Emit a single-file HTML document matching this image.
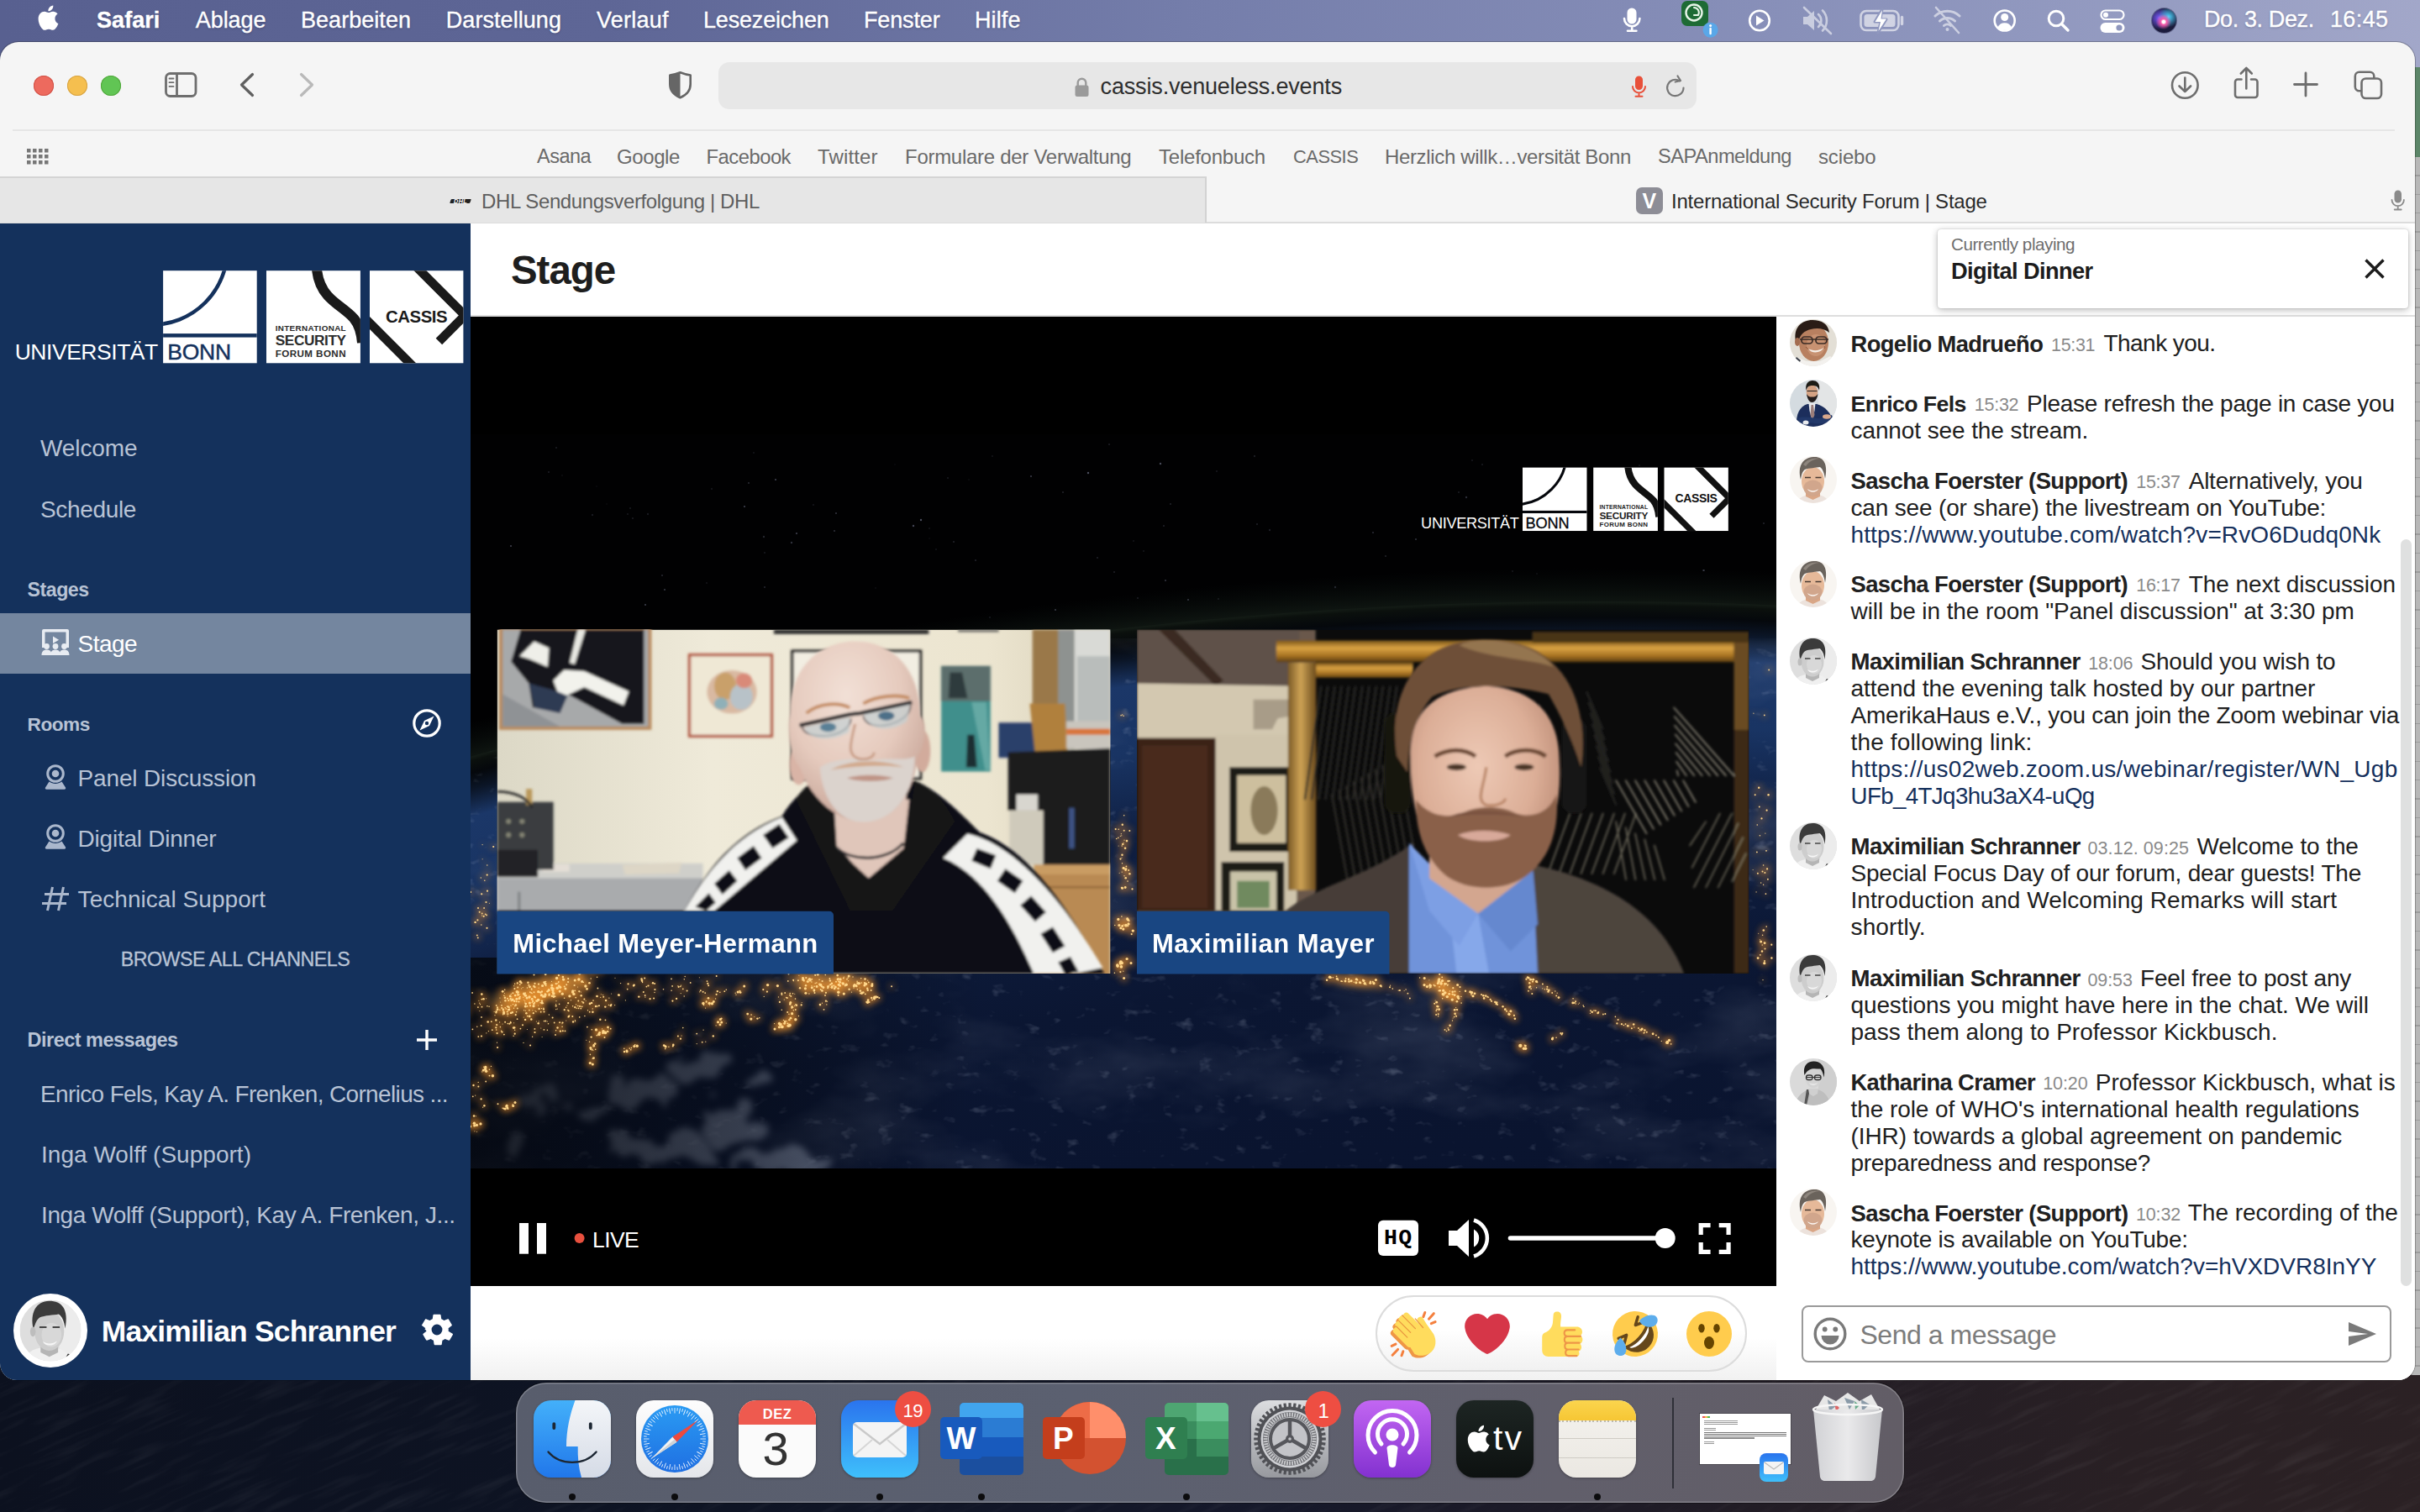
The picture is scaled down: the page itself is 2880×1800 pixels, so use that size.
<!DOCTYPE html>
<html lang="de"><head><meta charset="utf-8"><title>International Security Forum | Stage</title>
<style>
html,body{margin:0;padding:0}
body{width:2880px;height:1800px;position:relative;overflow:hidden;background:#1a1a22;font-family:"Liberation Sans",sans-serif}
.t{position:absolute;white-space:pre;line-height:1;font-family:"Liberation Sans",sans-serif}
svg{overflow:visible}
#desk{position:absolute;left:0;top:0;width:2880px;height:1800px;background:linear-gradient(90deg,#0c111f 0%,#0e1424 30%,#15182a 52%,#211c25 72%,#292024 88%,#2b2124 100%)}
#menubar{position:absolute;left:0;top:0;width:2880px;height:80px;background:linear-gradient(90deg,#586090 0%,#5e6696 25%,#757eab 50%,#858db7 70%,#949bc1 88%,#a2a7c9 100%)}
#win{position:absolute;left:0;top:50px;width:2874px;height:1593px;border-radius:22px 22px 20px 20px;background:#f5f5f5;overflow:hidden;box-shadow:0 0 0 1px rgba(0,0,0,.25)}
#tabbar{position:absolute;left:0;top:210px;width:2874px;height:56px;background:#f5f5f5;border-bottom:2px solid #dcdcdc;box-sizing:border-box}
#tab1{position:absolute;left:0;top:210px;width:1436px;height:55px;background:#e6e6e6;border-top:2px solid #d4d4d4;border-right:2px solid #d2d2d2;box-sizing:border-box}
</style></head>
<body>
<div id="desk"></div>
<svg style="position:absolute;left:0;top:1630px" width="2880" height="170"><defs><filter id="wp" x="0" y="0" width="100%" height="100%"><feTurbulence type="fractalNoise" baseFrequency="0.012 0.11" numOctaves="3" seed="4"/><feColorMatrix values="0 0 0 0 1  0 0 0 0 1  0 0 0 0 1  1.600 0 0 0 -.78"/></filter></defs><g transform="rotate(-24 1440 85)"><rect x="-200" y="-700" width="3300" height="1600" filter="url(#wp)" opacity=".07"/></g></svg>
<div style="position:absolute;left:2860px;top:78px;width:20px;height:110px;background:#5b8568;border-radius:14px 0 0 0"></div>
<div style="position:absolute;left:2860px;top:187px;width:20px;height:1450px;border-radius:0 0 0 12px;background:repeating-linear-gradient(180deg,#b7b7b7 0 21px,#9c9c9c 21px 22.500px)"></div>
<div id="menubar"></div>
<svg style="position:absolute;left:43px;top:5px" width="29" height="34" viewBox="0 0 170 200"><path fill="#fff" d="M150.4 68.2c-1 .8-18.600 10.700-18.600 32.800 0 25.500 22.400 34.600 23.100 34.800-.1.600-3.600 12.400-11.800 24.400-7.300 10.600-15 21.100-26.700 21.100s-14.700-6.800-28.200-6.800c-13.200 0-17.800 7-28.500 7s-18.200-9.800-26.700-21.800C23.100 145.600 15 123.600 15 102.700c0-33.500 21.800-51.300 43.200-51.300 11.400 0 20.900 7.500 28 7.500 6.800 0 17.400-7.900 30.400-7.900 4.900 0 22.500.4 34 17.200zM110.100 36.900c5.400-6.400 9.200-15.200 9.200-24 0-1.200-.1-2.500-.3-3.500-8.700.3-19.100 5.800-25.400 13.100-4.900 5.600-9.500 14.400-9.500 23.400 0 1.300.2 2.700.3 3.100.6.100 1.500.2 2.400.2 7.800 0 17.700-5.200 23.300-12.300z"/></svg>
<div class="t" style="left:115.0px;top:10.6px;font-size:27px;font-weight:700;color:#fff;letter-spacing:0.059px;text-shadow:0 1px 3px rgba(0,0,30,.25);-webkit-text-stroke:.35px #fff;">Safari</div>
<div class="t" style="left:232.7px;top:10.6px;font-size:27px;font-weight:400;color:#fff;letter-spacing:-0.030px;text-shadow:0 1px 3px rgba(0,0,30,.25);-webkit-text-stroke:.35px #fff;">Ablage</div>
<div class="t" style="left:358.0px;top:10.6px;font-size:27px;font-weight:400;color:#fff;letter-spacing:0.039px;text-shadow:0 1px 3px rgba(0,0,30,.25);-webkit-text-stroke:.35px #fff;">Bearbeiten</div>
<div class="t" style="left:530.8px;top:10.6px;font-size:27px;font-weight:400;color:#fff;letter-spacing:0.057px;text-shadow:0 1px 3px rgba(0,0,30,.25);-webkit-text-stroke:.35px #fff;">Darstellung</div>
<div class="t" style="left:710.0px;top:10.6px;font-size:27px;font-weight:400;color:#fff;letter-spacing:0.220px;text-shadow:0 1px 3px rgba(0,0,30,.25);-webkit-text-stroke:.35px #fff;">Verlauf</div>
<div class="t" style="left:837.0px;top:10.6px;font-size:27px;font-weight:400;color:#fff;letter-spacing:-0.184px;text-shadow:0 1px 3px rgba(0,0,30,.25);-webkit-text-stroke:.35px #fff;">Lesezeichen</div>
<div class="t" style="left:1028.0px;top:10.6px;font-size:27px;font-weight:400;color:#fff;letter-spacing:-0.135px;text-shadow:0 1px 3px rgba(0,0,30,.25);-webkit-text-stroke:.35px #fff;">Fenster</div>
<div class="t" style="left:1160.0px;top:10.6px;font-size:27px;font-weight:400;color:#fff;letter-spacing:0.097px;text-shadow:0 1px 3px rgba(0,0,30,.25);-webkit-text-stroke:.35px #fff;">Hilfe</div>
<div class="t" style="left:2623.0px;top:10.4px;font-size:27px;font-weight:400;color:#fff;letter-spacing:-0.387px;text-shadow:0 1px 3px rgba(0,0,30,.25);-webkit-text-stroke:.35px #fff;">Do. 3. Dez.</div>
<div class="t" style="left:2772.9px;top:10.4px;font-size:27px;font-weight:400;color:#fff;letter-spacing:0.404px;text-shadow:0 1px 3px rgba(0,0,30,.25);-webkit-text-stroke:.35px #fff;">16:45</div>
<svg style="position:absolute;left:1920px;top:0" width="700" height="50" viewBox="1920 0 700 50" fill="none" stroke="#fff" stroke-width="2.6" stroke-linecap="round" stroke-linejoin="round">
<!-- mic -->
<rect x="1936.500" y="9.500" width="11" height="19" rx="5.500" fill="#fff" stroke="none"/><path d="M1933 22a9.200 9.200 0 0 0 18.400 0M1942.200 31.500v5M1937 36.800h10.400"/>
<!-- green app -->
<rect x="2001" y="1" width="32" height="30" rx="7" fill="#1e6b35" stroke="none"/><circle cx="2016" cy="15" r="9.500" stroke="#e8f5e9" stroke-width="2.400"/><path d="M2016 9a6 6 0 0 1 5 9h-5" stroke="#e8f5e9" stroke-width="2"/>
<circle cx="2035.600" cy="35.700" r="9" fill="#5aa7e8" stroke="none"/><path d="M2035.600 34v6" stroke="#fff" stroke-width="2.400"/><circle cx="2035.600" cy="30.600" r="1.500" fill="#fff" stroke="none"/>
<!-- play -->
<circle cx="2094" cy="24.500" r="11.800"/><path d="M2090 18.500l9.500 6-9.500 6z" fill="#fff" stroke="none"/>
<!-- mute -->
<g opacity=".55"><path d="M2146 20h5l8-7v23l-8-7h-5z" fill="#fff" stroke="none"/><path d="M2164 17a10 10 0 0 1 0 15M2169 12.500a17 17 0 0 1 0 24M2147 9l32 31"/></g>
<!-- battery -->
<g opacity=".6"><rect x="2214.500" y="13" width="45" height="23" rx="6.500"/><path d="M2263.500 20.500v8" stroke-width="3.400"/><rect x="2218.500" y="17" width="37" height="15" rx="3.500" fill="#fff" stroke="none"/></g><path d="M2240 11l-9 15h7l-3 13 10-16h-7z" fill="#8f97be" stroke="#8f97be" stroke-width="3"/><path d="M2240 12l-8.500 14h6.500l-2.500 11 9.500-14.500h-6.500z" fill="#fff" stroke="none"/>
<!-- wifi off -->
<g opacity=".55"><path d="M2303 19a21 21 0 0 1 29 0M2308.500 25a13 13 0 0 1 18 0M2313.500 30.500a6 6 0 0 1 8 0" stroke-width="3"/><circle cx="2317.500" cy="35" r="2" fill="#fff" stroke="none"/><path d="M2304 9l27 30"/></g>
<!-- user -->
<circle cx="2385.700" cy="24.500" r="12"/><circle cx="2385.700" cy="20.500" r="4.500" fill="#fff" stroke="none"/><path d="M2377.500 32.500a9 9 0 0 1 16.400 0 12 12 0 0 1-16.400 0z" fill="#fff" stroke="none"/>
<!-- search -->
<circle cx="2447" cy="22" r="8.800" stroke-width="3"/><path d="M2453.500 28.500l7.500 7.500" stroke-width="3.400"/>
<!-- control center -->
<rect x="2500.500" y="12.500" width="27" height="10.500" rx="5.250" stroke-width="2.200"/><circle cx="2506" cy="17.750" r="3" fill="#fff" stroke="none"/><rect x="2499.500" y="27" width="29" height="12" rx="6" fill="#fff" stroke="none"/><circle cx="2522" cy="33" r="3.600" fill="#8f97be" stroke="none"/>
</svg>
<div style="position:absolute;left:2561px;top:10px;width:29px;height:29px;border-radius:50%;background:radial-gradient(circle at 48% 55%,#fff 0 7%,rgba(255,90,170,.95) 16%,rgba(255,90,170,0) 42%),radial-gradient(circle at 68% 35%,#4fd6ff 0,rgba(60,180,255,0) 45%),radial-gradient(circle at 30% 40%,#7a5cff 0,rgba(100,80,255,0) 50%),#1b1b3c;box-shadow:0 0 0 1px rgba(20,20,60,.4)"></div>
<div id="win"></div>
<div id="tabbar"></div><div id="tab1"></div>
<div style="position:absolute;left:40px;top:89.7px;width:24px;height:24px;border-radius:50%;background:#ed6a5e;box-shadow:inset 0 0 0 1px #d05147"></div>
<div style="position:absolute;left:79.8px;top:89.7px;width:24px;height:24px;border-radius:50%;background:#f5bf4f;box-shadow:inset 0 0 0 1px #d6a243"></div>
<div style="position:absolute;left:119.69999999999999px;top:89.7px;width:24px;height:24px;border-radius:50%;background:#61c554;box-shadow:inset 0 0 0 1px #51a73c"></div>
<div style="position:absolute;left:855px;top:74px;width:1164px;height:56px;border-radius:13px;background:#e7e7e7"></div>
<svg style="position:absolute;left:0;top:50px" width="2880" height="220" viewBox="0 50 2880 220" fill="none" stroke="#6e6e6e" stroke-width="2.800" stroke-linecap="round" stroke-linejoin="round">
<!-- sidebar icon -->
<rect x="197.500" y="87.500" width="35.500" height="27" rx="5"/><path d="M210.500 87.500v27" /><path d="M201.500 93.500h5M201.500 98.200h5M201.500 102.900h5" stroke-width="1.800"/>
<!-- back / forward -->
<path d="M300.500 88.500l-13 12.500 13 12.500" stroke="#606060" stroke-width="3.200"/><path d="M358.500 88.500l13 12.500-13 12.500" stroke="#b9b9b9" stroke-width="3.200"/>
<!-- shield -->
<path d="M809.500 86.200c4.500 1.700 8.500 2.700 12.200 3.300v10.500c0 8.500-5.500 13.500-12.200 16.200-6.700-2.700-12.200-7.700-12.200-16.200V89.500c3.700-.6 7.700-1.600 12.200-3.300z" stroke="#666" stroke-width="2.600"/><path d="M809.500 86.200c-4.500 1.700-8.500 2.700-12.200 3.300v10.500c0 8.500 5.500 13.500 12.200 16.200z" fill="#666" stroke="none"/>
<!-- lock -->
<rect x="1279.500" y="101.500" width="16" height="13.500" rx="2.500" fill="#9a9a9a" stroke="none"/><path d="M1282.700 102v-3.500a4.800 4.800 0 0 1 9.600 0V102" stroke="#9a9a9a" stroke-width="2.400"/>
<!-- red mic -->
<rect x="1946" y="90.500" width="9" height="16.500" rx="4.500" fill="#e8503a" stroke="none"/><path d="M1943 103a7.500 7.500 0 0 0 15 0M1950.500 110.500v4M1946.500 114.700h8" stroke="#e8503a" stroke-width="2"/>
<!-- reload -->
<path d="M2003.500 104.500a9.700 9.700 0 1 1-4.500-8.200" stroke="#777" stroke-width="2.200"/><path d="M1996.500 90.500l3.500 5.500-6.300 1.500" stroke="#777" stroke-width="2.200"/>
<!-- download -->
<circle cx="2600.300" cy="101.500" r="15.300" stroke-width="2.600"/><path d="M2600.300 92.500v16M2593.500 102.500l6.800 6.500 6.800-6.500" stroke-width="2.600"/>
<!-- share -->
<path d="M2667.500 94.500h-4.500a3 3 0 0 0-3 3v15.500a3 3 0 0 0 3 3h20.500a3 3 0 0 0 3-3V97.500a3 3 0 0 0-3-3h-4.500M2673.300 105.500V81.500M2666.800 87.500l6.500-6.500 6.500 6.500" stroke-width="2.600"/>
<!-- plus -->
<path d="M2744 87v27M2730.500 100.500h27" stroke-width="2.800"/>
<!-- tabs -->
<rect x="2802.800" y="85.800" width="22.500" height="22.500" rx="5" stroke-width="2.600"/><rect x="2810.500" y="93.500" width="23.500" height="23.500" rx="5" fill="#f5f5f5" stroke-width="2.600"/>
<!-- grid -->
<g fill="#777" stroke="none"><rect x="32" y="177" width="4.500" height="4.500"/><rect x="39" y="177" width="4.500" height="4.500"/><rect x="46" y="177" width="4.500" height="4.500"/><rect x="53" y="177" width="4.500" height="4.500"/><rect x="32" y="184" width="4.500" height="4.500"/><rect x="39" y="184" width="4.500" height="4.500"/><rect x="46" y="184" width="4.500" height="4.500"/><rect x="53" y="184" width="4.500" height="4.500"/><rect x="32" y="191" width="4.500" height="4.500"/><rect x="39" y="191" width="4.500" height="4.500"/><rect x="46" y="191" width="4.500" height="4.500"/><rect x="53" y="191" width="4.500" height="4.500"/></g>
<!-- tab mic -->
<rect x="2849.500" y="226.500" width="8.500" height="15" rx="4.250" fill="#8a8a8a" stroke="none"/><path d="M2846.500 238a7.200 7.200 0 0 0 14.400 0M2853.700 245.500v4M2849.700 249.500h8" stroke="#8a8a8a" stroke-width="1.800"/>
</svg>
<div class="t" style="left:1309.6px;top:90.4px;font-size:27px;font-weight:400;color:#2e2e2e;letter-spacing:-0.163px;">cassis.venueless.events</div>
<div style="position:absolute;left:15px;top:154px;width:2835px;height:2px;background:#e6e6e6"></div>
<div class="t" style="left:639.0px;top:174.9px;font-size:23.5px;font-weight:400;color:#6a6a6a;letter-spacing:-0.517px;">Asana</div>
<div class="t" style="left:734.0px;top:174.5px;font-size:24px;font-weight:400;color:#6a6a6a;letter-spacing:-0.398px;">Google</div>
<div class="t" style="left:840.6px;top:174.6px;font-size:23.82px;font-weight:400;color:#6a6a6a;letter-spacing:-0.524px;">Facebook</div>
<div class="t" style="left:973.0px;top:174.5px;font-size:24px;font-weight:400;color:#6a6a6a;letter-spacing:0.130px;">Twitter</div>
<div class="t" style="left:1077.0px;top:174.5px;font-size:24px;font-weight:400;color:#6a6a6a;letter-spacing:-0.281px;">Formulare der Verwaltung</div>
<div class="t" style="left:1379.0px;top:174.5px;font-size:24px;font-weight:400;color:#6a6a6a;letter-spacing:-0.222px;">Telefonbuch</div>
<div class="t" style="left:1539.0px;top:176.3px;font-size:21.86px;font-weight:400;color:#6a6a6a;letter-spacing:-0.481px;">CASSIS</div>
<div class="t" style="left:1648.0px;top:174.5px;font-size:24px;font-weight:400;color:#6a6a6a;letter-spacing:-0.349px;">Herzlich willk…versität Bonn</div>
<div class="t" style="left:1973.0px;top:174.8px;font-size:23.67px;font-weight:400;color:#6a6a6a;letter-spacing:-0.521px;">SAPAnmeldung</div>
<div class="t" style="left:2164.0px;top:174.5px;font-size:24px;font-weight:400;color:#6a6a6a;letter-spacing:-0.146px;">sciebo</div>
<div class="t" style="left:573.0px;top:227.7px;font-size:24px;font-weight:400;color:#5e5e5e;letter-spacing:-0.377px;">DHL Sendungsverfolgung | DHL</div>
<div style="position:absolute;left:536px;top:237px;width:24px;height:5px;background:#222;transform:skewX(-20deg);border-radius:1px"></div>
<div class="t" style="left:540.0px;top:236.3px;font-size:7.34px;font-weight:700;color:#fff;letter-spacing:0.367px;font-style:italic;">DHL</div>
<div style="position:absolute;left:1947px;top:223px;width:32px;height:32px;border-radius:7px;background:#8d8d96"></div>
<div class="t" style="left:1954.5px;top:227.1px;font-size:25px;font-weight:700;color:#fff;letter-spacing:0.000px;">V</div>
<div class="t" style="left:1989.0px;top:227.7px;font-size:24px;font-weight:400;color:#2a2a2a;letter-spacing:-0.224px;">International Security Forum | Stage</div>
<div id="sidebar" style="position:absolute;left:0;top:266px;width:560px;height:1377px;background:#14315c;border-radius:0 0 0 20px"></div>
<svg style="position:absolute;left:0px;top:300px" width="560" height="150" viewBox="0 300 560 150"><g transform="">
<clipPath id="sb1"><rect x="194.100" y="322.200" width="111.600" height="110.100"/></clipPath><clipPath id="sb2"><rect x="317" y="322.200" width="111.900" height="110.100"/></clipPath><clipPath id="sb3"><rect x="440" y="322.200" width="111.400" height="110.100"/></clipPath>
<rect x="194.100" y="322.200" width="111.600" height="110.100" fill="#fff"/>
<rect x="194.100" y="397.100" width="111.600" height="4.500" fill="#14315c"/>
<circle clip-path="url(#sb1)" cx="180.590" cy="296.670" r="89.950" fill="none" stroke="#14315c" stroke-width="4.500"/>
<rect x="317" y="322.200" width="111.900" height="110.100" fill="#fff"/>
<path clip-path="url(#sb2)" d="M376.500 314C377 330 381 342 390 352C400 363 412 369 421 379C427 386 430 396 431 408" fill="none" stroke="#1a1a1a" stroke-width="12"/>
<rect x="440" y="322.200" width="111.400" height="110.100" fill="#fff"/>
<g clip-path="url(#sb3)" fill="none" stroke="#1a1a1a" stroke-width="10.600"><path d="M492 314.200L553.300 375.500L522.400 406.400"/><path d="M432 376.600L496 440.600"/></g>
</g></svg>
<div class="t" style="left:17.7px;top:405.8px;font-size:26.5px;font-weight:400;color:#fff;letter-spacing:-0.465px;">UNIVERSITÄT</div>
<div class="t" style="left:199.3px;top:405.8px;font-size:26.5px;font-weight:400;color:#14315c;letter-spacing:-0.245px;-webkit-text-stroke:0.45px #14315c;">BONN</div>
<div class="t" style="left:327.7px;top:386.2px;font-size:9.9px;font-weight:700;color:#2b2b2b;letter-spacing:0.338px;">INTERNATIONAL</div>
<div class="t" style="left:327.7px;top:397.4px;font-size:17.23px;font-weight:700;color:#2b2b2b;letter-spacing:-0.379px;">SECURITY</div>
<div class="t" style="left:327.7px;top:415.3px;font-size:11.6px;font-weight:700;color:#2b2b2b;letter-spacing:0.443px;">FORUM BONN</div>
<div class="t" style="left:459.0px;top:366.7px;font-size:20.38px;font-weight:700;color:#1a1a1a;letter-spacing:-0.448px;">CASSIS</div>
<div class="t" style="left:48.0px;top:520.3px;font-size:28px;font-weight:400;color:#b8c3d5;letter-spacing:-0.098px;">Welcome</div>
<div class="t" style="left:48.0px;top:592.8px;font-size:28px;font-weight:400;color:#b8c3d5;letter-spacing:-0.346px;">Schedule</div>
<div class="t" style="left:32.6px;top:691.4px;font-size:23.2px;font-weight:700;color:#b8c3d5;letter-spacing:-0.510px;">Stages</div>
<div style="position:absolute;left:0;top:730px;width:560px;height:72px;background:#74869f"></div>
<svg style="position:absolute;left:49px;top:749px" width="34" height="32" viewBox="0 0 34 32"><path d="M3 0h28a2 2 0 0 1 2 2v20h-3.500V3.500H4.500V22H1V2a2 2 0 0 1 2-2z" fill="#e8ecf2"/><path d="M14 8.500l7 4.300-7 4.300z" fill="#e8ecf2"/><g fill="#e8ecf2"><circle cx="6.500" cy="20.500" r="3.400"/><circle cx="17" cy="20.500" r="3.400"/><circle cx="27.500" cy="20.500" r="3.400"/><path d="M.500 31c0-4.500 2.500-6.500 6-6.500s5.200 1.500 5.300 3c.6-1.700 2.500-3 5.200-3s4.600 1.300 5.200 3c.1-1.500 1.800-3 5.300-3s6 2 6 6.500z"/></g></svg>
<div class="t" style="left:92.6px;top:752.8px;font-size:28px;font-weight:400;color:#fff;letter-spacing:-0.554px;">Stage</div>
<div class="t" style="left:32.6px;top:852.2px;font-size:22.64px;font-weight:700;color:#b8c3d5;letter-spacing:-0.498px;">Rooms</div>
<svg style="position:absolute;left:491px;top:844px" width="34" height="34" viewBox="0 0 34 34"><circle cx="17" cy="17" r="15.200" fill="none" stroke="#fff" stroke-width="3.200"/><path d="M25.500 8.500L20 20 8.500 25.500 14 14z" fill="#fff"/><circle cx="17" cy="17" r="2.200" fill="#14315c"/></svg>
<svg style="position:absolute;left:53px;top:910px" width="26" height="30" viewBox="0 0 26 30"><circle cx="13" cy="11" r="9.300" fill="none" stroke="#aab7cc" stroke-width="3"/><circle cx="13" cy="11" r="4.300" fill="#aab7cc"/><path d="M5.500 20.500L1 27.500c-.6 1 .1 2.200 1.300 2.200h21.400c1.200 0 1.900-1.200 1.300-2.200l-4.500-7c-2.100 1.600-4.700 2.500-7.500 2.500s-5.400-.9-7.500-2.500z" fill="#aab7cc"/></svg>
<div class="t" style="left:92.6px;top:913.3px;font-size:28px;font-weight:400;color:#b8c3d5;letter-spacing:-0.161px;">Panel Discussion</div>
<svg style="position:absolute;left:53px;top:981px" width="26" height="30" viewBox="0 0 26 30"><circle cx="13" cy="11" r="9.300" fill="none" stroke="#aab7cc" stroke-width="3"/><circle cx="13" cy="11" r="4.300" fill="#aab7cc"/><path d="M5.500 20.500L1 27.500c-.6 1 .1 2.200 1.300 2.200h21.400c1.200 0 1.900-1.200 1.300-2.200l-4.500-7c-2.100 1.600-4.700 2.500-7.500 2.500s-5.400-.9-7.500-2.500z" fill="#aab7cc"/></svg>
<div class="t" style="left:92.6px;top:984.7px;font-size:28px;font-weight:400;color:#b8c3d5;letter-spacing:-0.234px;">Digital Dinner</div>
<svg style="position:absolute;left:50px;top:1056px" width="32" height="28" viewBox="0 0 32 28" fill="none" stroke="#aab7cc" stroke-width="3"><path d="M12.500 0L6.500 28M25.500 0L19.500 28M3 8.500h29M0 19.500h29"/></svg>
<div class="t" style="left:92.6px;top:1056.6px;font-size:28px;font-weight:400;color:#b8c3d5;letter-spacing:0.048px;">Technical Support</div>
<div class="t" style="left:143.7px;top:1131.3px;font-size:23.27px;font-weight:400;color:#b8c3d5;letter-spacing:-0.512px;-webkit-text-stroke:.3px #b8c3d5;">BROWSE ALL CHANNELS</div>
<div class="t" style="left:32.6px;top:1227.4px;font-size:23.5px;font-weight:700;color:#b8c3d5;letter-spacing:-0.517px;">Direct messages</div>
<svg style="position:absolute;left:496px;top:1226px" width="24" height="24" viewBox="0 0 24 24"><path d="M12 0v24M0 12h24" stroke="#fff" stroke-width="3.400" fill="none"/></svg>
<div class="t" style="left:48.0px;top:1289.2px;font-size:27.94px;font-weight:400;color:#b8c3d5;letter-spacing:-0.615px;">Enrico Fels, Kay A. Frenken, Cornelius ...</div>
<div class="t" style="left:49.0px;top:1360.6px;font-size:28px;font-weight:400;color:#b8c3d5;letter-spacing:0.023px;">Inga Wolff (Support)</div>
<div class="t" style="left:49.0px;top:1432.7px;font-size:28px;font-weight:400;color:#b8c3d5;letter-spacing:-0.399px;">Inga Wolff (Support), Kay A. Frenken, J...</div>
<svg style="position:absolute;left:16px;top:1540px" width="88" height="88" viewBox="0 0 88 88"><defs><clipPath id="uav"><circle cx="44" cy="44" r="36.500"/></clipPath></defs><circle cx="44" cy="44" r="44" fill="#fff"/><g clip-path="url(#uav)"><g transform="translate(7.500 7.500) scale(1.3036)"><rect width="56" height="56" fill="#dedede"/><rect x="36" width="20" height="56" fill="#ececec"/><g filter="url(#avb)">
<path d="M4 56c2-8 8-11 15-12h14c5 1 9 3 12 7l-3 5z" fill="#f0f0f0"/><path d="M40 56l4-7c3 1 6 3 8 7z" fill="#2e2e2e"/>
<path d="M19 40h16v8l-8 4-8-4z" fill="#b5b5b5"/>
<ellipse cx="27" cy="28.500" rx="13.500" ry="18" fill="#cdcdcd"/><ellipse cx="29" cy="32" rx="9" ry="11" fill="#d8d8d8"/>
<path d="M12.500 27C9 12 15 1 27 1c11 0 18 7 14.500 25-1-7-3-11-6-13-5 1-13 1-17 3-3 2-4 5-6 11z" fill="#3b3b3b"/><ellipse cx="12" cy="29" rx="2.500" ry="4.500" fill="#bdbdbd"/>
<path d="M21 38c4 2.500 9 2.500 13-.5-2 5-11 5.500-13 .5z" fill="#f7f7f7"/><path d="M18 25h6.500M30 25h6.500" stroke="#444" stroke-width="1.500"/></g></g></g></svg>
<div class="t" style="left:120.7px;top:1568.0px;font-size:35.42px;font-weight:700;color:#fff;letter-spacing:-0.779px;">Maximilian Schranner</div>
<svg style="position:absolute;left:498px;top:1561px" width="44" height="44" viewBox="0 0 24 24"><path fill="#fff" d="M12 15.500A3.500 3.500 0 0 1 8.500 12 3.500 3.500 0 0 1 12 8.500a3.500 3.500 0 0 1 3.500 3.500 3.500 3.500 0 0 1-3.500 3.500m7.430-2.530c.04-.32.070-.64.070-.97s-.03-.66-.07-1l2.110-1.630c.19-.15.240-.42.120-.64l-2-3.460c-.12-.22-.39-.31-.61-.22l-2.490 1c-.52-.39-1.060-.73-1.690-.98l-.37-2.650A.506.506 0 0 0 14 2h-4c-.25 0-.46.180-.5.420l-.37 2.650c-.63.250-1.170.59-1.690.98l-2.490-1c-.22-.09-.49 0-.61.220l-2 3.460c-.13.220-.7.490.12.640L4.570 11c-.4.340-.7.670-.07 1s.3.650.7.970l-2.110 1.660c-.19.150-.25.420-.12.640l2 3.460c.12.220.39.300.61.220l2.490-1.010c.52.400 1.060.74 1.690.99l.37 2.650c.4.240.25.420.5.420h4c.25 0 .46-.18.500-.42l.37-2.650c.63-.26 1.170-.59 1.690-.99l2.490 1.010c.22.080.49 0 .61-.22l2-3.460c.12-.22.070-.49-.12-.64z"/></svg>
<div style="position:absolute;left:560px;top:266px;width:2314px;height:111px;background:#fff;border-bottom:2px solid #dedede;box-sizing:border-box"></div>
<div class="t" style="left:608.0px;top:298.3px;font-size:47.47px;font-weight:700;color:#1e1e1e;letter-spacing:-1.044px;">Stage</div>
<div style="position:absolute;left:560px;top:1531px;width:1554px;height:112px;background:linear-gradient(180deg,#fff 55%,#f1f1f1 100%)"></div>
<div style="position:absolute;left:560px;top:377px;width:1554px;height:1154px;background:#000"></div>
<svg style="position:absolute;left:560px;top:517px" width="1554" height="874" viewBox="560 517 1554 874">
<defs>
<radialGradient id="earthg" gradientUnits="userSpaceOnUse" cx="1900" cy="5666" r="4950">
<stop offset="0.80" stop-color="#09112a"/><stop offset="0.8700" stop-color="#0a142f"/><stop offset="0.9090" stop-color="#0b1632"/><stop offset="0.9500" stop-color="#0f1f42"/><stop offset="0.9700" stop-color="#193463"/><stop offset="0.9860" stop-color="#1b3768"/><stop offset="0.9925" stop-color="#0b1526"/><stop offset="0.9962" stop-color="#05080c"/><stop offset="0.9990" stop-color="#0b100d"/><stop offset="1" stop-color="#141c16"/></radialGradient>
<radialGradient id="glow" gradientUnits="userSpaceOnUse" cx="1900" cy="5666" r="4990"><stop offset="0.9920" stop-color="#141d17" stop-opacity=".7"/><stop offset="1" stop-color="#0a1210" stop-opacity="0"/></radialGradient>
<filter id="cl" x="0" y="0" width="100%" height="100%"><feTurbulence type="fractalNoise" baseFrequency="0.0045 0.009" numOctaves="5" seed="11"/><feColorMatrix values="0 0 0 0 .62  0 0 0 0 .68  0 0 0 0 .80  1.900 0 0 0 -.92"/></filter>
<filter id="cl2" x="0" y="0" width="100%" height="100%"><feTurbulence type="fractalNoise" baseFrequency="0.045 0.07" numOctaves="3" seed="5"/><feColorMatrix values="0 0 0 0 .70  0 0 0 0 .76  0 0 0 0 .90  3.600 0 0 0 -2.350"/></filter>
<filter id="b1"><feGaussianBlur stdDeviation=".7"/></filter><filter id="b3"><feGaussianBlur stdDeviation="4"/></filter>
<clipPath id="earthclip"><circle cx="1900" cy="5666" r="4950"/></clipPath>
<clipPath id="vclip"><rect x="560" y="517" width="1554" height="874"/></clipPath>
</defs>
<g clip-path="url(#vclip)">
<rect x="560" y="517" width="1554" height="874" fill="#010102"/>
<g fill="#cfd6ff"><circle cx="1065" cy="553" r="0.7" fill-opacity="0.10"/><circle cx="1393" cy="600" r="0.7" fill-opacity="0.35"/><circle cx="897" cy="539" r="1" fill-opacity="0.10"/><circle cx="705" cy="613" r="1.2" fill-opacity="0.12"/><circle cx="910" cy="658" r="0.7" fill-opacity="0.25"/><circle cx="1178" cy="735" r="0.7" fill-opacity="0.25"/><circle cx="771" cy="612" r="1.2" fill-opacity="0.12"/><circle cx="1042" cy="700" r="0.8" fill-opacity="0.11"/><circle cx="1448" cy="561" r="0.7" fill-opacity="0.24"/><circle cx="662" cy="533" r="0.8" fill-opacity="0.23"/><circle cx="1387" cy="691" r="1" fill-opacity="0.26"/><circle cx="1265" cy="586" r="0.8" fill-opacity="0.29"/><circle cx="942" cy="646" r="1.2" fill-opacity="0.23"/><circle cx="1096" cy="619" r="1.2" fill-opacity="0.37"/><circle cx="747" cy="612" r="0.9" fill-opacity="0.13"/><circle cx="1320" cy="529" r="0.7" fill-opacity="0.31"/><circle cx="1450" cy="713" r="0.9" fill-opacity="0.18"/><circle cx="1106" cy="629" r="1" fill-opacity="0.10"/><circle cx="710" cy="579" r="0.7" fill-opacity="0.10"/><circle cx="1649" cy="662" r="1" fill-opacity="0.17"/><circle cx="1161" cy="667" r="0.7" fill-opacity="0.36"/><circle cx="1114" cy="654" r="1" fill-opacity="0.10"/><circle cx="1752" cy="548" r="0.8" fill-opacity="0.20"/><circle cx="1981" cy="629" r="0.8" fill-opacity="0.21"/><circle cx="1414" cy="714" r="1" fill-opacity="0.34"/><circle cx="995" cy="611" r="0.9" fill-opacity="0.28"/><circle cx="1153" cy="571" r="0.7" fill-opacity="0.13"/><circle cx="923" cy="571" r="1" fill-opacity="0.33"/><circle cx="847" cy="582" r="0.8" fill-opacity="0.21"/><circle cx="1135" cy="645" r="0.8" fill-opacity="0.29"/><circle cx="1361" cy="656" r="0.7" fill-opacity="0.22"/><circle cx="1911" cy="729" r="1.2" fill-opacity="0.20"/><circle cx="1181" cy="543" r="1" fill-opacity="0.10"/><circle cx="669" cy="566" r="0.8" fill-opacity="0.11"/><circle cx="1493" cy="543" r="1.2" fill-opacity="0.13"/><circle cx="722" cy="600" r="0.7" fill-opacity="0.10"/><circle cx="886" cy="603" r="0.9" fill-opacity="0.37"/><circle cx="1496" cy="624" r="0.7" fill-opacity="0.33"/><circle cx="2099" cy="623" r="1" fill-opacity="0.17"/><circle cx="788" cy="685" r="0.9" fill-opacity="0.22"/><circle cx="1634" cy="634" r="0.8" fill-opacity="0.37"/><circle cx="1381" cy="552" r="1.2" fill-opacity="0.35"/><circle cx="1736" cy="586" r="0.7" fill-opacity="0.29"/><circle cx="968" cy="601" r="0.8" fill-opacity="0.19"/><circle cx="909" cy="639" r="1.2" fill-opacity="0.18"/><circle cx="910" cy="699" r="0.8" fill-opacity="0.32"/><circle cx="1829" cy="683" r="0.8" fill-opacity="0.14"/><circle cx="1326" cy="681" r="0.7" fill-opacity="0.32"/><circle cx="1295" cy="563" r="1.2" fill-opacity="0.37"/><circle cx="1256" cy="726" r="0.9" fill-opacity="0.37"/><circle cx="1128" cy="569" r="0.8" fill-opacity="0.22"/><circle cx="1087" cy="626" r="1.2" fill-opacity="0.33"/><circle cx="1306" cy="664" r="0.7" fill-opacity="0.33"/><circle cx="750" cy="605" r="0.8" fill-opacity="0.22"/><circle cx="841" cy="694" r="0.9" fill-opacity="0.11"/><circle cx="2027" cy="679" r="1" fill-opacity="0.20"/><circle cx="2028" cy="679" r="0.8" fill-opacity="0.38"/><circle cx="608" cy="650" r="1" fill-opacity="0.32"/><circle cx="791" cy="702" r="1" fill-opacity="0.28"/><circle cx="1106" cy="641" r="0.8" fill-opacity="0.09"/><circle cx="1800" cy="680" r="0.7" fill-opacity="0.24"/><circle cx="2007" cy="615" r="0.8" fill-opacity="0.33"/><circle cx="891" cy="575" r="0.9" fill-opacity="0.23"/><circle cx="1745" cy="592" r="1.2" fill-opacity="0.21"/><circle cx="768" cy="720" r="0.9" fill-opacity="0.35"/><circle cx="1589" cy="699" r="1.2" fill-opacity="0.21"/><circle cx="1983" cy="630" r="1.2" fill-opacity="0.13"/><circle cx="1354" cy="712" r="0.8" fill-opacity="0.26"/><circle cx="1764" cy="553" r="0.8" fill-opacity="0.22"/><circle cx="1685" cy="642" r="0.9" fill-opacity="0.28"/><circle cx="1385" cy="626" r="0.7" fill-opacity="0.34"/><circle cx="653" cy="562" r="0.7" fill-opacity="0.31"/><circle cx="1349" cy="644" r="0.7" fill-opacity="0.21"/><circle cx="1511" cy="631" r="1.2" fill-opacity="0.14"/><circle cx="993" cy="632" r="1" fill-opacity="0.23"/><circle cx="948" cy="635" r="0.9" fill-opacity="0.36"/><circle cx="1944" cy="565" r="1" fill-opacity="0.12"/><circle cx="753" cy="617" r="0.7" fill-opacity="0.28"/><circle cx="1227" cy="567" r="0.9" fill-opacity="0.32"/><circle cx="1951" cy="554" r="0.9" fill-opacity="0.12"/></g>
<circle cx="1900" cy="5666" r="4990" fill="url(#glow)"/>
<circle cx="1900" cy="5666" r="4950" fill="url(#earthg)"/>
<g clip-path="url(#earthclip)">
<rect x="560" y="760" width="1554" height="631" filter="url(#cl)" opacity=".17"/>
<rect x="560" y="760" width="1554" height="631" filter="url(#cl2)" opacity=".20"/>
<filter id="b8"><feGaussianBlur stdDeviation="7"/></filter>
<filter id="cb" x="-20%" y="-20%" width="140%" height="140%"><feTurbulence type="fractalNoise" baseFrequency="0.025" numOctaves="3" seed="8" result="n"/><feDisplacementMap in="SourceGraphic" in2="n" scale="55" xChannelSelector="R" yChannelSelector="G"/><feGaussianBlur stdDeviation="4.500"/></filter>
<g fill="#a3aec6" filter="url(#cb)" opacity=".55"><ellipse cx="830" cy="1272" rx="38" ry="15"/><ellipse cx="760" cy="1300" rx="46" ry="17"/><ellipse cx="872" cy="1338" rx="42" ry="22"/><ellipse cx="790" cy="1368" rx="66" ry="16"/><ellipse cx="930" cy="1384" rx="58" ry="12"/><ellipse cx="702" cy="1322" rx="24" ry="11"/><ellipse cx="648" cy="1312" rx="16" ry="9"/><ellipse cx="905" cy="1290" rx="22" ry="9"/><ellipse cx="620" cy="1365" rx="12" ry="16"/></g>
<linearGradient id="landsh" gradientUnits="userSpaceOnUse" x1="560" y1="1250" x2="1150" y2="1330"><stop offset="0" stop-color="#04060a" stop-opacity=".78"/><stop offset=".55" stop-color="#04060a" stop-opacity=".45"/><stop offset="1" stop-color="#04060a" stop-opacity="0"/></linearGradient>
<rect x="560" y="1140" width="700" height="260" fill="url(#landsh)"/>
<g fill="#e0a050" filter="url(#b8)" opacity=".6"><ellipse cx="655" cy="1176" rx="48" ry="12" transform="rotate(-14 655 1176)"/><ellipse cx="612" cy="1192" rx="30" ry="9"/><ellipse cx="985" cy="1169" rx="46" ry="8"/><ellipse cx="1716" cy="1175" rx="20" ry="9" transform="rotate(28 1716 1175)"/><ellipse cx="1612" cy="1167" rx="30" ry="4" transform="rotate(8 1612 1167)"/><ellipse cx="934" cy="1221" rx="7" ry="5"/></g>
<g fill="#ff9a2a" filter="url(#b3)" opacity=".85"><circle cx="660.5" cy="1186.2" r="2.2"/><circle cx="620.7" cy="1176.8" r="1.3"/><circle cx="710.6" cy="1163.3" r="1.8"/><circle cx="671.7" cy="1202.2" r="2.4"/><circle cx="669.9" cy="1163.1" r="2.9"/><circle cx="681.7" cy="1179.9" r="3.6"/><circle cx="607.2" cy="1186.0" r="3.0"/><circle cx="701.5" cy="1170.2" r="2.8"/><circle cx="653.2" cy="1178.7" r="3.6"/><circle cx="610.0" cy="1190.0" r="3.6"/><circle cx="635.5" cy="1160.6" r="2.2"/><circle cx="662.6" cy="1164.5" r="3.8"/><circle cx="663.8" cy="1170.8" r="1.5"/><circle cx="676.2" cy="1194.2" r="2.3"/><circle cx="636.4" cy="1175.1" r="2.6"/><circle cx="636.0" cy="1186.5" r="2.8"/><circle cx="598.2" cy="1180.3" r="3.1"/><circle cx="704.8" cy="1155.4" r="3.9"/><circle cx="645.6" cy="1173.5" r="3.6"/><circle cx="715.4" cy="1156.1" r="2.7"/><circle cx="649.0" cy="1171.3" r="3.5"/><circle cx="632.9" cy="1178.3" r="1.3"/><circle cx="703.1" cy="1141.4" r="1.4"/><circle cx="662.2" cy="1165.1" r="1.5"/><circle cx="645.1" cy="1193.8" r="3.6"/><circle cx="694.4" cy="1169.4" r="1.2"/><circle cx="647.9" cy="1169.6" r="3.6"/><circle cx="688.9" cy="1166.0" r="4.0"/><circle cx="651.6" cy="1180.3" r="2.8"/><circle cx="674.2" cy="1172.3" r="2.3"/><circle cx="641.1" cy="1176.1" r="1.2"/><circle cx="670.6" cy="1166.1" r="3.8"/><circle cx="676.2" cy="1165.1" r="2.4"/><circle cx="613.2" cy="1185.0" r="2.8"/><circle cx="616.2" cy="1181.2" r="3.8"/><circle cx="624.0" cy="1183.5" r="3.2"/><circle cx="658.8" cy="1182.9" r="3.9"/><circle cx="618.3" cy="1183.8" r="1.1"/><circle cx="623.5" cy="1190.3" r="1.2"/><circle cx="622.2" cy="1175.6" r="1.3"/><circle cx="630.5" cy="1174.8" r="3.0"/><circle cx="630.4" cy="1193.9" r="3.2"/><circle cx="665.3" cy="1173.8" r="3.0"/><circle cx="676.1" cy="1169.0" r="2.4"/><circle cx="632.6" cy="1177.2" r="2.1"/><circle cx="646.3" cy="1186.5" r="2.8"/><circle cx="648.3" cy="1186.3" r="3.3"/><circle cx="692.7" cy="1168.4" r="3.2"/><circle cx="648.9" cy="1183.7" r="3.4"/><circle cx="657.8" cy="1181.3" r="2.3"/><circle cx="649.7" cy="1173.3" r="2.0"/><circle cx="631.0" cy="1197.3" r="2.4"/><circle cx="664.8" cy="1169.0" r="2.1"/><circle cx="615.8" cy="1170.4" r="2.4"/><circle cx="658.4" cy="1179.8" r="2.6"/><circle cx="677.9" cy="1185.8" r="3.5"/><circle cx="666.2" cy="1180.0" r="3.4"/><circle cx="618.8" cy="1172.1" r="2.1"/><circle cx="672.9" cy="1177.0" r="3.4"/><circle cx="653.5" cy="1184.9" r="2.3"/><circle cx="630.0" cy="1187.0" r="3.7"/><circle cx="656.7" cy="1176.3" r="3.8"/><circle cx="712.9" cy="1142.5" r="2.3"/><circle cx="716.8" cy="1153.7" r="1.7"/><circle cx="649.2" cy="1159.8" r="3.0"/><circle cx="630.9" cy="1181.2" r="2.1"/><circle cx="657.4" cy="1178.8" r="2.8"/><circle cx="646.7" cy="1194.6" r="1.2"/><circle cx="689.8" cy="1159.0" r="3.7"/><circle cx="701.7" cy="1152.0" r="2.8"/><circle cx="703.2" cy="1165.0" r="1.6"/><circle cx="644.9" cy="1191.6" r="2.6"/><circle cx="598.8" cy="1201.7" r="2.9"/><circle cx="644.4" cy="1184.7" r="3.6"/><circle cx="605.3" cy="1191.0" r="2.1"/><circle cx="669.3" cy="1183.2" r="3.4"/><circle cx="682.9" cy="1183.4" r="3.7"/><circle cx="669.8" cy="1156.0" r="1.1"/><circle cx="611.8" cy="1173.7" r="1.2"/><circle cx="653.7" cy="1183.6" r="2.6"/><circle cx="627.1" cy="1188.0" r="3.3"/><circle cx="664.8" cy="1173.5" r="1.5"/><circle cx="663.3" cy="1176.3" r="3.9"/><circle cx="661.8" cy="1171.1" r="2.5"/><circle cx="646.6" cy="1185.5" r="2.1"/><circle cx="629.3" cy="1172.7" r="2.1"/><circle cx="666.2" cy="1180.9" r="1.5"/><circle cx="610.4" cy="1182.3" r="2.2"/><circle cx="671.7" cy="1174.6" r="2.2"/><circle cx="612.4" cy="1177.0" r="2.2"/><circle cx="664.9" cy="1161.2" r="2.3"/><circle cx="633.2" cy="1189.4" r="3.1"/><circle cx="617.4" cy="1192.5" r="2.4"/><circle cx="658.9" cy="1186.5" r="3.1"/><circle cx="683.6" cy="1173.0" r="2.3"/><circle cx="701.1" cy="1149.3" r="2.2"/><circle cx="693.8" cy="1156.2" r="1.8"/><circle cx="640.7" cy="1180.7" r="3.4"/><circle cx="619.2" cy="1168.6" r="3.4"/><circle cx="628.4" cy="1169.7" r="2.7"/><circle cx="687.6" cy="1175.1" r="1.1"/><circle cx="689.1" cy="1179.9" r="1.2"/><circle cx="666.7" cy="1175.3" r="3.6"/><circle cx="658.2" cy="1177.0" r="3.5"/><circle cx="698.5" cy="1177.3" r="3.0"/><circle cx="687.3" cy="1148.1" r="2.8"/><circle cx="656.8" cy="1173.1" r="3.3"/><circle cx="608.8" cy="1186.8" r="1.4"/><circle cx="649.4" cy="1155.7" r="1.3"/><circle cx="640.7" cy="1190.3" r="3.5"/><circle cx="657.3" cy="1181.3" r="1.8"/><circle cx="616.2" cy="1175.5" r="2.2"/><circle cx="637.0" cy="1187.5" r="2.1"/><circle cx="644.9" cy="1180.5" r="2.5"/><circle cx="684.2" cy="1166.9" r="3.2"/><circle cx="681.6" cy="1181.3" r="3.3"/><circle cx="636.5" cy="1170.8" r="2.5"/><circle cx="612.6" cy="1171.3" r="1.5"/><circle cx="696.9" cy="1174.0" r="3.7"/><circle cx="623.5" cy="1183.0" r="3.2"/><circle cx="633.2" cy="1193.5" r="1.6"/><circle cx="608.3" cy="1191.4" r="1.7"/><circle cx="600.7" cy="1178.2" r="1.8"/><circle cx="616.6" cy="1184.3" r="3.2"/><circle cx="609.8" cy="1191.4" r="1.6"/><circle cx="649.2" cy="1183.9" r="2.0"/><circle cx="636.3" cy="1193.5" r="1.9"/><circle cx="625.5" cy="1185.2" r="3.5"/><circle cx="597.2" cy="1200.0" r="2.2"/><circle cx="641.0" cy="1171.6" r="2.4"/><circle cx="592.1" cy="1201.7" r="3.2"/><circle cx="599.6" cy="1205.9" r="3.4"/><circle cx="610.5" cy="1195.7" r="1.7"/><circle cx="615.2" cy="1180.7" r="3.4"/><circle cx="633.1" cy="1182.5" r="1.6"/><circle cx="625.8" cy="1195.1" r="2.8"/><circle cx="649.5" cy="1168.5" r="1.7"/><circle cx="635.5" cy="1181.3" r="2.1"/><circle cx="622.8" cy="1187.2" r="1.3"/><circle cx="632.1" cy="1181.8" r="2.0"/><circle cx="595.7" cy="1193.0" r="1.1"/><circle cx="615.8" cy="1200.6" r="2.3"/><circle cx="635.0" cy="1197.7" r="3.4"/><circle cx="606.5" cy="1202.4" r="1.4"/><circle cx="623.6" cy="1202.7" r="1.4"/><circle cx="656.5" cy="1168.3" r="1.3"/><circle cx="643.2" cy="1181.5" r="3.0"/><circle cx="623.8" cy="1183.4" r="2.7"/><circle cx="599.9" cy="1185.3" r="1.7"/><circle cx="620.4" cy="1170.1" r="2.7"/><circle cx="614.7" cy="1192.3" r="2.3"/><circle cx="608.0" cy="1205.9" r="2.7"/><circle cx="612.2" cy="1191.8" r="2.7"/><circle cx="614.9" cy="1189.3" r="3.3"/><circle cx="618.0" cy="1188.6" r="3.4"/><circle cx="638.5" cy="1191.6" r="2.8"/><circle cx="601.4" cy="1191.2" r="2.7"/><circle cx="608.0" cy="1197.2" r="1.5"/><circle cx="656.9" cy="1185.7" r="2.9"/><circle cx="590.7" cy="1196.9" r="2.0"/><circle cx="625.3" cy="1198.1" r="3.2"/><circle cx="649.8" cy="1184.9" r="1.7"/><circle cx="625.1" cy="1182.2" r="1.9"/><circle cx="605.1" cy="1202.1" r="3.0"/><circle cx="604.1" cy="1209.4" r="1.4"/><circle cx="624.8" cy="1193.9" r="1.4"/><circle cx="627.4" cy="1176.0" r="1.5"/><circle cx="635.4" cy="1194.8" r="2.9"/><circle cx="635.4" cy="1174.0" r="2.5"/><circle cx="639.7" cy="1192.2" r="1.6"/><circle cx="644.6" cy="1200.6" r="1.5"/><circle cx="709.0" cy="1198.0" r="2.7"/><circle cx="713.0" cy="1197.3" r="2.1"/><circle cx="681.6" cy="1197.7" r="1.6"/><circle cx="694.2" cy="1193.7" r="2.4"/><circle cx="562.1" cy="1181.9" r="2.0"/><circle cx="643.7" cy="1204.7" r="2.0"/><circle cx="553.4" cy="1195.8" r="1.9"/><circle cx="674.9" cy="1197.0" r="1.3"/><circle cx="692.8" cy="1192.6" r="1.7"/><circle cx="609.8" cy="1205.2" r="2.7"/><circle cx="624.7" cy="1191.8" r="1.3"/><circle cx="689.4" cy="1180.3" r="2.4"/><circle cx="676.9" cy="1209.9" r="2.7"/><circle cx="692.6" cy="1198.3" r="2.0"/><circle cx="582.1" cy="1198.3" r="1.5"/><circle cx="573.5" cy="1198.7" r="2.0"/><circle cx="627.6" cy="1197.8" r="1.9"/><circle cx="684.3" cy="1199.1" r="2.7"/><circle cx="676.8" cy="1203.4" r="2.0"/><circle cx="661.8" cy="1201.6" r="1.5"/><circle cx="699.5" cy="1202.8" r="1.4"/><circle cx="600.1" cy="1207.5" r="1.4"/><circle cx="568.9" cy="1199.1" r="2.0"/><circle cx="579.9" cy="1197.7" r="1.8"/><circle cx="688.5" cy="1200.4" r="1.8"/><circle cx="570.7" cy="1194.2" r="1.3"/><circle cx="647.5" cy="1215.6" r="1.7"/><circle cx="594.9" cy="1202.3" r="1.6"/><circle cx="673.7" cy="1199.3" r="1.6"/><circle cx="601.1" cy="1216.8" r="2.2"/><circle cx="630.2" cy="1209.9" r="2.8"/><circle cx="663.2" cy="1201.1" r="1.3"/><circle cx="592.0" cy="1199.3" r="2.3"/><circle cx="720.5" cy="1214.3" r="1.9"/><circle cx="715.3" cy="1183.7" r="1.2"/><circle cx="595.0" cy="1188.0" r="1.3"/><circle cx="612.8" cy="1197.7" r="1.8"/><circle cx="608.3" cy="1183.4" r="1.4"/><circle cx="684.2" cy="1179.3" r="2.1"/><circle cx="711.0" cy="1197.5" r="1.5"/><circle cx="685.6" cy="1195.9" r="1.4"/><circle cx="671.6" cy="1188.2" r="1.8"/><circle cx="651.3" cy="1216.1" r="1.1"/><circle cx="640.5" cy="1191.5" r="1.3"/><circle cx="607.7" cy="1189.3" r="2.6"/><circle cx="690.1" cy="1198.0" r="2.4"/><circle cx="614.6" cy="1204.7" r="1.8"/><circle cx="731.7" cy="1196.6" r="1.3"/><circle cx="569.9" cy="1191.3" r="1.2"/><circle cx="578.7" cy="1188.8" r="1.1"/><circle cx="605.5" cy="1198.6" r="2.1"/><circle cx="634.1" cy="1191.9" r="2.5"/><circle cx="653.5" cy="1208.1" r="1.2"/><circle cx="702.0" cy="1194.9" r="2.8"/><circle cx="597.0" cy="1196.9" r="1.9"/><circle cx="604.0" cy="1188.8" r="2.2"/><circle cx="695.4" cy="1189.6" r="2.2"/><circle cx="649.3" cy="1215.5" r="2.1"/><circle cx="701.7" cy="1204.7" r="1.9"/><circle cx="691.3" cy="1200.6" r="2.0"/><circle cx="558.3" cy="1191.8" r="1.8"/><circle cx="665.6" cy="1195.4" r="1.7"/><circle cx="724.4" cy="1196.4" r="1.2"/><circle cx="607.8" cy="1217.6" r="2.4"/><circle cx="721.1" cy="1191.0" r="2.7"/><circle cx="632.3" cy="1213.5" r="2.7"/><circle cx="706.0" cy="1191.1" r="1.8"/><circle cx="736.1" cy="1184.5" r="2.7"/><circle cx="603.4" cy="1207.1" r="1.6"/><circle cx="647.0" cy="1201.4" r="2.4"/><circle cx="599.6" cy="1204.3" r="2.4"/><circle cx="686.2" cy="1200.2" r="1.6"/><circle cx="634.8" cy="1206.2" r="2.4"/><circle cx="704.1" cy="1193.9" r="2.6"/><circle cx="627.8" cy="1209.6" r="1.9"/><circle cx="641.6" cy="1200.9" r="2.6"/><circle cx="590.4" cy="1205.4" r="2.5"/><circle cx="611.6" cy="1217.7" r="1.1"/><circle cx="571.5" cy="1195.7" r="1.4"/><circle cx="573.0" cy="1210.9" r="1.9"/><circle cx="732.0" cy="1164.2" r="1.2"/><circle cx="601.2" cy="1199.7" r="1.7"/><circle cx="564.9" cy="1195.0" r="1.6"/><circle cx="605.3" cy="1191.4" r="1.6"/><circle cx="556.1" cy="1201.4" r="2.3"/><circle cx="717.6" cy="1184.5" r="1.3"/><circle cx="691.7" cy="1185.3" r="2.6"/><circle cx="653.2" cy="1207.7" r="1.1"/><circle cx="685.2" cy="1187.6" r="1.9"/><circle cx="688.3" cy="1191.5" r="2.2"/><circle cx="625.3" cy="1203.2" r="1.4"/><circle cx="687.8" cy="1197.5" r="1.8"/><circle cx="604.6" cy="1207.1" r="1.9"/><circle cx="727.5" cy="1195.8" r="2.0"/><circle cx="640.4" cy="1190.2" r="2.7"/><circle cx="676.0" cy="1202.6" r="2.1"/><circle cx="640.7" cy="1218.3" r="2.7"/><circle cx="573.3" cy="1189.6" r="2.0"/><circle cx="724.9" cy="1188.1" r="1.4"/><circle cx="720.3" cy="1198.6" r="2.6"/><circle cx="611.2" cy="1223.6" r="2.8"/><circle cx="608.5" cy="1206.4" r="1.3"/><circle cx="606.4" cy="1199.9" r="1.5"/><circle cx="603.8" cy="1204.5" r="2.4"/><circle cx="691.4" cy="1181.0" r="1.1"/><circle cx="611.5" cy="1200.2" r="1.6"/><circle cx="641.2" cy="1215.8" r="1.2"/><circle cx="605.2" cy="1198.7" r="2.7"/><circle cx="603.9" cy="1198.2" r="2.2"/><circle cx="598.6" cy="1203.1" r="1.4"/><circle cx="600.5" cy="1182.6" r="1.2"/><circle cx="714.7" cy="1187.3" r="1.3"/><circle cx="633.9" cy="1202.8" r="1.3"/><circle cx="590.7" cy="1204.1" r="2.7"/><circle cx="580.7" cy="1216.5" r="2.9"/><circle cx="726.8" cy="1197.1" r="2.8"/><circle cx="640.6" cy="1197.0" r="1.1"/><circle cx="618.8" cy="1186.7" r="2.1"/><circle cx="629.9" cy="1202.6" r="2.0"/><circle cx="705.4" cy="1204.8" r="2.7"/><circle cx="714.3" cy="1213.8" r="2.6"/><circle cx="588.1" cy="1204.6" r="1.2"/><circle cx="711.0" cy="1198.6" r="1.3"/><circle cx="573.3" cy="1183.6" r="2.8"/><circle cx="661.6" cy="1195.6" r="1.3"/><circle cx="647.5" cy="1204.5" r="2.2"/><circle cx="606.5" cy="1201.6" r="1.7"/><circle cx="600.9" cy="1187.7" r="2.7"/><circle cx="710.5" cy="1186.0" r="2.8"/><circle cx="613.7" cy="1208.2" r="2.4"/><circle cx="613.8" cy="1196.5" r="2.8"/><circle cx="626.4" cy="1206.2" r="2.6"/><circle cx="718.2" cy="1186.7" r="2.2"/><circle cx="556.3" cy="1204.4" r="2.5"/><circle cx="575.5" cy="1189.2" r="2.8"/><circle cx="625.1" cy="1213.9" r="2.7"/><circle cx="643.2" cy="1193.7" r="1.7"/><circle cx="602.3" cy="1201.1" r="1.8"/><circle cx="679.5" cy="1190.7" r="1.4"/><circle cx="589.0" cy="1208.7" r="1.3"/><circle cx="570.8" cy="1203.4" r="1.2"/><circle cx="661.7" cy="1197.5" r="2.4"/><circle cx="711.4" cy="1176.5" r="1.9"/><circle cx="689.7" cy="1210.9" r="1.8"/><circle cx="646.9" cy="1200.1" r="1.4"/><circle cx="697.1" cy="1191.4" r="1.1"/><circle cx="637.0" cy="1203.3" r="1.4"/><circle cx="598.6" cy="1207.8" r="1.9"/><circle cx="662.0" cy="1191.7" r="1.3"/><circle cx="695.9" cy="1209.5" r="1.8"/><circle cx="668.9" cy="1218.7" r="1.1"/><circle cx="612.7" cy="1230.7" r="2.4"/><circle cx="597.5" cy="1228.6" r="2.5"/><circle cx="585.8" cy="1226.2" r="2.1"/><circle cx="572.7" cy="1221.0" r="2.0"/><circle cx="573.0" cy="1233.5" r="2.4"/><circle cx="631.1" cy="1244.6" r="2.1"/><circle cx="636.5" cy="1229.0" r="2.5"/><circle cx="567.8" cy="1222.2" r="1.6"/><circle cx="681.3" cy="1209.9" r="2.2"/><circle cx="596.6" cy="1227.2" r="1.6"/><circle cx="591.2" cy="1220.1" r="2.4"/><circle cx="704.3" cy="1225.8" r="1.7"/><circle cx="590.7" cy="1226.0" r="1.9"/><circle cx="623.2" cy="1211.0" r="1.2"/><circle cx="612.7" cy="1226.3" r="1.5"/><circle cx="594.6" cy="1216.9" r="1.3"/><circle cx="581.4" cy="1227.6" r="1.5"/><circle cx="661.0" cy="1232.0" r="2.0"/><circle cx="584.8" cy="1216.2" r="1.9"/><circle cx="638.3" cy="1216.0" r="1.2"/><circle cx="676.4" cy="1210.7" r="2.0"/><circle cx="607.6" cy="1216.5" r="1.4"/><circle cx="682.1" cy="1216.4" r="2.6"/><circle cx="633.6" cy="1234.2" r="1.6"/><circle cx="659.7" cy="1217.5" r="1.9"/><circle cx="669.5" cy="1217.5" r="2.4"/><circle cx="612.4" cy="1223.4" r="2.4"/><circle cx="599.9" cy="1231.6" r="2.0"/><circle cx="615.6" cy="1213.2" r="1.9"/><circle cx="705.2" cy="1200.9" r="1.5"/><circle cx="555.9" cy="1213.2" r="1.6"/><circle cx="622.0" cy="1220.3" r="2.2"/><circle cx="636.4" cy="1224.9" r="2.0"/><circle cx="604.3" cy="1218.6" r="1.7"/><circle cx="578.9" cy="1229.8" r="1.3"/><circle cx="562.4" cy="1225.3" r="1.9"/><circle cx="591.6" cy="1230.1" r="2.5"/><circle cx="673.8" cy="1214.9" r="1.2"/><circle cx="591.5" cy="1241.2" r="1.3"/><circle cx="684.4" cy="1214.7" r="1.5"/><circle cx="698.9" cy="1222.6" r="1.9"/><circle cx="592.1" cy="1247.0" r="2.3"/><circle cx="666.1" cy="1217.3" r="2.2"/><circle cx="666.9" cy="1227.6" r="2.6"/><circle cx="606.4" cy="1218.7" r="2.1"/><circle cx="590.3" cy="1223.3" r="2.4"/><circle cx="652.5" cy="1218.7" r="1.8"/><circle cx="672.5" cy="1227.4" r="2.0"/><circle cx="619.4" cy="1224.6" r="2.1"/><circle cx="590.3" cy="1214.5" r="2.6"/><circle cx="677.9" cy="1208.6" r="1.2"/><circle cx="638.0" cy="1204.4" r="1.4"/><circle cx="595.4" cy="1222.6" r="1.8"/><circle cx="669.8" cy="1227.3" r="2.1"/><circle cx="647.4" cy="1225.8" r="2.1"/><circle cx="684.6" cy="1215.9" r="1.2"/><circle cx="663.5" cy="1223.5" r="2.6"/><circle cx="645.1" cy="1234.5" r="1.1"/><circle cx="598.1" cy="1219.0" r="1.2"/><circle cx="623.0" cy="1241.4" r="1.3"/><circle cx="661.6" cy="1226.8" r="1.8"/><circle cx="651.4" cy="1226.3" r="1.8"/><circle cx="669.1" cy="1222.3" r="1.7"/><circle cx="569.3" cy="1234.1" r="1.9"/><circle cx="643.8" cy="1223.9" r="1.1"/><circle cx="611.2" cy="1233.2" r="1.5"/><circle cx="657.6" cy="1211.6" r="2.2"/><circle cx="627.4" cy="1225.6" r="1.2"/><circle cx="716.6" cy="1224.8" r="1.4"/><circle cx="723.5" cy="1222.9" r="2.9"/><circle cx="712.9" cy="1231.4" r="4.0"/><circle cx="720.5" cy="1229.4" r="4.0"/><circle cx="723.1" cy="1227.9" r="2.5"/><circle cx="719.5" cy="1234.9" r="2.3"/><circle cx="724.1" cy="1224.9" r="1.1"/><circle cx="709.5" cy="1225.9" r="3.7"/><circle cx="726.7" cy="1224.7" r="2.0"/><circle cx="710.4" cy="1232.6" r="2.0"/><circle cx="724.1" cy="1228.1" r="1.4"/><circle cx="718.0" cy="1227.7" r="3.9"/><circle cx="717.6" cy="1229.5" r="3.2"/><circle cx="703.7" cy="1234.6" r="2.6"/><circle cx="713.6" cy="1229.3" r="3.0"/><circle cx="697.8" cy="1238.3" r="1.1"/><circle cx="758.2" cy="1245.2" r="3.7"/><circle cx="743.0" cy="1252.0" r="2.7"/><circle cx="745.9" cy="1250.7" r="2.8"/><circle cx="754.8" cy="1245.4" r="3.2"/><circle cx="750.8" cy="1249.7" r="1.8"/><circle cx="746.1" cy="1251.7" r="3.2"/><circle cx="755.8" cy="1243.7" r="1.7"/><circle cx="749.3" cy="1248.1" r="1.8"/><circle cx="742.8" cy="1248.2" r="1.8"/><circle cx="751.4" cy="1247.5" r="1.6"/><circle cx="792.1" cy="1245.9" r="3.2"/><circle cx="791.6" cy="1245.3" r="2.1"/><circle cx="801.3" cy="1243.9" r="2.9"/><circle cx="791.7" cy="1248.6" r="1.8"/><circle cx="795.9" cy="1246.2" r="1.6"/><circle cx="790.2" cy="1244.6" r="2.9"/><circle cx="800.8" cy="1245.4" r="2.3"/><circle cx="702.7" cy="1249.4" r="1.6"/><circle cx="702.9" cy="1247.4" r="3.3"/><circle cx="708.2" cy="1242.6" r="2.8"/><circle cx="705.3" cy="1267.1" r="3.3"/><circle cx="701.6" cy="1240.3" r="1.8"/><circle cx="705.2" cy="1260.2" r="1.5"/><circle cx="706.4" cy="1243.6" r="1.9"/><circle cx="706.0" cy="1250.4" r="1.1"/><circle cx="702.3" cy="1265.5" r="3.5"/><circle cx="708.7" cy="1249.2" r="1.7"/><circle cx="706.7" cy="1245.0" r="3.3"/><circle cx="704.5" cy="1249.6" r="2.4"/><circle cx="702.4" cy="1255.4" r="1.8"/><circle cx="706.5" cy="1259.6" r="3.1"/><circle cx="582.4" cy="1273.3" r="1.7"/><circle cx="586.4" cy="1280.7" r="3.7"/><circle cx="584.5" cy="1269.4" r="1.4"/><circle cx="577.5" cy="1272.6" r="3.7"/><circle cx="578.6" cy="1275.3" r="3.8"/><circle cx="582.5" cy="1280.6" r="2.0"/><circle cx="577.8" cy="1270.4" r="3.7"/><circle cx="575.3" cy="1274.2" r="3.0"/><circle cx="575.8" cy="1270.3" r="1.5"/><circle cx="604.6" cy="1320.1" r="2.0"/><circle cx="610.3" cy="1315.1" r="1.9"/><circle cx="599.9" cy="1320.1" r="1.9"/><circle cx="603.2" cy="1316.2" r="3.1"/><circle cx="603.8" cy="1319.1" r="3.3"/><circle cx="601.2" cy="1319.9" r="3.3"/><circle cx="604.4" cy="1318.3" r="1.1"/><circle cx="599.1" cy="1319.4" r="2.3"/><circle cx="602.9" cy="1316.9" r="3.7"/><circle cx="613.0" cy="1312.6" r="3.2"/><circle cx="610.7" cy="1316.6" r="3.3"/><circle cx="597.9" cy="1319.1" r="1.2"/><circle cx="564.6" cy="1340.0" r="3.3"/><circle cx="559.7" cy="1341.0" r="3.4"/><circle cx="572.0" cy="1337.9" r="3.6"/><circle cx="564.4" cy="1337.3" r="3.6"/><circle cx="567.4" cy="1339.4" r="3.5"/><circle cx="564.9" cy="1346.7" r="1.2"/><circle cx="567.5" cy="1347.2" r="1.2"/><circle cx="556.6" cy="1337.1" r="1.7"/><circle cx="564.1" cy="1328.5" r="2.9"/><circle cx="566.6" cy="1328.8" r="1.1"/><circle cx="576.4" cy="1316.2" r="2.6"/><circle cx="574.7" cy="1318.2" r="1.3"/><circle cx="578.2" cy="1287.5" r="1.9"/><circle cx="569.4" cy="1293.4" r="2.2"/><circle cx="578.1" cy="1273.6" r="1.5"/><circle cx="572.6" cy="1308.4" r="2.5"/><circle cx="562.8" cy="1305.3" r="1.9"/><circle cx="569.2" cy="1288.4" r="1.6"/><circle cx="573.8" cy="1275.9" r="1.6"/><circle cx="592.5" cy="1314.3" r="2.2"/><circle cx="563.5" cy="1292.0" r="2.6"/><circle cx="565.7" cy="1304.1" r="1.3"/><circle cx="777.0" cy="1170.2" r="2.6"/><circle cx="812.8" cy="1177.3" r="2.0"/><circle cx="809.8" cy="1174.4" r="1.9"/><circle cx="851.6" cy="1188.9" r="1.6"/><circle cx="856.8" cy="1181.2" r="1.8"/><circle cx="832.7" cy="1180.8" r="1.3"/><circle cx="810.6" cy="1173.1" r="1.4"/><circle cx="769.4" cy="1174.6" r="2.0"/><circle cx="767.2" cy="1164.4" r="2.1"/><circle cx="727.7" cy="1183.0" r="1.2"/><circle cx="839.2" cy="1182.1" r="2.1"/><circle cx="800.1" cy="1173.9" r="1.9"/><circle cx="789.5" cy="1177.8" r="1.7"/><circle cx="806.9" cy="1173.5" r="1.2"/><circle cx="767.7" cy="1185.0" r="2.0"/><circle cx="764.8" cy="1166.4" r="1.2"/><circle cx="839.6" cy="1200.1" r="1.3"/><circle cx="773.6" cy="1189.2" r="2.4"/><circle cx="817.6" cy="1179.5" r="2.2"/><circle cx="754.6" cy="1172.6" r="2.5"/><circle cx="815.2" cy="1162.5" r="1.5"/><circle cx="779.4" cy="1178.0" r="2.3"/><circle cx="747.6" cy="1171.4" r="2.5"/><circle cx="832.3" cy="1163.8" r="1.2"/><circle cx="765.8" cy="1181.0" r="2.1"/><circle cx="852.7" cy="1162.1" r="2.2"/><circle cx="771.5" cy="1173.5" r="2.4"/><circle cx="779.0" cy="1181.5" r="1.5"/><circle cx="864.3" cy="1178.2" r="1.8"/><circle cx="754.1" cy="1173.4" r="2.6"/><circle cx="842.3" cy="1170.9" r="2.5"/><circle cx="763.5" cy="1165.5" r="2.6"/><circle cx="833.8" cy="1179.3" r="2.1"/><circle cx="763.8" cy="1167.4" r="2.4"/><circle cx="778.1" cy="1188.4" r="2.1"/><circle cx="779.1" cy="1170.9" r="2.1"/><circle cx="800.4" cy="1191.6" r="2.5"/><circle cx="836.6" cy="1180.8" r="2.2"/><circle cx="843.2" cy="1173.3" r="2.2"/><circle cx="799.1" cy="1179.3" r="1.8"/><circle cx="822.8" cy="1154.6" r="1.3"/><circle cx="821.7" cy="1169.9" r="2.0"/><circle cx="862.3" cy="1180.2" r="2.1"/><circle cx="810.2" cy="1182.6" r="1.3"/><circle cx="805.1" cy="1188.9" r="2.3"/><circle cx="799.0" cy="1165.3" r="1.9"/><circle cx="764.3" cy="1168.1" r="2.3"/><circle cx="746.7" cy="1177.6" r="2.0"/><circle cx="807.6" cy="1174.8" r="2.5"/><circle cx="814.2" cy="1186.0" r="1.6"/><circle cx="853.8" cy="1180.1" r="2.6"/><circle cx="744.4" cy="1190.8" r="1.3"/><circle cx="814.3" cy="1165.7" r="1.6"/><circle cx="841.5" cy="1168.1" r="2.1"/><circle cx="760.3" cy="1186.6" r="2.6"/><circle cx="736.9" cy="1184.7" r="2.3"/><circle cx="767.9" cy="1187.1" r="1.4"/><circle cx="852.6" cy="1183.8" r="2.4"/><circle cx="764.6" cy="1169.5" r="1.4"/><circle cx="738.6" cy="1170.6" r="1.6"/><circle cx="840.6" cy="1192.7" r="2.5"/><circle cx="844.2" cy="1194.4" r="3.8"/><circle cx="837.5" cy="1196.4" r="1.8"/><circle cx="836.9" cy="1194.5" r="3.8"/><circle cx="849.3" cy="1192.5" r="3.0"/><circle cx="840.6" cy="1191.8" r="1.3"/><circle cx="844.7" cy="1196.7" r="1.2"/><circle cx="847.5" cy="1194.7" r="3.8"/><circle cx="843.0" cy="1188.2" r="2.8"/><circle cx="880.4" cy="1179.8" r="2.4"/><circle cx="875.2" cy="1182.2" r="1.3"/><circle cx="876.0" cy="1184.2" r="1.4"/><circle cx="881.2" cy="1181.5" r="2.9"/><circle cx="878.2" cy="1181.1" r="3.2"/><circle cx="879.0" cy="1181.6" r="1.4"/><circle cx="857.3" cy="1213.4" r="3.2"/><circle cx="852.1" cy="1220.8" r="1.4"/><circle cx="857.0" cy="1219.9" r="3.1"/><circle cx="864.2" cy="1218.0" r="1.2"/><circle cx="858.7" cy="1216.9" r="3.3"/><circle cx="858.6" cy="1212.5" r="2.3"/><circle cx="854.5" cy="1216.8" r="3.3"/><circle cx="901.4" cy="1212.6" r="2.5"/><circle cx="903.8" cy="1211.8" r="1.9"/><circle cx="897.8" cy="1210.6" r="1.2"/><circle cx="893.8" cy="1213.1" r="3.5"/><circle cx="889.7" cy="1207.1" r="3.1"/><circle cx="894.1" cy="1208.1" r="1.7"/><circle cx="839.8" cy="1240.2" r="1.4"/><circle cx="829.2" cy="1230.6" r="2.0"/><circle cx="811.1" cy="1233.0" r="1.3"/><circle cx="829.2" cy="1242.6" r="1.4"/><circle cx="812.8" cy="1223.6" r="1.7"/><circle cx="848.8" cy="1233.4" r="2.6"/><circle cx="806.9" cy="1233.6" r="2.2"/><circle cx="835.7" cy="1240.7" r="2.0"/><circle cx="810.0" cy="1236.7" r="2.5"/><circle cx="837.1" cy="1226.2" r="1.3"/><circle cx="973.3" cy="1160.0" r="3.6"/><circle cx="1003.4" cy="1171.0" r="3.7"/><circle cx="952.0" cy="1176.2" r="2.7"/><circle cx="959.0" cy="1173.2" r="2.6"/><circle cx="1021.9" cy="1171.0" r="3.2"/><circle cx="968.9" cy="1179.6" r="2.7"/><circle cx="983.2" cy="1155.5" r="1.3"/><circle cx="1025.3" cy="1170.0" r="1.8"/><circle cx="971.8" cy="1170.0" r="1.7"/><circle cx="1010.2" cy="1161.9" r="3.4"/><circle cx="992.4" cy="1173.2" r="2.1"/><circle cx="937.8" cy="1167.9" r="1.9"/><circle cx="982.3" cy="1160.6" r="1.9"/><circle cx="987.9" cy="1167.5" r="2.7"/><circle cx="988.3" cy="1172.1" r="2.4"/><circle cx="944.1" cy="1166.8" r="2.1"/><circle cx="1032.7" cy="1167.1" r="1.5"/><circle cx="1061.1" cy="1174.3" r="2.2"/><circle cx="999.7" cy="1173.4" r="2.9"/><circle cx="997.6" cy="1176.7" r="2.9"/><circle cx="958.4" cy="1176.8" r="3.6"/><circle cx="996.7" cy="1161.1" r="2.8"/><circle cx="968.9" cy="1178.5" r="2.8"/><circle cx="955.5" cy="1164.3" r="3.1"/><circle cx="997.8" cy="1181.3" r="3.7"/><circle cx="1007.2" cy="1172.3" r="3.7"/><circle cx="1032.7" cy="1178.8" r="2.6"/><circle cx="1023.1" cy="1176.1" r="1.1"/><circle cx="1000.1" cy="1165.9" r="3.5"/><circle cx="998.1" cy="1168.4" r="2.2"/><circle cx="1013.5" cy="1181.1" r="1.4"/><circle cx="998.2" cy="1172.2" r="3.4"/><circle cx="985.2" cy="1176.2" r="2.3"/><circle cx="955.8" cy="1166.2" r="3.6"/><circle cx="966.3" cy="1175.8" r="3.4"/><circle cx="985.5" cy="1174.4" r="3.3"/><circle cx="958.9" cy="1182.2" r="3.3"/><circle cx="966.0" cy="1173.6" r="1.4"/><circle cx="1008.0" cy="1165.7" r="2.0"/><circle cx="994.3" cy="1175.0" r="3.4"/><circle cx="1010.6" cy="1177.8" r="2.7"/><circle cx="949.9" cy="1167.2" r="2.1"/><circle cx="1004.3" cy="1183.1" r="3.5"/><circle cx="964.1" cy="1166.9" r="3.5"/><circle cx="990.3" cy="1174.4" r="2.8"/><circle cx="1004.5" cy="1163.0" r="1.4"/><circle cx="1002.3" cy="1170.3" r="2.0"/><circle cx="1038.0" cy="1171.7" r="3.1"/><circle cx="1036.7" cy="1178.9" r="2.2"/><circle cx="1037.7" cy="1173.5" r="3.6"/><circle cx="1016.4" cy="1173.8" r="3.5"/><circle cx="972.1" cy="1174.5" r="3.2"/><circle cx="885.7" cy="1174.0" r="3.4"/><circle cx="1015.0" cy="1163.0" r="1.6"/><circle cx="970.2" cy="1160.8" r="2.4"/><circle cx="961.7" cy="1166.4" r="1.6"/><circle cx="1009.6" cy="1167.7" r="1.4"/><circle cx="1020.5" cy="1170.5" r="2.9"/><circle cx="975.8" cy="1172.9" r="2.0"/><circle cx="997.2" cy="1165.8" r="3.5"/><circle cx="962.9" cy="1183.0" r="1.6"/><circle cx="970.2" cy="1170.5" r="1.5"/><circle cx="956.8" cy="1167.6" r="2.5"/><circle cx="990.1" cy="1176.2" r="1.9"/><circle cx="995.0" cy="1168.8" r="2.2"/><circle cx="1009.2" cy="1164.0" r="1.8"/><circle cx="999.4" cy="1170.7" r="1.5"/><circle cx="1017.0" cy="1172.4" r="3.4"/><circle cx="979.8" cy="1175.4" r="3.2"/><circle cx="989.9" cy="1170.9" r="2.9"/><circle cx="1016.0" cy="1176.1" r="1.5"/><circle cx="938.5" cy="1159.5" r="2.3"/><circle cx="978.4" cy="1179.4" r="2.9"/><circle cx="1005.7" cy="1172.9" r="2.1"/><circle cx="961.1" cy="1168.6" r="2.8"/><circle cx="982.0" cy="1185.0" r="2.0"/><circle cx="987.0" cy="1172.9" r="1.4"/><circle cx="997.6" cy="1184.8" r="2.2"/><circle cx="913.6" cy="1172.6" r="3.7"/><circle cx="987.4" cy="1165.0" r="2.0"/><circle cx="961.9" cy="1168.7" r="2.0"/><circle cx="989.9" cy="1175.3" r="3.1"/><circle cx="959.3" cy="1164.1" r="2.3"/><circle cx="950.9" cy="1161.3" r="1.2"/><circle cx="1003.8" cy="1164.4" r="2.0"/><circle cx="1033.8" cy="1169.4" r="2.0"/><circle cx="1016.7" cy="1172.7" r="2.3"/><circle cx="975.3" cy="1171.8" r="2.6"/><circle cx="982.9" cy="1181.8" r="2.5"/><circle cx="969.5" cy="1181.9" r="2.3"/><circle cx="1005.8" cy="1173.9" r="1.2"/><circle cx="925.4" cy="1173.6" r="3.6"/><circle cx="975.1" cy="1166.2" r="1.7"/><circle cx="993.1" cy="1176.9" r="2.8"/><circle cx="1019.3" cy="1172.9" r="2.2"/><circle cx="955.9" cy="1157.4" r="2.1"/><circle cx="966.1" cy="1165.7" r="2.3"/><circle cx="978.6" cy="1168.0" r="2.5"/><circle cx="965.9" cy="1169.0" r="1.8"/><circle cx="997.8" cy="1164.8" r="1.6"/><circle cx="976.7" cy="1177.9" r="2.2"/><circle cx="969.1" cy="1174.2" r="1.7"/><circle cx="944.5" cy="1167.7" r="1.3"/><circle cx="963.5" cy="1165.7" r="3.7"/><circle cx="999.8" cy="1169.3" r="2.9"/><circle cx="976.7" cy="1172.4" r="3.4"/><circle cx="1029.5" cy="1165.5" r="2.8"/><circle cx="1022.9" cy="1170.7" r="2.9"/><circle cx="951.5" cy="1157.0" r="3.4"/><circle cx="977.9" cy="1174.2" r="2.5"/><circle cx="1027.3" cy="1181.5" r="3.0"/><circle cx="1025.4" cy="1181.3" r="1.5"/><circle cx="1026.2" cy="1181.9" r="2.5"/><circle cx="1029.6" cy="1172.3" r="2.1"/><circle cx="1029.8" cy="1183.4" r="2.0"/><circle cx="1031.0" cy="1172.1" r="2.1"/><circle cx="1029.0" cy="1170.8" r="1.7"/><circle cx="1023.8" cy="1179.6" r="3.0"/><circle cx="1030.0" cy="1171.6" r="2.7"/><circle cx="1030.2" cy="1171.1" r="3.0"/><circle cx="1029.0" cy="1170.1" r="2.7"/><circle cx="1030.9" cy="1171.3" r="2.9"/><circle cx="1025.6" cy="1182.5" r="3.2"/><circle cx="1028.9" cy="1173.0" r="3.2"/><circle cx="1024.7" cy="1164.7" r="1.7"/><circle cx="1024.0" cy="1182.6" r="2.2"/><circle cx="1032.2" cy="1176.8" r="2.6"/><circle cx="1029.9" cy="1170.8" r="1.7"/><circle cx="1018.0" cy="1172.9" r="2.7"/><circle cx="1021.5" cy="1170.6" r="3.0"/><circle cx="1019.3" cy="1174.0" r="2.8"/><circle cx="1020.3" cy="1177.7" r="1.8"/><circle cx="1020.1" cy="1168.2" r="1.7"/><circle cx="1029.1" cy="1170.8" r="2.2"/><circle cx="1040.0" cy="1188.8" r="1.9"/><circle cx="1033.1" cy="1190.7" r="3.1"/><circle cx="1046.3" cy="1188.0" r="2.1"/><circle cx="1038.0" cy="1190.3" r="2.0"/><circle cx="1034.4" cy="1193.0" r="2.5"/><circle cx="1031.3" cy="1192.8" r="2.2"/><circle cx="1040.7" cy="1187.2" r="3.6"/><circle cx="1037.3" cy="1187.9" r="2.7"/><circle cx="1032.5" cy="1193.2" r="3.8"/><circle cx="1039.7" cy="1188.3" r="1.5"/><circle cx="1040.6" cy="1189.0" r="3.0"/><circle cx="1042.8" cy="1186.6" r="1.8"/><circle cx="1044.5" cy="1187.0" r="2.3"/><circle cx="1042.5" cy="1186.9" r="3.4"/><circle cx="931.0" cy="1222.8" r="1.1"/><circle cx="932.4" cy="1214.4" r="1.2"/><circle cx="938.9" cy="1222.3" r="1.8"/><circle cx="933.6" cy="1218.4" r="3.0"/><circle cx="928.7" cy="1219.8" r="3.9"/><circle cx="927.4" cy="1222.8" r="3.3"/><circle cx="930.8" cy="1222.4" r="4.2"/><circle cx="934.1" cy="1216.0" r="2.7"/><circle cx="930.3" cy="1218.8" r="1.3"/><circle cx="921.6" cy="1218.6" r="1.4"/><circle cx="939.8" cy="1220.5" r="4.4"/><circle cx="934.6" cy="1217.8" r="1.8"/><circle cx="946.8" cy="1213.8" r="3.8"/><circle cx="927.5" cy="1218.5" r="3.7"/><circle cx="939.0" cy="1214.2" r="2.1"/><circle cx="940.9" cy="1212.2" r="3.0"/><circle cx="937.9" cy="1221.2" r="3.2"/><circle cx="922.0" cy="1225.1" r="3.2"/><circle cx="942.3" cy="1199.8" r="2.4"/><circle cx="940.8" cy="1193.4" r="3.3"/><circle cx="942.6" cy="1206.7" r="3.5"/><circle cx="944.3" cy="1202.8" r="1.5"/><circle cx="942.6" cy="1198.5" r="2.8"/><circle cx="946.4" cy="1195.6" r="1.2"/><circle cx="940.3" cy="1195.4" r="2.8"/><circle cx="947.8" cy="1196.4" r="2.6"/><circle cx="984.5" cy="1192.2" r="1.4"/><circle cx="980.5" cy="1201.8" r="2.0"/><circle cx="976.0" cy="1196.1" r="2.9"/><circle cx="982.9" cy="1191.7" r="2.4"/><circle cx="983.8" cy="1195.9" r="1.5"/><circle cx="978.4" cy="1194.2" r="1.3"/><circle cx="954.2" cy="1193.4" r="1.1"/><circle cx="945.8" cy="1197.4" r="1.6"/><circle cx="937.2" cy="1205.0" r="2.2"/><circle cx="912.9" cy="1180.6" r="2.4"/><circle cx="953.7" cy="1196.4" r="2.4"/><circle cx="938.9" cy="1207.2" r="1.5"/><circle cx="950.5" cy="1209.5" r="1.5"/><circle cx="946.5" cy="1189.1" r="1.8"/><circle cx="948.1" cy="1197.0" r="1.9"/><circle cx="936.0" cy="1215.7" r="1.8"/><circle cx="933.3" cy="1190.0" r="1.4"/><circle cx="935.7" cy="1187.6" r="1.7"/><circle cx="927.9" cy="1192.9" r="2.4"/><circle cx="937.4" cy="1218.5" r="2.4"/><circle cx="908.3" cy="1178.1" r="2.4"/><circle cx="936.9" cy="1187.9" r="2.3"/><circle cx="930.3" cy="1202.3" r="1.8"/><circle cx="926.4" cy="1186.9" r="1.3"/><circle cx="930.4" cy="1184.1" r="2.3"/><circle cx="943.6" cy="1199.3" r="1.7"/><circle cx="943.5" cy="1182.7" r="1.8"/><circle cx="945.8" cy="1183.2" r="1.1"/><circle cx="934.2" cy="1182.0" r="1.9"/><circle cx="909.2" cy="1186.4" r="1.2"/><circle cx="930.3" cy="1182.5" r="2.1"/><circle cx="939.6" cy="1214.3" r="2.1"/><circle cx="939.9" cy="1184.7" r="2.1"/><circle cx="946.8" cy="1202.0" r="2.0"/><circle cx="940.2" cy="1182.6" r="1.8"/><circle cx="941.3" cy="1186.0" r="2.0"/><circle cx="1583.6" cy="1163.8" r="2.9"/><circle cx="1635.0" cy="1170.7" r="3.5"/><circle cx="1608.1" cy="1167.8" r="3.4"/><circle cx="1592.6" cy="1166.8" r="1.7"/><circle cx="1596.2" cy="1168.1" r="2.1"/><circle cx="1630.9" cy="1168.4" r="2.1"/><circle cx="1622.0" cy="1166.6" r="2.2"/><circle cx="1590.6" cy="1162.3" r="2.0"/><circle cx="1624.1" cy="1170.7" r="3.5"/><circle cx="1643.2" cy="1173.6" r="3.2"/><circle cx="1586.3" cy="1163.7" r="1.7"/><circle cx="1579.1" cy="1166.7" r="2.6"/><circle cx="1630.8" cy="1170.2" r="3.3"/><circle cx="1635.3" cy="1169.9" r="1.6"/><circle cx="1605.5" cy="1168.5" r="2.9"/><circle cx="1619.2" cy="1170.2" r="2.4"/><circle cx="1622.9" cy="1167.5" r="3.5"/><circle cx="1624.4" cy="1171.1" r="2.9"/><circle cx="1601.0" cy="1168.0" r="3.0"/><circle cx="1626.0" cy="1172.2" r="1.3"/><circle cx="1613.9" cy="1169.8" r="3.4"/><circle cx="1582.5" cy="1163.3" r="3.6"/><circle cx="1642.3" cy="1173.4" r="1.5"/><circle cx="1637.4" cy="1166.6" r="3.2"/><circle cx="1601.6" cy="1165.0" r="2.0"/><circle cx="1605.1" cy="1165.8" r="2.6"/><circle cx="1615.4" cy="1166.6" r="2.2"/><circle cx="1611.2" cy="1169.2" r="1.4"/><circle cx="1591.3" cy="1165.2" r="3.3"/><circle cx="1614.2" cy="1165.7" r="3.3"/><circle cx="1597.4" cy="1168.2" r="1.7"/><circle cx="1618.3" cy="1169.7" r="3.0"/><circle cx="1596.3" cy="1168.0" r="1.6"/><circle cx="1633.7" cy="1168.8" r="2.5"/><circle cx="1665.9" cy="1179.0" r="2.4"/><circle cx="1657.3" cy="1177.1" r="1.8"/><circle cx="1673.1" cy="1178.0" r="1.4"/><circle cx="1654.6" cy="1173.2" r="1.4"/><circle cx="1654.0" cy="1175.2" r="2.2"/><circle cx="1675.4" cy="1182.7" r="1.9"/><circle cx="1644.0" cy="1174.7" r="1.7"/><circle cx="1677.9" cy="1188.5" r="2.0"/><circle cx="1671.1" cy="1179.4" r="1.1"/><circle cx="1664.3" cy="1179.1" r="1.5"/><circle cx="1719.0" cy="1182.3" r="2.5"/><circle cx="1722.3" cy="1186.6" r="3.8"/><circle cx="1717.7" cy="1157.0" r="1.4"/><circle cx="1712.3" cy="1168.5" r="3.8"/><circle cx="1695.2" cy="1164.5" r="3.3"/><circle cx="1717.7" cy="1179.2" r="3.4"/><circle cx="1723.8" cy="1172.1" r="1.2"/><circle cx="1735.9" cy="1188.6" r="3.1"/><circle cx="1698.4" cy="1174.5" r="3.4"/><circle cx="1735.1" cy="1186.5" r="3.9"/><circle cx="1737.5" cy="1175.1" r="2.4"/><circle cx="1711.3" cy="1170.5" r="3.4"/><circle cx="1711.2" cy="1166.0" r="1.2"/><circle cx="1717.3" cy="1183.5" r="3.7"/><circle cx="1689.6" cy="1164.0" r="1.6"/><circle cx="1712.4" cy="1179.4" r="1.9"/><circle cx="1721.4" cy="1171.1" r="2.0"/><circle cx="1712.7" cy="1165.9" r="3.6"/><circle cx="1713.2" cy="1159.8" r="2.3"/><circle cx="1702.1" cy="1173.3" r="3.9"/><circle cx="1731.4" cy="1180.4" r="2.5"/><circle cx="1733.9" cy="1192.2" r="2.8"/><circle cx="1707.6" cy="1173.5" r="2.4"/><circle cx="1715.1" cy="1168.9" r="1.9"/><circle cx="1700.9" cy="1166.7" r="1.1"/><circle cx="1724.7" cy="1183.3" r="3.1"/><circle cx="1713.0" cy="1174.9" r="1.8"/><circle cx="1716.7" cy="1188.7" r="1.8"/><circle cx="1725.4" cy="1179.9" r="1.6"/><circle cx="1728.7" cy="1183.6" r="2.6"/><circle cx="1723.4" cy="1168.0" r="2.7"/><circle cx="1739.1" cy="1194.1" r="1.8"/><circle cx="1713.7" cy="1179.2" r="2.8"/><circle cx="1711.4" cy="1167.3" r="1.8"/><circle cx="1731.1" cy="1184.6" r="3.1"/><circle cx="1720.0" cy="1181.8" r="3.2"/><circle cx="1715.1" cy="1170.9" r="3.9"/><circle cx="1716.2" cy="1163.3" r="2.0"/><circle cx="1728.7" cy="1180.7" r="2.9"/><circle cx="1738.9" cy="1186.4" r="1.6"/><circle cx="1719.1" cy="1181.2" r="1.4"/><circle cx="1729.3" cy="1176.2" r="2.5"/><circle cx="1702.3" cy="1174.9" r="2.4"/><circle cx="1716.5" cy="1167.6" r="3.6"/><circle cx="1734.6" cy="1172.5" r="3.2"/><circle cx="1717.9" cy="1184.0" r="3.5"/><circle cx="1701.6" cy="1175.9" r="1.7"/><circle cx="1722.7" cy="1172.8" r="2.1"/><circle cx="1718.5" cy="1173.8" r="1.1"/><circle cx="1701.5" cy="1171.6" r="1.4"/><circle cx="1695.0" cy="1172.6" r="3.6"/><circle cx="1737.1" cy="1180.4" r="1.3"/><circle cx="1703.4" cy="1175.1" r="1.2"/><circle cx="1719.6" cy="1171.2" r="3.3"/><circle cx="1713.0" cy="1168.3" r="2.1"/><circle cx="1706.6" cy="1172.0" r="1.1"/><circle cx="1706.1" cy="1172.8" r="1.8"/><circle cx="1725.0" cy="1167.7" r="2.3"/><circle cx="1734.7" cy="1187.9" r="1.9"/><circle cx="1728.3" cy="1190.1" r="3.7"/><circle cx="1707.2" cy="1194.8" r="2.1"/><circle cx="1710.5" cy="1198.0" r="2.9"/><circle cx="1711.7" cy="1209.8" r="1.5"/><circle cx="1709.1" cy="1208.1" r="2.2"/><circle cx="1708.1" cy="1190.9" r="1.2"/><circle cx="1709.7" cy="1193.2" r="3.0"/><circle cx="1711.9" cy="1198.0" r="1.6"/><circle cx="1711.4" cy="1198.4" r="2.1"/><circle cx="1711.7" cy="1207.2" r="2.1"/><circle cx="1710.1" cy="1201.4" r="2.0"/><circle cx="1712.6" cy="1201.7" r="3.0"/><circle cx="1709.3" cy="1203.1" r="2.0"/><circle cx="1730.7" cy="1210.6" r="1.8"/><circle cx="1733.2" cy="1201.8" r="1.8"/><circle cx="1729.1" cy="1212.0" r="1.2"/><circle cx="1724.0" cy="1226.1" r="2.1"/><circle cx="1721.5" cy="1227.5" r="1.7"/><circle cx="1733.1" cy="1209.7" r="2.1"/><circle cx="1725.6" cy="1220.8" r="2.9"/><circle cx="1734.2" cy="1202.1" r="2.5"/><circle cx="1719.5" cy="1225.9" r="1.9"/><circle cx="1732.1" cy="1208.2" r="1.2"/><circle cx="1732.7" cy="1199.6" r="1.2"/><circle cx="1723.3" cy="1224.0" r="1.8"/><circle cx="1731.1" cy="1202.3" r="2.9"/><circle cx="1728.5" cy="1215.0" r="1.6"/><circle cx="1731.6" cy="1206.7" r="2.9"/><circle cx="1725.5" cy="1221.7" r="1.2"/><circle cx="1793.0" cy="1203.7" r="2.1"/><circle cx="1771.6" cy="1187.2" r="1.3"/><circle cx="1749.5" cy="1180.1" r="1.3"/><circle cx="1780.8" cy="1195.0" r="3.0"/><circle cx="1753.0" cy="1185.7" r="3.2"/><circle cx="1801.9" cy="1208.9" r="2.5"/><circle cx="1751.6" cy="1181.6" r="3.5"/><circle cx="1744.0" cy="1179.7" r="2.6"/><circle cx="1781.2" cy="1193.6" r="2.9"/><circle cx="1765.3" cy="1185.2" r="2.8"/><circle cx="1750.7" cy="1180.5" r="1.6"/><circle cx="1770.3" cy="1186.8" r="2.2"/><circle cx="1782.1" cy="1196.0" r="2.1"/><circle cx="1788.5" cy="1198.3" r="2.7"/><circle cx="1795.2" cy="1204.9" r="1.2"/><circle cx="1802.9" cy="1212.8" r="2.9"/><circle cx="1779.3" cy="1192.9" r="2.7"/><circle cx="1766.1" cy="1188.4" r="2.9"/><circle cx="1796.6" cy="1208.0" r="1.7"/><circle cx="1791.3" cy="1201.7" r="3.1"/><circle cx="1773.7" cy="1189.9" r="2.3"/><circle cx="1797.9" cy="1203.7" r="3.2"/><circle cx="1768.2" cy="1185.5" r="2.7"/><circle cx="1755.0" cy="1182.8" r="3.2"/><circle cx="1749.6" cy="1180.9" r="3.1"/><circle cx="1795.9" cy="1207.3" r="3.5"/><circle cx="1763.0" cy="1184.1" r="2.2"/><circle cx="1775.0" cy="1191.8" r="2.5"/><circle cx="1751.2" cy="1181.9" r="3.2"/><circle cx="1751.0" cy="1184.1" r="1.9"/><circle cx="1967.2" cy="1230.5" r="2.0"/><circle cx="1937.2" cy="1221.6" r="1.8"/><circle cx="1907.9" cy="1207.5" r="1.9"/><circle cx="1950.9" cy="1227.3" r="1.6"/><circle cx="1973.9" cy="1235.1" r="2.1"/><circle cx="1934.5" cy="1219.1" r="2.0"/><circle cx="1937.3" cy="1221.3" r="2.9"/><circle cx="1818.1" cy="1163.6" r="2.9"/><circle cx="1871.8" cy="1193.9" r="3.1"/><circle cx="1824.0" cy="1168.6" r="2.5"/><circle cx="1835.8" cy="1176.8" r="1.2"/><circle cx="1874.7" cy="1193.2" r="1.1"/><circle cx="1841.1" cy="1177.6" r="2.4"/><circle cx="1875.0" cy="1192.3" r="1.9"/><circle cx="1842.5" cy="1180.5" r="2.7"/><circle cx="1930.0" cy="1219.2" r="2.0"/><circle cx="1910.4" cy="1207.0" r="2.1"/><circle cx="1949.9" cy="1224.0" r="2.0"/><circle cx="1941.9" cy="1224.2" r="2.3"/><circle cx="1828.6" cy="1175.7" r="1.6"/><circle cx="1953.2" cy="1226.3" r="2.2"/><circle cx="1872.1" cy="1188.7" r="1.8"/><circle cx="1841.4" cy="1174.8" r="2.2"/><circle cx="1829.0" cy="1168.8" r="2.6"/><circle cx="1892.9" cy="1203.1" r="1.9"/><circle cx="1884.2" cy="1197.1" r="1.8"/><circle cx="1850.8" cy="1180.0" r="1.5"/><circle cx="1944.9" cy="1222.9" r="1.4"/><circle cx="1957.3" cy="1228.9" r="1.3"/><circle cx="1952.9" cy="1226.8" r="1.7"/><circle cx="1901.6" cy="1206.0" r="3.0"/><circle cx="1932.3" cy="1220.5" r="1.7"/><circle cx="1819.3" cy="1164.2" r="2.6"/><circle cx="1956.4" cy="1229.7" r="1.9"/><circle cx="1897.0" cy="1203.1" r="1.8"/><circle cx="1835.9" cy="1171.4" r="2.2"/><circle cx="1828.3" cy="1168.4" r="3.0"/><circle cx="1924.4" cy="1218.4" r="2.4"/><circle cx="1875.3" cy="1191.9" r="1.4"/><circle cx="1822.7" cy="1166.3" r="1.4"/><circle cx="1824.7" cy="1166.2" r="3.0"/><circle cx="1967.1" cy="1230.8" r="3.2"/><circle cx="1922.4" cy="1210.4" r="1.8"/><circle cx="1879.5" cy="1194.1" r="1.3"/><circle cx="1821.5" cy="1166.2" r="3.2"/><circle cx="1816.4" cy="1165.7" r="2.4"/><circle cx="1954.1" cy="1225.1" r="3.2"/><circle cx="1959.8" cy="1228.8" r="2.3"/><circle cx="1852.2" cy="1185.4" r="2.1"/><circle cx="1884.9" cy="1198.5" r="1.8"/><circle cx="1894.7" cy="1204.8" r="2.8"/><circle cx="1970.9" cy="1232.4" r="1.9"/><circle cx="1892.4" cy="1206.3" r="1.4"/><circle cx="1853.2" cy="1182.2" r="1.2"/><circle cx="1875.3" cy="1194.9" r="1.6"/><circle cx="1873.5" cy="1194.0" r="2.2"/><circle cx="1855.0" cy="1187.6" r="3.1"/><circle cx="1878.3" cy="1195.2" r="1.1"/><circle cx="1902.3" cy="1205.1" r="2.1"/><circle cx="1951.7" cy="1225.5" r="1.7"/><circle cx="1944.2" cy="1219.5" r="2.8"/><circle cx="1829.5" cy="1169.5" r="1.8"/><circle cx="1847.2" cy="1182.0" r="2.0"/><circle cx="1977.3" cy="1239.4" r="1.4"/><circle cx="1929.8" cy="1219.2" r="2.2"/><circle cx="1838.3" cy="1177.7" r="1.5"/><circle cx="1957.4" cy="1226.4" r="2.6"/><circle cx="1843.3" cy="1178.8" r="3.0"/><circle cx="1898.9" cy="1203.2" r="1.9"/><circle cx="1925.6" cy="1214.0" r="2.2"/><circle cx="1984.1" cy="1241.2" r="4.1"/><circle cx="1986.8" cy="1238.8" r="1.6"/><circle cx="1986.5" cy="1238.4" r="3.6"/><circle cx="1984.3" cy="1240.4" r="3.6"/><circle cx="1988.7" cy="1242.9" r="1.7"/><circle cx="1814.9" cy="1245.1" r="1.9"/><circle cx="1814.4" cy="1244.3" r="1.5"/><circle cx="1815.4" cy="1245.1" r="3.0"/><circle cx="1815.6" cy="1248.3" r="3.6"/><circle cx="1809.3" cy="1244.9" r="4.7"/><circle cx="1813.5" cy="1248.2" r="3.7"/><circle cx="1847.9" cy="1235.6" r="2.7"/><circle cx="1857.5" cy="1230.1" r="2.7"/><circle cx="1852.1" cy="1235.3" r="1.9"/><circle cx="1859.5" cy="1230.0" r="1.9"/><circle cx="1858.6" cy="1231.5" r="2.4"/><circle cx="1847.6" cy="1237.1" r="2.8"/><circle cx="1847.1" cy="1237.2" r="2.4"/><circle cx="1846.9" cy="1236.4" r="1.9"/><circle cx="1823.3" cy="1182.9" r="2.1"/><circle cx="1822.0" cy="1177.2" r="1.6"/><circle cx="1819.3" cy="1174.4" r="1.1"/><circle cx="1818.9" cy="1179.7" r="2.0"/><circle cx="1820.3" cy="1170.3" r="2.5"/><circle cx="1820.0" cy="1175.8" r="2.2"/><circle cx="1821.0" cy="1174.5" r="2.6"/><circle cx="1822.1" cy="1176.9" r="1.6"/><circle cx="1335.5" cy="1017.7" r="2.7"/><circle cx="1331.2" cy="987.2" r="1.9"/><circle cx="1339.1" cy="1009.8" r="2.8"/><circle cx="1344.3" cy="988.9" r="2.3"/><circle cx="1337.2" cy="1003.0" r="1.1"/><circle cx="1341.0" cy="1001.1" r="2.8"/><circle cx="1333.3" cy="995.4" r="1.3"/><circle cx="1338.0" cy="1000.2" r="1.3"/><circle cx="1335.2" cy="1007.0" r="1.5"/><circle cx="1334.8" cy="994.8" r="1.3"/><circle cx="1337.7" cy="988.7" r="2.2"/><circle cx="1335.0" cy="1021.1" r="1.1"/><circle cx="1335.5" cy="1027.8" r="1.6"/><circle cx="1334.3" cy="992.7" r="1.3"/><circle cx="1331.1" cy="1007.1" r="1.2"/><circle cx="1330.8" cy="997.4" r="1.7"/><circle cx="1337.7" cy="970.7" r="1.8"/><circle cx="1333.5" cy="1022.6" r="2.4"/><circle cx="1328.7" cy="998.5" r="1.7"/><circle cx="1335.8" cy="981.8" r="2.6"/><circle cx="1336.3" cy="1004.9" r="2.6"/><circle cx="1327.7" cy="987.1" r="2.4"/><circle cx="1339.6" cy="1035.6" r="3.0"/><circle cx="1335.2" cy="1038.1" r="1.5"/><circle cx="1342.0" cy="1049.1" r="1.8"/><circle cx="1335.6" cy="1057.2" r="3.2"/><circle cx="1332.2" cy="1039.3" r="1.1"/><circle cx="1336.9" cy="1033.3" r="2.8"/><circle cx="1334.8" cy="1056.7" r="2.2"/><circle cx="1340.0" cy="1034.5" r="2.9"/><circle cx="1343.2" cy="1036.0" r="2.2"/><circle cx="1337.3" cy="1033.4" r="3.2"/><circle cx="1344.4" cy="1040.3" r="2.6"/><circle cx="1347.5" cy="1058.4" r="2.5"/><circle cx="1339.7" cy="1045.2" r="3.0"/><circle cx="1340.4" cy="1031.4" r="2.0"/><circle cx="1339.2" cy="1056.5" r="3.1"/><circle cx="1338.0" cy="1042.8" r="1.6"/><circle cx="1348.3" cy="1108.1" r="3.7"/><circle cx="1343.7" cy="1096.2" r="2.1"/><circle cx="1342.3" cy="1102.3" r="2.2"/><circle cx="1333.8" cy="1104.7" r="3.3"/><circle cx="1341.7" cy="1093.9" r="3.6"/><circle cx="1336.8" cy="1106.1" r="3.6"/><circle cx="1340.0" cy="1101.7" r="4.2"/><circle cx="1331.9" cy="1101.5" r="3.5"/><circle cx="1342.5" cy="1095.1" r="3.6"/><circle cx="1346.7" cy="1112.1" r="2.4"/><circle cx="1337.2" cy="1100.9" r="1.3"/><circle cx="1335.7" cy="1102.5" r="3.1"/><circle cx="1343.0" cy="1099.9" r="3.4"/><circle cx="1330.8" cy="1094.4" r="3.5"/><circle cx="1326.8" cy="1101.5" r="1.6"/><circle cx="1334.9" cy="1091.1" r="1.7"/><circle cx="1337.6" cy="1164.5" r="3.2"/><circle cx="1330.1" cy="1150.1" r="3.9"/><circle cx="1333.6" cy="1146.8" r="4.2"/><circle cx="1341.1" cy="1141.5" r="3.4"/><circle cx="1333.9" cy="1145.3" r="4.3"/><circle cx="1335.3" cy="1146.5" r="3.8"/><circle cx="1334.4" cy="1150.9" r="4.0"/><circle cx="1336.8" cy="1156.2" r="1.4"/><circle cx="1329.8" cy="1149.0" r="3.8"/><circle cx="1346.0" cy="1146.4" r="3.3"/><circle cx="1326.4" cy="1158.3" r="1.9"/><circle cx="1333.4" cy="1157.1" r="2.3"/><circle cx="1334.1" cy="851.7" r="1.8"/><circle cx="1337.1" cy="852.2" r="1.8"/><circle cx="1335.6" cy="850.9" r="1.6"/><circle cx="573.2" cy="1064.3" r="2.4"/><circle cx="570.7" cy="1085.8" r="2.2"/><circle cx="579.1" cy="1089.4" r="2.0"/><circle cx="559.9" cy="1061.9" r="2.6"/><circle cx="579.5" cy="1104.8" r="2.3"/><circle cx="567.8" cy="1113.4" r="2.0"/><circle cx="575.7" cy="1090.8" r="2.5"/><circle cx="568.8" cy="1116.4" r="2.0"/><circle cx="574.1" cy="1005.6" r="1.2"/><circle cx="573.7" cy="1087.5" r="1.9"/><circle cx="576.8" cy="1048.2" r="1.7"/><circle cx="579.7" cy="1041.6" r="2.5"/><circle cx="569.0" cy="1081.1" r="2.2"/><circle cx="573.7" cy="1090.1" r="1.3"/><circle cx="582.4" cy="1075.3" r="1.2"/><circle cx="574.1" cy="1022.7" r="1.2"/><circle cx="577.7" cy="1088.3" r="1.9"/><circle cx="572.3" cy="1045.0" r="1.6"/><circle cx="565.6" cy="1097.9" r="2.6"/><circle cx="587.2" cy="1008.0" r="2.3"/><circle cx="568.4" cy="1095.3" r="2.5"/><circle cx="578.5" cy="1074.0" r="2.3"/><circle cx="572.8" cy="1101.0" r="1.8"/><circle cx="580.0" cy="1060.7" r="2.4"/><circle cx="579.8" cy="1030.0" r="1.6"/><circle cx="576.1" cy="1081.0" r="1.9"/><circle cx="2103.1" cy="1034.4" r="2.5"/><circle cx="2105.2" cy="797.5" r="2.0"/><circle cx="2094.4" cy="994.7" r="1.8"/><circle cx="2102.6" cy="964.7" r="2.4"/><circle cx="2094.4" cy="1118.8" r="1.4"/><circle cx="2100.9" cy="992.1" r="1.2"/><circle cx="2088.7" cy="946.2" r="2.2"/><circle cx="2090.1" cy="1061.9" r="1.4"/><circle cx="2095.7" cy="1051.0" r="1.4"/><circle cx="2102.0" cy="1012.8" r="1.9"/><circle cx="2093.8" cy="960.5" r="2.0"/><circle cx="2092.7" cy="1111.3" r="1.1"/><circle cx="2099.8" cy="851.4" r="2.0"/><circle cx="2086.9" cy="849.2" r="1.3"/><circle cx="2103.9" cy="1046.8" r="2.2"/><circle cx="2091.3" cy="982.0" r="1.8"/><circle cx="2086.1" cy="1035.4" r="1.2"/><circle cx="2096.5" cy="974.4" r="2.4"/><circle cx="2097.2" cy="1125.0" r="1.6"/><circle cx="2093.2" cy="937.8" r="2.6"/><circle cx="2090.9" cy="1014.4" r="1.9"/><circle cx="2098.0" cy="1166.6" r="1.6"/><circle cx="2100.4" cy="1038.9" r="2.2"/><circle cx="2104.6" cy="946.3" r="2.6"/><circle cx="2100.0" cy="1143.9" r="2.3"/><circle cx="2098.6" cy="1030.0" r="1.8"/><circle cx="2091.9" cy="1039.8" r="2.2"/><circle cx="2098.6" cy="1053.2" r="1.6"/><circle cx="2101.4" cy="1064.1" r="2.0"/><circle cx="2097.5" cy="1037.5" r="2.2"/><circle cx="2108.4" cy="1140.5" r="2.6"/><circle cx="2100.1" cy="1122.7" r="3.1"/><circle cx="2108.3" cy="1124.7" r="2.4"/><circle cx="2098.8" cy="1107.5" r="2.9"/><circle cx="2099.8" cy="1146.7" r="3.4"/><circle cx="2097.6" cy="1113.3" r="1.7"/><circle cx="2092.1" cy="1140.6" r="3.0"/><circle cx="2094.8" cy="1136.8" r="2.0"/><circle cx="2095.6" cy="1121.0" r="3.4"/><circle cx="2097.0" cy="1132.5" r="2.6"/><circle cx="2100.5" cy="1129.6" r="2.2"/><circle cx="2102.2" cy="1103.1" r="1.8"/></g>
<g fill="#ffd68a" filter="url(#b1)"><circle cx="660.5" cy="1186.2" r="1.0"/><circle cx="620.7" cy="1176.8" r="0.6"/><circle cx="710.6" cy="1163.3" r="0.8"/><circle cx="671.7" cy="1202.2" r="1.1"/><circle cx="669.9" cy="1163.1" r="1.3"/><circle cx="681.7" cy="1179.9" r="1.6"/><circle cx="607.2" cy="1186.0" r="1.4"/><circle cx="701.5" cy="1170.2" r="1.3"/><circle cx="653.2" cy="1178.7" r="1.6"/><circle cx="610.0" cy="1190.0" r="1.6"/><circle cx="635.5" cy="1160.6" r="1.0"/><circle cx="662.6" cy="1164.5" r="1.7"/><circle cx="663.8" cy="1170.8" r="0.7"/><circle cx="676.2" cy="1194.2" r="1.1"/><circle cx="636.4" cy="1175.1" r="1.2"/><circle cx="636.0" cy="1186.5" r="1.3"/><circle cx="598.2" cy="1180.3" r="1.4"/><circle cx="704.8" cy="1155.4" r="1.8"/><circle cx="645.6" cy="1173.5" r="1.6"/><circle cx="715.4" cy="1156.1" r="1.2"/><circle cx="649.0" cy="1171.3" r="1.6"/><circle cx="632.9" cy="1178.3" r="0.6"/><circle cx="703.1" cy="1141.4" r="0.6"/><circle cx="662.2" cy="1165.1" r="0.7"/><circle cx="645.1" cy="1193.8" r="1.6"/><circle cx="694.4" cy="1169.4" r="0.6"/><circle cx="647.9" cy="1169.6" r="1.6"/><circle cx="688.9" cy="1166.0" r="1.8"/><circle cx="651.6" cy="1180.3" r="1.3"/><circle cx="674.2" cy="1172.3" r="1.0"/><circle cx="641.1" cy="1176.1" r="0.6"/><circle cx="670.6" cy="1166.1" r="1.7"/><circle cx="676.2" cy="1165.1" r="1.1"/><circle cx="613.2" cy="1185.0" r="1.3"/><circle cx="616.2" cy="1181.2" r="1.7"/><circle cx="624.0" cy="1183.5" r="1.4"/><circle cx="658.8" cy="1182.9" r="1.8"/><circle cx="618.3" cy="1183.8" r="0.5"/><circle cx="623.5" cy="1190.3" r="0.5"/><circle cx="622.2" cy="1175.6" r="0.6"/><circle cx="630.5" cy="1174.8" r="1.4"/><circle cx="630.4" cy="1193.9" r="1.5"/><circle cx="665.3" cy="1173.8" r="1.4"/><circle cx="676.1" cy="1169.0" r="1.1"/><circle cx="632.6" cy="1177.2" r="1.0"/><circle cx="646.3" cy="1186.5" r="1.3"/><circle cx="648.3" cy="1186.3" r="1.5"/><circle cx="692.7" cy="1168.4" r="1.5"/><circle cx="648.9" cy="1183.7" r="1.5"/><circle cx="657.8" cy="1181.3" r="1.1"/><circle cx="649.7" cy="1173.3" r="0.9"/><circle cx="631.0" cy="1197.3" r="1.1"/><circle cx="664.8" cy="1169.0" r="0.9"/><circle cx="615.8" cy="1170.4" r="1.1"/><circle cx="658.4" cy="1179.8" r="1.2"/><circle cx="677.9" cy="1185.8" r="1.6"/><circle cx="666.2" cy="1180.0" r="1.5"/><circle cx="618.8" cy="1172.1" r="0.9"/><circle cx="672.9" cy="1177.0" r="1.5"/><circle cx="653.5" cy="1184.9" r="1.0"/><circle cx="630.0" cy="1187.0" r="1.7"/><circle cx="656.7" cy="1176.3" r="1.7"/><circle cx="712.9" cy="1142.5" r="1.1"/><circle cx="716.8" cy="1153.7" r="0.8"/><circle cx="649.2" cy="1159.8" r="1.4"/><circle cx="630.9" cy="1181.2" r="0.9"/><circle cx="657.4" cy="1178.8" r="1.3"/><circle cx="646.7" cy="1194.6" r="0.6"/><circle cx="689.8" cy="1159.0" r="1.7"/><circle cx="701.7" cy="1152.0" r="1.3"/><circle cx="703.2" cy="1165.0" r="0.7"/><circle cx="644.9" cy="1191.6" r="1.2"/><circle cx="598.8" cy="1201.7" r="1.3"/><circle cx="644.4" cy="1184.7" r="1.6"/><circle cx="605.3" cy="1191.0" r="1.0"/><circle cx="669.3" cy="1183.2" r="1.6"/><circle cx="682.9" cy="1183.4" r="1.7"/><circle cx="669.8" cy="1156.0" r="0.5"/><circle cx="611.8" cy="1173.7" r="0.6"/><circle cx="653.7" cy="1183.6" r="1.2"/><circle cx="627.1" cy="1188.0" r="1.5"/><circle cx="664.8" cy="1173.5" r="0.7"/><circle cx="663.3" cy="1176.3" r="1.8"/><circle cx="661.8" cy="1171.1" r="1.2"/><circle cx="646.6" cy="1185.5" r="1.0"/><circle cx="629.3" cy="1172.7" r="1.0"/><circle cx="666.2" cy="1180.9" r="0.7"/><circle cx="610.4" cy="1182.3" r="1.0"/><circle cx="671.7" cy="1174.6" r="1.0"/><circle cx="612.4" cy="1177.0" r="1.0"/><circle cx="664.9" cy="1161.2" r="1.1"/><circle cx="633.2" cy="1189.4" r="1.4"/><circle cx="617.4" cy="1192.5" r="1.1"/><circle cx="658.9" cy="1186.5" r="1.4"/><circle cx="683.6" cy="1173.0" r="1.1"/><circle cx="701.1" cy="1149.3" r="1.0"/><circle cx="693.8" cy="1156.2" r="0.8"/><circle cx="640.7" cy="1180.7" r="1.6"/><circle cx="619.2" cy="1168.6" r="1.5"/><circle cx="628.4" cy="1169.7" r="1.2"/><circle cx="687.6" cy="1175.1" r="0.5"/><circle cx="689.1" cy="1179.9" r="0.6"/><circle cx="666.7" cy="1175.3" r="1.6"/><circle cx="658.2" cy="1177.0" r="1.6"/><circle cx="698.5" cy="1177.3" r="1.4"/><circle cx="687.3" cy="1148.1" r="1.3"/><circle cx="656.8" cy="1173.1" r="1.5"/><circle cx="608.8" cy="1186.8" r="0.6"/><circle cx="649.4" cy="1155.7" r="0.6"/><circle cx="640.7" cy="1190.3" r="1.6"/><circle cx="657.3" cy="1181.3" r="0.8"/><circle cx="616.2" cy="1175.5" r="1.0"/><circle cx="637.0" cy="1187.5" r="1.0"/><circle cx="644.9" cy="1180.5" r="1.2"/><circle cx="684.2" cy="1166.9" r="1.5"/><circle cx="681.6" cy="1181.3" r="1.5"/><circle cx="636.5" cy="1170.8" r="1.1"/><circle cx="612.6" cy="1171.3" r="0.7"/><circle cx="696.9" cy="1174.0" r="1.7"/><circle cx="623.5" cy="1183.0" r="1.4"/><circle cx="633.2" cy="1193.5" r="0.7"/><circle cx="608.3" cy="1191.4" r="0.8"/><circle cx="600.7" cy="1178.2" r="0.8"/><circle cx="616.6" cy="1184.3" r="1.4"/><circle cx="609.8" cy="1191.4" r="0.7"/><circle cx="649.2" cy="1183.9" r="0.9"/><circle cx="636.3" cy="1193.5" r="0.9"/><circle cx="625.5" cy="1185.2" r="1.6"/><circle cx="597.2" cy="1200.0" r="1.0"/><circle cx="641.0" cy="1171.6" r="1.1"/><circle cx="592.1" cy="1201.7" r="1.4"/><circle cx="599.6" cy="1205.9" r="1.6"/><circle cx="610.5" cy="1195.7" r="0.8"/><circle cx="615.2" cy="1180.7" r="1.6"/><circle cx="633.1" cy="1182.5" r="0.7"/><circle cx="625.8" cy="1195.1" r="1.3"/><circle cx="649.5" cy="1168.5" r="0.8"/><circle cx="635.5" cy="1181.3" r="1.0"/><circle cx="622.8" cy="1187.2" r="0.6"/><circle cx="632.1" cy="1181.8" r="0.9"/><circle cx="595.7" cy="1193.0" r="0.5"/><circle cx="615.8" cy="1200.6" r="1.0"/><circle cx="635.0" cy="1197.7" r="1.6"/><circle cx="606.5" cy="1202.4" r="0.6"/><circle cx="623.6" cy="1202.7" r="0.6"/><circle cx="656.5" cy="1168.3" r="0.6"/><circle cx="643.2" cy="1181.5" r="1.3"/><circle cx="623.8" cy="1183.4" r="1.2"/><circle cx="599.9" cy="1185.3" r="0.8"/><circle cx="620.4" cy="1170.1" r="1.2"/><circle cx="614.7" cy="1192.3" r="1.0"/><circle cx="608.0" cy="1205.9" r="1.2"/><circle cx="612.2" cy="1191.8" r="1.2"/><circle cx="614.9" cy="1189.3" r="1.5"/><circle cx="618.0" cy="1188.6" r="1.5"/><circle cx="638.5" cy="1191.6" r="1.3"/><circle cx="601.4" cy="1191.2" r="1.2"/><circle cx="608.0" cy="1197.2" r="0.7"/><circle cx="656.9" cy="1185.7" r="1.3"/><circle cx="590.7" cy="1196.9" r="0.9"/><circle cx="625.3" cy="1198.1" r="1.5"/><circle cx="649.8" cy="1184.9" r="0.8"/><circle cx="625.1" cy="1182.2" r="0.9"/><circle cx="605.1" cy="1202.1" r="1.3"/><circle cx="604.1" cy="1209.4" r="0.6"/><circle cx="624.8" cy="1193.9" r="0.6"/><circle cx="627.4" cy="1176.0" r="0.7"/><circle cx="635.4" cy="1194.8" r="1.3"/><circle cx="635.4" cy="1174.0" r="1.2"/><circle cx="639.7" cy="1192.2" r="0.7"/><circle cx="644.6" cy="1200.6" r="0.7"/><circle cx="709.0" cy="1198.0" r="1.2"/><circle cx="713.0" cy="1197.3" r="1.0"/><circle cx="681.6" cy="1197.7" r="0.7"/><circle cx="694.2" cy="1193.7" r="1.1"/><circle cx="562.1" cy="1181.9" r="0.9"/><circle cx="643.7" cy="1204.7" r="0.9"/><circle cx="553.4" cy="1195.8" r="0.9"/><circle cx="674.9" cy="1197.0" r="0.6"/><circle cx="692.8" cy="1192.6" r="0.8"/><circle cx="609.8" cy="1205.2" r="1.2"/><circle cx="624.7" cy="1191.8" r="0.6"/><circle cx="689.4" cy="1180.3" r="1.1"/><circle cx="676.9" cy="1209.9" r="1.2"/><circle cx="692.6" cy="1198.3" r="0.9"/><circle cx="582.1" cy="1198.3" r="0.7"/><circle cx="573.5" cy="1198.7" r="0.9"/><circle cx="627.6" cy="1197.8" r="0.9"/><circle cx="684.3" cy="1199.1" r="1.2"/><circle cx="676.8" cy="1203.4" r="0.9"/><circle cx="661.8" cy="1201.6" r="0.7"/><circle cx="699.5" cy="1202.8" r="0.7"/><circle cx="600.1" cy="1207.5" r="0.6"/><circle cx="568.9" cy="1199.1" r="0.9"/><circle cx="579.9" cy="1197.7" r="0.8"/><circle cx="688.5" cy="1200.4" r="0.8"/><circle cx="570.7" cy="1194.2" r="0.6"/><circle cx="647.5" cy="1215.6" r="0.8"/><circle cx="594.9" cy="1202.3" r="0.7"/><circle cx="673.7" cy="1199.3" r="0.7"/><circle cx="601.1" cy="1216.8" r="1.0"/><circle cx="630.2" cy="1209.9" r="1.3"/><circle cx="663.2" cy="1201.1" r="0.6"/><circle cx="592.0" cy="1199.3" r="1.0"/><circle cx="720.5" cy="1214.3" r="0.9"/><circle cx="715.3" cy="1183.7" r="0.5"/><circle cx="595.0" cy="1188.0" r="0.6"/><circle cx="612.8" cy="1197.7" r="0.8"/><circle cx="608.3" cy="1183.4" r="0.6"/><circle cx="684.2" cy="1179.3" r="0.9"/><circle cx="711.0" cy="1197.5" r="0.7"/><circle cx="685.6" cy="1195.9" r="0.6"/><circle cx="671.6" cy="1188.2" r="0.8"/><circle cx="651.3" cy="1216.1" r="0.5"/><circle cx="640.5" cy="1191.5" r="0.6"/><circle cx="607.7" cy="1189.3" r="1.2"/><circle cx="690.1" cy="1198.0" r="1.1"/><circle cx="614.6" cy="1204.7" r="0.8"/><circle cx="731.7" cy="1196.6" r="0.6"/><circle cx="569.9" cy="1191.3" r="0.5"/><circle cx="578.7" cy="1188.8" r="0.5"/><circle cx="605.5" cy="1198.6" r="0.9"/><circle cx="634.1" cy="1191.9" r="1.1"/><circle cx="653.5" cy="1208.1" r="0.6"/><circle cx="702.0" cy="1194.9" r="1.3"/><circle cx="597.0" cy="1196.9" r="0.9"/><circle cx="604.0" cy="1188.8" r="1.0"/><circle cx="695.4" cy="1189.6" r="1.0"/><circle cx="649.3" cy="1215.5" r="1.0"/><circle cx="701.7" cy="1204.7" r="0.9"/><circle cx="691.3" cy="1200.6" r="0.9"/><circle cx="558.3" cy="1191.8" r="0.8"/><circle cx="665.6" cy="1195.4" r="0.8"/><circle cx="724.4" cy="1196.4" r="0.6"/><circle cx="607.8" cy="1217.6" r="1.1"/><circle cx="721.1" cy="1191.0" r="1.2"/><circle cx="632.3" cy="1213.5" r="1.2"/><circle cx="706.0" cy="1191.1" r="0.8"/><circle cx="736.1" cy="1184.5" r="1.2"/><circle cx="603.4" cy="1207.1" r="0.7"/><circle cx="647.0" cy="1201.4" r="1.1"/><circle cx="599.6" cy="1204.3" r="1.1"/><circle cx="686.2" cy="1200.2" r="0.7"/><circle cx="634.8" cy="1206.2" r="1.1"/><circle cx="704.1" cy="1193.9" r="1.2"/><circle cx="627.8" cy="1209.6" r="0.9"/><circle cx="641.6" cy="1200.9" r="1.2"/><circle cx="590.4" cy="1205.4" r="1.1"/><circle cx="611.6" cy="1217.7" r="0.5"/><circle cx="571.5" cy="1195.7" r="0.6"/><circle cx="573.0" cy="1210.9" r="0.9"/><circle cx="732.0" cy="1164.2" r="0.5"/><circle cx="601.2" cy="1199.7" r="0.8"/><circle cx="564.9" cy="1195.0" r="0.7"/><circle cx="605.3" cy="1191.4" r="0.7"/><circle cx="556.1" cy="1201.4" r="1.0"/><circle cx="717.6" cy="1184.5" r="0.6"/><circle cx="691.7" cy="1185.3" r="1.2"/><circle cx="653.2" cy="1207.7" r="0.5"/><circle cx="685.2" cy="1187.6" r="0.9"/><circle cx="688.3" cy="1191.5" r="1.0"/><circle cx="625.3" cy="1203.2" r="0.6"/><circle cx="687.8" cy="1197.5" r="0.8"/><circle cx="604.6" cy="1207.1" r="0.9"/><circle cx="727.5" cy="1195.8" r="0.9"/><circle cx="640.4" cy="1190.2" r="1.2"/><circle cx="676.0" cy="1202.6" r="0.9"/><circle cx="640.7" cy="1218.3" r="1.2"/><circle cx="573.3" cy="1189.6" r="0.9"/><circle cx="724.9" cy="1188.1" r="0.7"/><circle cx="720.3" cy="1198.6" r="1.2"/><circle cx="611.2" cy="1223.6" r="1.3"/><circle cx="608.5" cy="1206.4" r="0.6"/><circle cx="606.4" cy="1199.9" r="0.7"/><circle cx="603.8" cy="1204.5" r="1.1"/><circle cx="691.4" cy="1181.0" r="0.5"/><circle cx="611.5" cy="1200.2" r="0.7"/><circle cx="641.2" cy="1215.8" r="0.5"/><circle cx="605.2" cy="1198.7" r="1.2"/><circle cx="603.9" cy="1198.2" r="1.0"/><circle cx="598.6" cy="1203.1" r="0.6"/><circle cx="600.5" cy="1182.6" r="0.5"/><circle cx="714.7" cy="1187.3" r="0.6"/><circle cx="633.9" cy="1202.8" r="0.6"/><circle cx="590.7" cy="1204.1" r="1.2"/><circle cx="580.7" cy="1216.5" r="1.3"/><circle cx="726.8" cy="1197.1" r="1.3"/><circle cx="640.6" cy="1197.0" r="0.5"/><circle cx="618.8" cy="1186.7" r="1.0"/><circle cx="629.9" cy="1202.6" r="0.9"/><circle cx="705.4" cy="1204.8" r="1.2"/><circle cx="714.3" cy="1213.8" r="1.2"/><circle cx="588.1" cy="1204.6" r="0.5"/><circle cx="711.0" cy="1198.6" r="0.6"/><circle cx="573.3" cy="1183.6" r="1.3"/><circle cx="661.6" cy="1195.6" r="0.6"/><circle cx="647.5" cy="1204.5" r="1.0"/><circle cx="606.5" cy="1201.6" r="0.8"/><circle cx="600.9" cy="1187.7" r="1.2"/><circle cx="710.5" cy="1186.0" r="1.3"/><circle cx="613.7" cy="1208.2" r="1.1"/><circle cx="613.8" cy="1196.5" r="1.3"/><circle cx="626.4" cy="1206.2" r="1.2"/><circle cx="718.2" cy="1186.7" r="1.0"/><circle cx="556.3" cy="1204.4" r="1.1"/><circle cx="575.5" cy="1189.2" r="1.3"/><circle cx="625.1" cy="1213.9" r="1.2"/><circle cx="643.2" cy="1193.7" r="0.8"/><circle cx="602.3" cy="1201.1" r="0.8"/><circle cx="679.5" cy="1190.7" r="0.6"/><circle cx="589.0" cy="1208.7" r="0.6"/><circle cx="570.8" cy="1203.4" r="0.5"/><circle cx="661.7" cy="1197.5" r="1.1"/><circle cx="711.4" cy="1176.5" r="0.9"/><circle cx="689.7" cy="1210.9" r="0.8"/><circle cx="646.9" cy="1200.1" r="0.7"/><circle cx="697.1" cy="1191.4" r="0.5"/><circle cx="637.0" cy="1203.3" r="0.6"/><circle cx="598.6" cy="1207.8" r="0.8"/><circle cx="662.0" cy="1191.7" r="0.6"/><circle cx="695.9" cy="1209.5" r="0.8"/><circle cx="668.9" cy="1218.7" r="0.5"/><circle cx="612.7" cy="1230.7" r="1.1"/><circle cx="597.5" cy="1228.6" r="1.1"/><circle cx="585.8" cy="1226.2" r="0.9"/><circle cx="572.7" cy="1221.0" r="0.9"/><circle cx="573.0" cy="1233.5" r="1.1"/><circle cx="631.1" cy="1244.6" r="1.0"/><circle cx="636.5" cy="1229.0" r="1.1"/><circle cx="567.8" cy="1222.2" r="0.7"/><circle cx="681.3" cy="1209.9" r="1.0"/><circle cx="596.6" cy="1227.2" r="0.7"/><circle cx="591.2" cy="1220.1" r="1.1"/><circle cx="704.3" cy="1225.8" r="0.8"/><circle cx="590.7" cy="1226.0" r="0.8"/><circle cx="623.2" cy="1211.0" r="0.5"/><circle cx="612.7" cy="1226.3" r="0.7"/><circle cx="594.6" cy="1216.9" r="0.6"/><circle cx="581.4" cy="1227.6" r="0.7"/><circle cx="661.0" cy="1232.0" r="0.9"/><circle cx="584.8" cy="1216.2" r="0.9"/><circle cx="638.3" cy="1216.0" r="0.5"/><circle cx="676.4" cy="1210.7" r="0.9"/><circle cx="607.6" cy="1216.5" r="0.7"/><circle cx="682.1" cy="1216.4" r="1.2"/><circle cx="633.6" cy="1234.2" r="0.7"/><circle cx="659.7" cy="1217.5" r="0.9"/><circle cx="669.5" cy="1217.5" r="1.1"/><circle cx="612.4" cy="1223.4" r="1.1"/><circle cx="599.9" cy="1231.6" r="0.9"/><circle cx="615.6" cy="1213.2" r="0.9"/><circle cx="705.2" cy="1200.9" r="0.7"/><circle cx="555.9" cy="1213.2" r="0.7"/><circle cx="622.0" cy="1220.3" r="1.0"/><circle cx="636.4" cy="1224.9" r="0.9"/><circle cx="604.3" cy="1218.6" r="0.8"/><circle cx="578.9" cy="1229.8" r="0.6"/><circle cx="562.4" cy="1225.3" r="0.9"/><circle cx="591.6" cy="1230.1" r="1.1"/><circle cx="673.8" cy="1214.9" r="0.5"/><circle cx="591.5" cy="1241.2" r="0.6"/><circle cx="684.4" cy="1214.7" r="0.7"/><circle cx="698.9" cy="1222.6" r="0.9"/><circle cx="592.1" cy="1247.0" r="1.1"/><circle cx="666.1" cy="1217.3" r="1.0"/><circle cx="666.9" cy="1227.6" r="1.2"/><circle cx="606.4" cy="1218.7" r="1.0"/><circle cx="590.3" cy="1223.3" r="1.1"/><circle cx="652.5" cy="1218.7" r="0.8"/><circle cx="672.5" cy="1227.4" r="0.9"/><circle cx="619.4" cy="1224.6" r="0.9"/><circle cx="590.3" cy="1214.5" r="1.2"/><circle cx="677.9" cy="1208.6" r="0.5"/><circle cx="638.0" cy="1204.4" r="0.6"/><circle cx="595.4" cy="1222.6" r="0.8"/><circle cx="669.8" cy="1227.3" r="1.0"/><circle cx="647.4" cy="1225.8" r="0.9"/><circle cx="684.6" cy="1215.9" r="0.6"/><circle cx="663.5" cy="1223.5" r="1.2"/><circle cx="645.1" cy="1234.5" r="0.5"/><circle cx="598.1" cy="1219.0" r="0.5"/><circle cx="623.0" cy="1241.4" r="0.6"/><circle cx="661.6" cy="1226.8" r="0.8"/><circle cx="651.4" cy="1226.3" r="0.8"/><circle cx="669.1" cy="1222.3" r="0.8"/><circle cx="569.3" cy="1234.1" r="0.9"/><circle cx="643.8" cy="1223.9" r="0.5"/><circle cx="611.2" cy="1233.2" r="0.7"/><circle cx="657.6" cy="1211.6" r="1.0"/><circle cx="627.4" cy="1225.6" r="0.5"/><circle cx="716.6" cy="1224.8" r="0.6"/><circle cx="723.5" cy="1222.9" r="1.3"/><circle cx="712.9" cy="1231.4" r="1.8"/><circle cx="720.5" cy="1229.4" r="1.8"/><circle cx="723.1" cy="1227.9" r="1.1"/><circle cx="719.5" cy="1234.9" r="1.0"/><circle cx="724.1" cy="1224.9" r="0.5"/><circle cx="709.5" cy="1225.9" r="1.7"/><circle cx="726.7" cy="1224.7" r="0.9"/><circle cx="710.4" cy="1232.6" r="0.9"/><circle cx="724.1" cy="1228.1" r="0.6"/><circle cx="718.0" cy="1227.7" r="1.8"/><circle cx="717.6" cy="1229.5" r="1.5"/><circle cx="703.7" cy="1234.6" r="1.2"/><circle cx="713.6" cy="1229.3" r="1.4"/><circle cx="697.8" cy="1238.3" r="0.5"/><circle cx="758.2" cy="1245.2" r="1.7"/><circle cx="743.0" cy="1252.0" r="1.2"/><circle cx="745.9" cy="1250.7" r="1.3"/><circle cx="754.8" cy="1245.4" r="1.5"/><circle cx="750.8" cy="1249.7" r="0.8"/><circle cx="746.1" cy="1251.7" r="1.5"/><circle cx="755.8" cy="1243.7" r="0.8"/><circle cx="749.3" cy="1248.1" r="0.8"/><circle cx="742.8" cy="1248.2" r="0.8"/><circle cx="751.4" cy="1247.5" r="0.7"/><circle cx="792.1" cy="1245.9" r="1.5"/><circle cx="791.6" cy="1245.3" r="1.0"/><circle cx="801.3" cy="1243.9" r="1.3"/><circle cx="791.7" cy="1248.6" r="0.8"/><circle cx="795.9" cy="1246.2" r="0.7"/><circle cx="790.2" cy="1244.6" r="1.3"/><circle cx="800.8" cy="1245.4" r="1.0"/><circle cx="702.7" cy="1249.4" r="0.7"/><circle cx="702.9" cy="1247.4" r="1.5"/><circle cx="708.2" cy="1242.6" r="1.3"/><circle cx="705.3" cy="1267.1" r="1.5"/><circle cx="701.6" cy="1240.3" r="0.8"/><circle cx="705.2" cy="1260.2" r="0.7"/><circle cx="706.4" cy="1243.6" r="0.8"/><circle cx="706.0" cy="1250.4" r="0.5"/><circle cx="702.3" cy="1265.5" r="1.6"/><circle cx="708.7" cy="1249.2" r="0.8"/><circle cx="706.7" cy="1245.0" r="1.5"/><circle cx="704.5" cy="1249.6" r="1.1"/><circle cx="702.4" cy="1255.4" r="0.8"/><circle cx="706.5" cy="1259.6" r="1.4"/><circle cx="582.4" cy="1273.3" r="0.8"/><circle cx="586.4" cy="1280.7" r="1.7"/><circle cx="584.5" cy="1269.4" r="0.7"/><circle cx="577.5" cy="1272.6" r="1.7"/><circle cx="578.6" cy="1275.3" r="1.7"/><circle cx="582.5" cy="1280.6" r="0.9"/><circle cx="577.8" cy="1270.4" r="1.7"/><circle cx="575.3" cy="1274.2" r="1.4"/><circle cx="575.8" cy="1270.3" r="0.7"/><circle cx="604.6" cy="1320.1" r="0.9"/><circle cx="610.3" cy="1315.1" r="0.9"/><circle cx="599.9" cy="1320.1" r="0.8"/><circle cx="603.2" cy="1316.2" r="1.4"/><circle cx="603.8" cy="1319.1" r="1.5"/><circle cx="601.2" cy="1319.9" r="1.5"/><circle cx="604.4" cy="1318.3" r="0.5"/><circle cx="599.1" cy="1319.4" r="1.0"/><circle cx="602.9" cy="1316.9" r="1.7"/><circle cx="613.0" cy="1312.6" r="1.5"/><circle cx="610.7" cy="1316.6" r="1.5"/><circle cx="597.9" cy="1319.1" r="0.6"/><circle cx="564.6" cy="1340.0" r="1.5"/><circle cx="559.7" cy="1341.0" r="1.5"/><circle cx="572.0" cy="1337.9" r="1.6"/><circle cx="564.4" cy="1337.3" r="1.7"/><circle cx="567.4" cy="1339.4" r="1.6"/><circle cx="564.9" cy="1346.7" r="0.5"/><circle cx="567.5" cy="1347.2" r="0.5"/><circle cx="556.6" cy="1337.1" r="0.8"/><circle cx="564.1" cy="1328.5" r="1.3"/><circle cx="566.6" cy="1328.8" r="0.5"/><circle cx="576.4" cy="1316.2" r="1.2"/><circle cx="574.7" cy="1318.2" r="0.6"/><circle cx="578.2" cy="1287.5" r="0.9"/><circle cx="569.4" cy="1293.4" r="1.0"/><circle cx="578.1" cy="1273.6" r="0.7"/><circle cx="572.6" cy="1308.4" r="1.1"/><circle cx="562.8" cy="1305.3" r="0.9"/><circle cx="569.2" cy="1288.4" r="0.7"/><circle cx="573.8" cy="1275.9" r="0.7"/><circle cx="592.5" cy="1314.3" r="1.0"/><circle cx="563.5" cy="1292.0" r="1.2"/><circle cx="565.7" cy="1304.1" r="0.6"/><circle cx="777.0" cy="1170.2" r="1.2"/><circle cx="812.8" cy="1177.3" r="0.9"/><circle cx="809.8" cy="1174.4" r="0.8"/><circle cx="851.6" cy="1188.9" r="0.7"/><circle cx="856.8" cy="1181.2" r="0.8"/><circle cx="832.7" cy="1180.8" r="0.6"/><circle cx="810.6" cy="1173.1" r="0.6"/><circle cx="769.4" cy="1174.6" r="0.9"/><circle cx="767.2" cy="1164.4" r="1.0"/><circle cx="727.7" cy="1183.0" r="0.5"/><circle cx="839.2" cy="1182.1" r="0.9"/><circle cx="800.1" cy="1173.9" r="0.9"/><circle cx="789.5" cy="1177.8" r="0.8"/><circle cx="806.9" cy="1173.5" r="0.5"/><circle cx="767.7" cy="1185.0" r="0.9"/><circle cx="764.8" cy="1166.4" r="0.5"/><circle cx="839.6" cy="1200.1" r="0.6"/><circle cx="773.6" cy="1189.2" r="1.1"/><circle cx="817.6" cy="1179.5" r="1.0"/><circle cx="754.6" cy="1172.6" r="1.2"/><circle cx="815.2" cy="1162.5" r="0.7"/><circle cx="779.4" cy="1178.0" r="1.1"/><circle cx="747.6" cy="1171.4" r="1.1"/><circle cx="832.3" cy="1163.8" r="0.5"/><circle cx="765.8" cy="1181.0" r="1.0"/><circle cx="852.7" cy="1162.1" r="1.0"/><circle cx="771.5" cy="1173.5" r="1.1"/><circle cx="779.0" cy="1181.5" r="0.7"/><circle cx="864.3" cy="1178.2" r="0.8"/><circle cx="754.1" cy="1173.4" r="1.2"/><circle cx="842.3" cy="1170.9" r="1.1"/><circle cx="763.5" cy="1165.5" r="1.2"/><circle cx="833.8" cy="1179.3" r="1.0"/><circle cx="763.8" cy="1167.4" r="1.1"/><circle cx="778.1" cy="1188.4" r="1.0"/><circle cx="779.1" cy="1170.9" r="1.0"/><circle cx="800.4" cy="1191.6" r="1.1"/><circle cx="836.6" cy="1180.8" r="1.0"/><circle cx="843.2" cy="1173.3" r="1.0"/><circle cx="799.1" cy="1179.3" r="0.8"/><circle cx="822.8" cy="1154.6" r="0.6"/><circle cx="821.7" cy="1169.9" r="0.9"/><circle cx="862.3" cy="1180.2" r="0.9"/><circle cx="810.2" cy="1182.6" r="0.6"/><circle cx="805.1" cy="1188.9" r="1.1"/><circle cx="799.0" cy="1165.3" r="0.9"/><circle cx="764.3" cy="1168.1" r="1.0"/><circle cx="746.7" cy="1177.6" r="0.9"/><circle cx="807.6" cy="1174.8" r="1.1"/><circle cx="814.2" cy="1186.0" r="0.7"/><circle cx="853.8" cy="1180.1" r="1.2"/><circle cx="744.4" cy="1190.8" r="0.6"/><circle cx="814.3" cy="1165.7" r="0.7"/><circle cx="841.5" cy="1168.1" r="0.9"/><circle cx="760.3" cy="1186.6" r="1.2"/><circle cx="736.9" cy="1184.7" r="1.1"/><circle cx="767.9" cy="1187.1" r="0.6"/><circle cx="852.6" cy="1183.8" r="1.1"/><circle cx="764.6" cy="1169.5" r="0.7"/><circle cx="738.6" cy="1170.6" r="0.7"/><circle cx="840.6" cy="1192.7" r="1.1"/><circle cx="844.2" cy="1194.4" r="1.7"/><circle cx="837.5" cy="1196.4" r="0.8"/><circle cx="836.9" cy="1194.5" r="1.7"/><circle cx="849.3" cy="1192.5" r="1.4"/><circle cx="840.6" cy="1191.8" r="0.6"/><circle cx="844.7" cy="1196.7" r="0.5"/><circle cx="847.5" cy="1194.7" r="1.7"/><circle cx="843.0" cy="1188.2" r="1.3"/><circle cx="880.4" cy="1179.8" r="1.1"/><circle cx="875.2" cy="1182.2" r="0.6"/><circle cx="876.0" cy="1184.2" r="0.6"/><circle cx="881.2" cy="1181.5" r="1.3"/><circle cx="878.2" cy="1181.1" r="1.5"/><circle cx="879.0" cy="1181.6" r="0.6"/><circle cx="857.3" cy="1213.4" r="1.5"/><circle cx="852.1" cy="1220.8" r="0.6"/><circle cx="857.0" cy="1219.9" r="1.4"/><circle cx="864.2" cy="1218.0" r="0.5"/><circle cx="858.7" cy="1216.9" r="1.5"/><circle cx="858.6" cy="1212.5" r="1.1"/><circle cx="854.5" cy="1216.8" r="1.5"/><circle cx="901.4" cy="1212.6" r="1.2"/><circle cx="903.8" cy="1211.8" r="0.8"/><circle cx="897.8" cy="1210.6" r="0.5"/><circle cx="893.8" cy="1213.1" r="1.6"/><circle cx="889.7" cy="1207.1" r="1.4"/><circle cx="894.1" cy="1208.1" r="0.8"/><circle cx="839.8" cy="1240.2" r="0.6"/><circle cx="829.2" cy="1230.6" r="0.9"/><circle cx="811.1" cy="1233.0" r="0.6"/><circle cx="829.2" cy="1242.6" r="0.6"/><circle cx="812.8" cy="1223.6" r="0.8"/><circle cx="848.8" cy="1233.4" r="1.2"/><circle cx="806.9" cy="1233.6" r="1.0"/><circle cx="835.7" cy="1240.7" r="0.9"/><circle cx="810.0" cy="1236.7" r="1.1"/><circle cx="837.1" cy="1226.2" r="0.6"/><circle cx="973.3" cy="1160.0" r="1.6"/><circle cx="1003.4" cy="1171.0" r="1.7"/><circle cx="952.0" cy="1176.2" r="1.2"/><circle cx="959.0" cy="1173.2" r="1.2"/><circle cx="1021.9" cy="1171.0" r="1.4"/><circle cx="968.9" cy="1179.6" r="1.2"/><circle cx="983.2" cy="1155.5" r="0.6"/><circle cx="1025.3" cy="1170.0" r="0.8"/><circle cx="971.8" cy="1170.0" r="0.8"/><circle cx="1010.2" cy="1161.9" r="1.5"/><circle cx="992.4" cy="1173.2" r="1.0"/><circle cx="937.8" cy="1167.9" r="0.9"/><circle cx="982.3" cy="1160.6" r="0.8"/><circle cx="987.9" cy="1167.5" r="1.2"/><circle cx="988.3" cy="1172.1" r="1.1"/><circle cx="944.1" cy="1166.8" r="1.0"/><circle cx="1032.7" cy="1167.1" r="0.7"/><circle cx="1061.1" cy="1174.3" r="1.0"/><circle cx="999.7" cy="1173.4" r="1.3"/><circle cx="997.6" cy="1176.7" r="1.3"/><circle cx="958.4" cy="1176.8" r="1.6"/><circle cx="996.7" cy="1161.1" r="1.3"/><circle cx="968.9" cy="1178.5" r="1.3"/><circle cx="955.5" cy="1164.3" r="1.4"/><circle cx="997.8" cy="1181.3" r="1.7"/><circle cx="1007.2" cy="1172.3" r="1.7"/><circle cx="1032.7" cy="1178.8" r="1.2"/><circle cx="1023.1" cy="1176.1" r="0.5"/><circle cx="1000.1" cy="1165.9" r="1.6"/><circle cx="998.1" cy="1168.4" r="1.0"/><circle cx="1013.5" cy="1181.1" r="0.6"/><circle cx="998.2" cy="1172.2" r="1.5"/><circle cx="985.2" cy="1176.2" r="1.0"/><circle cx="955.8" cy="1166.2" r="1.6"/><circle cx="966.3" cy="1175.8" r="1.5"/><circle cx="985.5" cy="1174.4" r="1.5"/><circle cx="958.9" cy="1182.2" r="1.5"/><circle cx="966.0" cy="1173.6" r="0.6"/><circle cx="1008.0" cy="1165.7" r="0.9"/><circle cx="994.3" cy="1175.0" r="1.5"/><circle cx="1010.6" cy="1177.8" r="1.2"/><circle cx="949.9" cy="1167.2" r="1.0"/><circle cx="1004.3" cy="1183.1" r="1.6"/><circle cx="964.1" cy="1166.9" r="1.6"/><circle cx="990.3" cy="1174.4" r="1.3"/><circle cx="1004.5" cy="1163.0" r="0.6"/><circle cx="1002.3" cy="1170.3" r="0.9"/><circle cx="1038.0" cy="1171.7" r="1.4"/><circle cx="1036.7" cy="1178.9" r="1.0"/><circle cx="1037.7" cy="1173.5" r="1.6"/><circle cx="1016.4" cy="1173.8" r="1.6"/><circle cx="972.1" cy="1174.5" r="1.4"/><circle cx="885.7" cy="1174.0" r="1.5"/><circle cx="1015.0" cy="1163.0" r="0.7"/><circle cx="970.2" cy="1160.8" r="1.1"/><circle cx="961.7" cy="1166.4" r="0.7"/><circle cx="1009.6" cy="1167.7" r="0.6"/><circle cx="1020.5" cy="1170.5" r="1.3"/><circle cx="975.8" cy="1172.9" r="0.9"/><circle cx="997.2" cy="1165.8" r="1.6"/><circle cx="962.9" cy="1183.0" r="0.7"/><circle cx="970.2" cy="1170.5" r="0.7"/><circle cx="956.8" cy="1167.6" r="1.1"/><circle cx="990.1" cy="1176.2" r="0.9"/><circle cx="995.0" cy="1168.8" r="1.0"/><circle cx="1009.2" cy="1164.0" r="0.8"/><circle cx="999.4" cy="1170.7" r="0.7"/><circle cx="1017.0" cy="1172.4" r="1.5"/><circle cx="979.8" cy="1175.4" r="1.5"/><circle cx="989.9" cy="1170.9" r="1.3"/><circle cx="1016.0" cy="1176.1" r="0.7"/><circle cx="938.5" cy="1159.5" r="1.0"/><circle cx="978.4" cy="1179.4" r="1.3"/><circle cx="1005.7" cy="1172.9" r="1.0"/><circle cx="961.1" cy="1168.6" r="1.3"/><circle cx="982.0" cy="1185.0" r="0.9"/><circle cx="987.0" cy="1172.9" r="0.7"/><circle cx="997.6" cy="1184.8" r="1.0"/><circle cx="913.6" cy="1172.6" r="1.7"/><circle cx="987.4" cy="1165.0" r="0.9"/><circle cx="961.9" cy="1168.7" r="0.9"/><circle cx="989.9" cy="1175.3" r="1.4"/><circle cx="959.3" cy="1164.1" r="1.1"/><circle cx="950.9" cy="1161.3" r="0.5"/><circle cx="1003.8" cy="1164.4" r="0.9"/><circle cx="1033.8" cy="1169.4" r="0.9"/><circle cx="1016.7" cy="1172.7" r="1.0"/><circle cx="975.3" cy="1171.8" r="1.2"/><circle cx="982.9" cy="1181.8" r="1.1"/><circle cx="969.5" cy="1181.9" r="1.0"/><circle cx="1005.8" cy="1173.9" r="0.6"/><circle cx="925.4" cy="1173.6" r="1.6"/><circle cx="975.1" cy="1166.2" r="0.8"/><circle cx="993.1" cy="1176.9" r="1.3"/><circle cx="1019.3" cy="1172.9" r="1.0"/><circle cx="955.9" cy="1157.4" r="1.0"/><circle cx="966.1" cy="1165.7" r="1.0"/><circle cx="978.6" cy="1168.0" r="1.1"/><circle cx="965.9" cy="1169.0" r="0.8"/><circle cx="997.8" cy="1164.8" r="0.7"/><circle cx="976.7" cy="1177.9" r="1.0"/><circle cx="969.1" cy="1174.2" r="0.8"/><circle cx="944.5" cy="1167.7" r="0.6"/><circle cx="963.5" cy="1165.7" r="1.7"/><circle cx="999.8" cy="1169.3" r="1.3"/><circle cx="976.7" cy="1172.4" r="1.6"/><circle cx="1029.5" cy="1165.5" r="1.3"/><circle cx="1022.9" cy="1170.7" r="1.3"/><circle cx="951.5" cy="1157.0" r="1.5"/><circle cx="977.9" cy="1174.2" r="1.2"/><circle cx="1027.3" cy="1181.5" r="1.3"/><circle cx="1025.4" cy="1181.3" r="0.7"/><circle cx="1026.2" cy="1181.9" r="1.1"/><circle cx="1029.6" cy="1172.3" r="1.0"/><circle cx="1029.8" cy="1183.4" r="0.9"/><circle cx="1031.0" cy="1172.1" r="0.9"/><circle cx="1029.0" cy="1170.8" r="0.8"/><circle cx="1023.8" cy="1179.6" r="1.3"/><circle cx="1030.0" cy="1171.6" r="1.2"/><circle cx="1030.2" cy="1171.1" r="1.3"/><circle cx="1029.0" cy="1170.1" r="1.2"/><circle cx="1030.9" cy="1171.3" r="1.3"/><circle cx="1025.6" cy="1182.5" r="1.4"/><circle cx="1028.9" cy="1173.0" r="1.5"/><circle cx="1024.7" cy="1164.7" r="0.8"/><circle cx="1024.0" cy="1182.6" r="1.0"/><circle cx="1032.2" cy="1176.8" r="1.2"/><circle cx="1029.9" cy="1170.8" r="0.8"/><circle cx="1018.0" cy="1172.9" r="1.2"/><circle cx="1021.5" cy="1170.6" r="1.4"/><circle cx="1019.3" cy="1174.0" r="1.3"/><circle cx="1020.3" cy="1177.7" r="0.8"/><circle cx="1020.1" cy="1168.2" r="0.8"/><circle cx="1029.1" cy="1170.8" r="1.0"/><circle cx="1040.0" cy="1188.8" r="0.9"/><circle cx="1033.1" cy="1190.7" r="1.4"/><circle cx="1046.3" cy="1188.0" r="1.0"/><circle cx="1038.0" cy="1190.3" r="0.9"/><circle cx="1034.4" cy="1193.0" r="1.1"/><circle cx="1031.3" cy="1192.8" r="1.0"/><circle cx="1040.7" cy="1187.2" r="1.6"/><circle cx="1037.3" cy="1187.9" r="1.2"/><circle cx="1032.5" cy="1193.2" r="1.7"/><circle cx="1039.7" cy="1188.3" r="0.7"/><circle cx="1040.6" cy="1189.0" r="1.4"/><circle cx="1042.8" cy="1186.6" r="0.8"/><circle cx="1044.5" cy="1187.0" r="1.1"/><circle cx="1042.5" cy="1186.9" r="1.6"/><circle cx="931.0" cy="1222.8" r="0.5"/><circle cx="932.4" cy="1214.4" r="0.6"/><circle cx="938.9" cy="1222.3" r="0.8"/><circle cx="933.6" cy="1218.4" r="1.4"/><circle cx="928.7" cy="1219.8" r="1.8"/><circle cx="927.4" cy="1222.8" r="1.5"/><circle cx="930.8" cy="1222.4" r="1.9"/><circle cx="934.1" cy="1216.0" r="1.2"/><circle cx="930.3" cy="1218.8" r="0.6"/><circle cx="921.6" cy="1218.6" r="0.6"/><circle cx="939.8" cy="1220.5" r="2.0"/><circle cx="934.6" cy="1217.8" r="0.8"/><circle cx="946.8" cy="1213.8" r="1.7"/><circle cx="927.5" cy="1218.5" r="1.7"/><circle cx="939.0" cy="1214.2" r="0.9"/><circle cx="940.9" cy="1212.2" r="1.4"/><circle cx="937.9" cy="1221.2" r="1.5"/><circle cx="922.0" cy="1225.1" r="1.5"/><circle cx="942.3" cy="1199.8" r="1.1"/><circle cx="940.8" cy="1193.4" r="1.5"/><circle cx="942.6" cy="1206.7" r="1.6"/><circle cx="944.3" cy="1202.8" r="0.7"/><circle cx="942.6" cy="1198.5" r="1.3"/><circle cx="946.4" cy="1195.6" r="0.5"/><circle cx="940.3" cy="1195.4" r="1.3"/><circle cx="947.8" cy="1196.4" r="1.2"/><circle cx="984.5" cy="1192.2" r="0.6"/><circle cx="980.5" cy="1201.8" r="0.9"/><circle cx="976.0" cy="1196.1" r="1.3"/><circle cx="982.9" cy="1191.7" r="1.1"/><circle cx="983.8" cy="1195.9" r="0.7"/><circle cx="978.4" cy="1194.2" r="0.6"/><circle cx="954.2" cy="1193.4" r="0.5"/><circle cx="945.8" cy="1197.4" r="0.7"/><circle cx="937.2" cy="1205.0" r="1.0"/><circle cx="912.9" cy="1180.6" r="1.1"/><circle cx="953.7" cy="1196.4" r="1.1"/><circle cx="938.9" cy="1207.2" r="0.7"/><circle cx="950.5" cy="1209.5" r="0.7"/><circle cx="946.5" cy="1189.1" r="0.8"/><circle cx="948.1" cy="1197.0" r="0.9"/><circle cx="936.0" cy="1215.7" r="0.8"/><circle cx="933.3" cy="1190.0" r="0.6"/><circle cx="935.7" cy="1187.6" r="0.8"/><circle cx="927.9" cy="1192.9" r="1.1"/><circle cx="937.4" cy="1218.5" r="1.1"/><circle cx="908.3" cy="1178.1" r="1.1"/><circle cx="936.9" cy="1187.9" r="1.0"/><circle cx="930.3" cy="1202.3" r="0.8"/><circle cx="926.4" cy="1186.9" r="0.6"/><circle cx="930.4" cy="1184.1" r="1.0"/><circle cx="943.6" cy="1199.3" r="0.8"/><circle cx="943.5" cy="1182.7" r="0.8"/><circle cx="945.8" cy="1183.2" r="0.5"/><circle cx="934.2" cy="1182.0" r="0.9"/><circle cx="909.2" cy="1186.4" r="0.6"/><circle cx="930.3" cy="1182.5" r="1.0"/><circle cx="939.6" cy="1214.3" r="1.0"/><circle cx="939.9" cy="1184.7" r="0.9"/><circle cx="946.8" cy="1202.0" r="0.9"/><circle cx="940.2" cy="1182.6" r="0.8"/><circle cx="941.3" cy="1186.0" r="0.9"/><circle cx="1583.6" cy="1163.8" r="1.3"/><circle cx="1635.0" cy="1170.7" r="1.6"/><circle cx="1608.1" cy="1167.8" r="1.5"/><circle cx="1592.6" cy="1166.8" r="0.8"/><circle cx="1596.2" cy="1168.1" r="0.9"/><circle cx="1630.9" cy="1168.4" r="1.0"/><circle cx="1622.0" cy="1166.6" r="1.0"/><circle cx="1590.6" cy="1162.3" r="0.9"/><circle cx="1624.1" cy="1170.7" r="1.6"/><circle cx="1643.2" cy="1173.6" r="1.4"/><circle cx="1586.3" cy="1163.7" r="0.8"/><circle cx="1579.1" cy="1166.7" r="1.2"/><circle cx="1630.8" cy="1170.2" r="1.5"/><circle cx="1635.3" cy="1169.9" r="0.7"/><circle cx="1605.5" cy="1168.5" r="1.3"/><circle cx="1619.2" cy="1170.2" r="1.1"/><circle cx="1622.9" cy="1167.5" r="1.6"/><circle cx="1624.4" cy="1171.1" r="1.3"/><circle cx="1601.0" cy="1168.0" r="1.4"/><circle cx="1626.0" cy="1172.2" r="0.6"/><circle cx="1613.9" cy="1169.8" r="1.5"/><circle cx="1582.5" cy="1163.3" r="1.7"/><circle cx="1642.3" cy="1173.4" r="0.7"/><circle cx="1637.4" cy="1166.6" r="1.5"/><circle cx="1601.6" cy="1165.0" r="0.9"/><circle cx="1605.1" cy="1165.8" r="1.2"/><circle cx="1615.4" cy="1166.6" r="1.0"/><circle cx="1611.2" cy="1169.2" r="0.6"/><circle cx="1591.3" cy="1165.2" r="1.5"/><circle cx="1614.2" cy="1165.7" r="1.5"/><circle cx="1597.4" cy="1168.2" r="0.8"/><circle cx="1618.3" cy="1169.7" r="1.4"/><circle cx="1596.3" cy="1168.0" r="0.7"/><circle cx="1633.7" cy="1168.8" r="1.1"/><circle cx="1665.9" cy="1179.0" r="1.1"/><circle cx="1657.3" cy="1177.1" r="0.8"/><circle cx="1673.1" cy="1178.0" r="0.7"/><circle cx="1654.6" cy="1173.2" r="0.6"/><circle cx="1654.0" cy="1175.2" r="1.0"/><circle cx="1675.4" cy="1182.7" r="0.9"/><circle cx="1644.0" cy="1174.7" r="0.8"/><circle cx="1677.9" cy="1188.5" r="0.9"/><circle cx="1671.1" cy="1179.4" r="0.5"/><circle cx="1664.3" cy="1179.1" r="0.7"/><circle cx="1719.0" cy="1182.3" r="1.2"/><circle cx="1722.3" cy="1186.6" r="1.7"/><circle cx="1717.7" cy="1157.0" r="0.6"/><circle cx="1712.3" cy="1168.5" r="1.7"/><circle cx="1695.2" cy="1164.5" r="1.5"/><circle cx="1717.7" cy="1179.2" r="1.6"/><circle cx="1723.8" cy="1172.1" r="0.5"/><circle cx="1735.9" cy="1188.6" r="1.4"/><circle cx="1698.4" cy="1174.5" r="1.6"/><circle cx="1735.1" cy="1186.5" r="1.8"/><circle cx="1737.5" cy="1175.1" r="1.1"/><circle cx="1711.3" cy="1170.5" r="1.5"/><circle cx="1711.2" cy="1166.0" r="0.6"/><circle cx="1717.3" cy="1183.5" r="1.7"/><circle cx="1689.6" cy="1164.0" r="0.7"/><circle cx="1712.4" cy="1179.4" r="0.9"/><circle cx="1721.4" cy="1171.1" r="0.9"/><circle cx="1712.7" cy="1165.9" r="1.6"/><circle cx="1713.2" cy="1159.8" r="1.1"/><circle cx="1702.1" cy="1173.3" r="1.8"/><circle cx="1731.4" cy="1180.4" r="1.1"/><circle cx="1733.9" cy="1192.2" r="1.3"/><circle cx="1707.6" cy="1173.5" r="1.1"/><circle cx="1715.1" cy="1168.9" r="0.8"/><circle cx="1700.9" cy="1166.7" r="0.5"/><circle cx="1724.7" cy="1183.3" r="1.4"/><circle cx="1713.0" cy="1174.9" r="0.8"/><circle cx="1716.7" cy="1188.7" r="0.8"/><circle cx="1725.4" cy="1179.9" r="0.7"/><circle cx="1728.7" cy="1183.6" r="1.2"/><circle cx="1723.4" cy="1168.0" r="1.2"/><circle cx="1739.1" cy="1194.1" r="0.8"/><circle cx="1713.7" cy="1179.2" r="1.3"/><circle cx="1711.4" cy="1167.3" r="0.8"/><circle cx="1731.1" cy="1184.6" r="1.4"/><circle cx="1720.0" cy="1181.8" r="1.5"/><circle cx="1715.1" cy="1170.9" r="1.8"/><circle cx="1716.2" cy="1163.3" r="0.9"/><circle cx="1728.7" cy="1180.7" r="1.3"/><circle cx="1738.9" cy="1186.4" r="0.7"/><circle cx="1719.1" cy="1181.2" r="0.7"/><circle cx="1729.3" cy="1176.2" r="1.1"/><circle cx="1702.3" cy="1174.9" r="1.1"/><circle cx="1716.5" cy="1167.6" r="1.6"/><circle cx="1734.6" cy="1172.5" r="1.5"/><circle cx="1717.9" cy="1184.0" r="1.6"/><circle cx="1701.6" cy="1175.9" r="0.8"/><circle cx="1722.7" cy="1172.8" r="1.0"/><circle cx="1718.5" cy="1173.8" r="0.5"/><circle cx="1701.5" cy="1171.6" r="0.6"/><circle cx="1695.0" cy="1172.6" r="1.6"/><circle cx="1737.1" cy="1180.4" r="0.6"/><circle cx="1703.4" cy="1175.1" r="0.5"/><circle cx="1719.6" cy="1171.2" r="1.5"/><circle cx="1713.0" cy="1168.3" r="0.9"/><circle cx="1706.6" cy="1172.0" r="0.5"/><circle cx="1706.1" cy="1172.8" r="0.8"/><circle cx="1725.0" cy="1167.7" r="1.0"/><circle cx="1734.7" cy="1187.9" r="0.8"/><circle cx="1728.3" cy="1190.1" r="1.7"/><circle cx="1707.2" cy="1194.8" r="1.0"/><circle cx="1710.5" cy="1198.0" r="1.3"/><circle cx="1711.7" cy="1209.8" r="0.7"/><circle cx="1709.1" cy="1208.1" r="1.0"/><circle cx="1708.1" cy="1190.9" r="0.5"/><circle cx="1709.7" cy="1193.2" r="1.4"/><circle cx="1711.9" cy="1198.0" r="0.7"/><circle cx="1711.4" cy="1198.4" r="1.0"/><circle cx="1711.7" cy="1207.2" r="1.0"/><circle cx="1710.1" cy="1201.4" r="0.9"/><circle cx="1712.6" cy="1201.7" r="1.4"/><circle cx="1709.3" cy="1203.1" r="0.9"/><circle cx="1730.7" cy="1210.6" r="0.8"/><circle cx="1733.2" cy="1201.8" r="0.8"/><circle cx="1729.1" cy="1212.0" r="0.5"/><circle cx="1724.0" cy="1226.1" r="1.0"/><circle cx="1721.5" cy="1227.5" r="0.8"/><circle cx="1733.1" cy="1209.7" r="1.0"/><circle cx="1725.6" cy="1220.8" r="1.3"/><circle cx="1734.2" cy="1202.1" r="1.1"/><circle cx="1719.5" cy="1225.9" r="0.9"/><circle cx="1732.1" cy="1208.2" r="0.5"/><circle cx="1732.7" cy="1199.6" r="0.6"/><circle cx="1723.3" cy="1224.0" r="0.8"/><circle cx="1731.1" cy="1202.3" r="1.3"/><circle cx="1728.5" cy="1215.0" r="0.7"/><circle cx="1731.6" cy="1206.7" r="1.3"/><circle cx="1725.5" cy="1221.7" r="0.5"/><circle cx="1793.0" cy="1203.7" r="1.0"/><circle cx="1771.6" cy="1187.2" r="0.6"/><circle cx="1749.5" cy="1180.1" r="0.6"/><circle cx="1780.8" cy="1195.0" r="1.4"/><circle cx="1753.0" cy="1185.7" r="1.5"/><circle cx="1801.9" cy="1208.9" r="1.1"/><circle cx="1751.6" cy="1181.6" r="1.6"/><circle cx="1744.0" cy="1179.7" r="1.2"/><circle cx="1781.2" cy="1193.6" r="1.3"/><circle cx="1765.3" cy="1185.2" r="1.3"/><circle cx="1750.7" cy="1180.5" r="0.7"/><circle cx="1770.3" cy="1186.8" r="1.0"/><circle cx="1782.1" cy="1196.0" r="0.9"/><circle cx="1788.5" cy="1198.3" r="1.2"/><circle cx="1795.2" cy="1204.9" r="0.5"/><circle cx="1802.9" cy="1212.8" r="1.3"/><circle cx="1779.3" cy="1192.9" r="1.2"/><circle cx="1766.1" cy="1188.4" r="1.3"/><circle cx="1796.6" cy="1208.0" r="0.8"/><circle cx="1791.3" cy="1201.7" r="1.4"/><circle cx="1773.7" cy="1189.9" r="1.1"/><circle cx="1797.9" cy="1203.7" r="1.5"/><circle cx="1768.2" cy="1185.5" r="1.2"/><circle cx="1755.0" cy="1182.8" r="1.4"/><circle cx="1749.6" cy="1180.9" r="1.4"/><circle cx="1795.9" cy="1207.3" r="1.6"/><circle cx="1763.0" cy="1184.1" r="1.0"/><circle cx="1775.0" cy="1191.8" r="1.1"/><circle cx="1751.2" cy="1181.9" r="1.4"/><circle cx="1751.0" cy="1184.1" r="0.9"/><circle cx="1967.2" cy="1230.5" r="0.9"/><circle cx="1937.2" cy="1221.6" r="0.8"/><circle cx="1907.9" cy="1207.5" r="0.9"/><circle cx="1950.9" cy="1227.3" r="0.7"/><circle cx="1973.9" cy="1235.1" r="1.0"/><circle cx="1934.5" cy="1219.1" r="0.9"/><circle cx="1937.3" cy="1221.3" r="1.3"/><circle cx="1818.1" cy="1163.6" r="1.3"/><circle cx="1871.8" cy="1193.9" r="1.4"/><circle cx="1824.0" cy="1168.6" r="1.1"/><circle cx="1835.8" cy="1176.8" r="0.6"/><circle cx="1874.7" cy="1193.2" r="0.5"/><circle cx="1841.1" cy="1177.6" r="1.1"/><circle cx="1875.0" cy="1192.3" r="0.9"/><circle cx="1842.5" cy="1180.5" r="1.2"/><circle cx="1930.0" cy="1219.2" r="0.9"/><circle cx="1910.4" cy="1207.0" r="1.0"/><circle cx="1949.9" cy="1224.0" r="0.9"/><circle cx="1941.9" cy="1224.2" r="1.0"/><circle cx="1828.6" cy="1175.7" r="0.7"/><circle cx="1953.2" cy="1226.3" r="1.0"/><circle cx="1872.1" cy="1188.7" r="0.8"/><circle cx="1841.4" cy="1174.8" r="1.0"/><circle cx="1829.0" cy="1168.8" r="1.2"/><circle cx="1892.9" cy="1203.1" r="0.9"/><circle cx="1884.2" cy="1197.1" r="0.8"/><circle cx="1850.8" cy="1180.0" r="0.7"/><circle cx="1944.9" cy="1222.9" r="0.6"/><circle cx="1957.3" cy="1228.9" r="0.6"/><circle cx="1952.9" cy="1226.8" r="0.8"/><circle cx="1901.6" cy="1206.0" r="1.3"/><circle cx="1932.3" cy="1220.5" r="0.8"/><circle cx="1819.3" cy="1164.2" r="1.2"/><circle cx="1956.4" cy="1229.7" r="0.9"/><circle cx="1897.0" cy="1203.1" r="0.8"/><circle cx="1835.9" cy="1171.4" r="1.0"/><circle cx="1828.3" cy="1168.4" r="1.4"/><circle cx="1924.4" cy="1218.4" r="1.1"/><circle cx="1875.3" cy="1191.9" r="0.6"/><circle cx="1822.7" cy="1166.3" r="0.7"/><circle cx="1824.7" cy="1166.2" r="1.4"/><circle cx="1967.1" cy="1230.8" r="1.4"/><circle cx="1922.4" cy="1210.4" r="0.8"/><circle cx="1879.5" cy="1194.1" r="0.6"/><circle cx="1821.5" cy="1166.2" r="1.4"/><circle cx="1816.4" cy="1165.7" r="1.1"/><circle cx="1954.1" cy="1225.1" r="1.5"/><circle cx="1959.8" cy="1228.8" r="1.0"/><circle cx="1852.2" cy="1185.4" r="0.9"/><circle cx="1884.9" cy="1198.5" r="0.8"/><circle cx="1894.7" cy="1204.8" r="1.3"/><circle cx="1970.9" cy="1232.4" r="0.9"/><circle cx="1892.4" cy="1206.3" r="0.6"/><circle cx="1853.2" cy="1182.2" r="0.6"/><circle cx="1875.3" cy="1194.9" r="0.7"/><circle cx="1873.5" cy="1194.0" r="1.0"/><circle cx="1855.0" cy="1187.6" r="1.4"/><circle cx="1878.3" cy="1195.2" r="0.5"/><circle cx="1902.3" cy="1205.1" r="1.0"/><circle cx="1951.7" cy="1225.5" r="0.8"/><circle cx="1944.2" cy="1219.5" r="1.3"/><circle cx="1829.5" cy="1169.5" r="0.8"/><circle cx="1847.2" cy="1182.0" r="0.9"/><circle cx="1977.3" cy="1239.4" r="0.6"/><circle cx="1929.8" cy="1219.2" r="1.0"/><circle cx="1838.3" cy="1177.7" r="0.7"/><circle cx="1957.4" cy="1226.4" r="1.2"/><circle cx="1843.3" cy="1178.8" r="1.4"/><circle cx="1898.9" cy="1203.2" r="0.9"/><circle cx="1925.6" cy="1214.0" r="1.0"/><circle cx="1984.1" cy="1241.2" r="1.9"/><circle cx="1986.8" cy="1238.8" r="0.7"/><circle cx="1986.5" cy="1238.4" r="1.6"/><circle cx="1984.3" cy="1240.4" r="1.6"/><circle cx="1988.7" cy="1242.9" r="0.8"/><circle cx="1814.9" cy="1245.1" r="0.9"/><circle cx="1814.4" cy="1244.3" r="0.7"/><circle cx="1815.4" cy="1245.1" r="1.4"/><circle cx="1815.6" cy="1248.3" r="1.7"/><circle cx="1809.3" cy="1244.9" r="2.1"/><circle cx="1813.5" cy="1248.2" r="1.7"/><circle cx="1847.9" cy="1235.6" r="1.2"/><circle cx="1857.5" cy="1230.1" r="1.2"/><circle cx="1852.1" cy="1235.3" r="0.8"/><circle cx="1859.5" cy="1230.0" r="0.9"/><circle cx="1858.6" cy="1231.5" r="1.1"/><circle cx="1847.6" cy="1237.1" r="1.3"/><circle cx="1847.1" cy="1237.2" r="1.1"/><circle cx="1846.9" cy="1236.4" r="0.9"/><circle cx="1823.3" cy="1182.9" r="1.0"/><circle cx="1822.0" cy="1177.2" r="0.7"/><circle cx="1819.3" cy="1174.4" r="0.5"/><circle cx="1818.9" cy="1179.7" r="0.9"/><circle cx="1820.3" cy="1170.3" r="1.2"/><circle cx="1820.0" cy="1175.8" r="1.0"/><circle cx="1821.0" cy="1174.5" r="1.2"/><circle cx="1822.1" cy="1176.9" r="0.7"/><circle cx="1335.5" cy="1017.7" r="1.2"/><circle cx="1331.2" cy="987.2" r="0.8"/><circle cx="1339.1" cy="1009.8" r="1.3"/><circle cx="1344.3" cy="988.9" r="1.0"/><circle cx="1337.2" cy="1003.0" r="0.5"/><circle cx="1341.0" cy="1001.1" r="1.3"/><circle cx="1333.3" cy="995.4" r="0.6"/><circle cx="1338.0" cy="1000.2" r="0.6"/><circle cx="1335.2" cy="1007.0" r="0.7"/><circle cx="1334.8" cy="994.8" r="0.6"/><circle cx="1337.7" cy="988.7" r="1.0"/><circle cx="1335.0" cy="1021.1" r="0.5"/><circle cx="1335.5" cy="1027.8" r="0.7"/><circle cx="1334.3" cy="992.7" r="0.6"/><circle cx="1331.1" cy="1007.1" r="0.5"/><circle cx="1330.8" cy="997.4" r="0.8"/><circle cx="1337.7" cy="970.7" r="0.8"/><circle cx="1333.5" cy="1022.6" r="1.1"/><circle cx="1328.7" cy="998.5" r="0.8"/><circle cx="1335.8" cy="981.8" r="1.2"/><circle cx="1336.3" cy="1004.9" r="1.2"/><circle cx="1327.7" cy="987.1" r="1.1"/><circle cx="1339.6" cy="1035.6" r="1.4"/><circle cx="1335.2" cy="1038.1" r="0.7"/><circle cx="1342.0" cy="1049.1" r="0.8"/><circle cx="1335.6" cy="1057.2" r="1.5"/><circle cx="1332.2" cy="1039.3" r="0.5"/><circle cx="1336.9" cy="1033.3" r="1.3"/><circle cx="1334.8" cy="1056.7" r="1.0"/><circle cx="1340.0" cy="1034.5" r="1.3"/><circle cx="1343.2" cy="1036.0" r="1.0"/><circle cx="1337.3" cy="1033.4" r="1.5"/><circle cx="1344.4" cy="1040.3" r="1.2"/><circle cx="1347.5" cy="1058.4" r="1.1"/><circle cx="1339.7" cy="1045.2" r="1.3"/><circle cx="1340.4" cy="1031.4" r="0.9"/><circle cx="1339.2" cy="1056.5" r="1.4"/><circle cx="1338.0" cy="1042.8" r="0.7"/><circle cx="1348.3" cy="1108.1" r="1.7"/><circle cx="1343.7" cy="1096.2" r="0.9"/><circle cx="1342.3" cy="1102.3" r="1.0"/><circle cx="1333.8" cy="1104.7" r="1.5"/><circle cx="1341.7" cy="1093.9" r="1.6"/><circle cx="1336.8" cy="1106.1" r="1.6"/><circle cx="1340.0" cy="1101.7" r="1.9"/><circle cx="1331.9" cy="1101.5" r="1.6"/><circle cx="1342.5" cy="1095.1" r="1.6"/><circle cx="1346.7" cy="1112.1" r="1.1"/><circle cx="1337.2" cy="1100.9" r="0.6"/><circle cx="1335.7" cy="1102.5" r="1.4"/><circle cx="1343.0" cy="1099.9" r="1.6"/><circle cx="1330.8" cy="1094.4" r="1.6"/><circle cx="1326.8" cy="1101.5" r="0.7"/><circle cx="1334.9" cy="1091.1" r="0.8"/><circle cx="1337.6" cy="1164.5" r="1.5"/><circle cx="1330.1" cy="1150.1" r="1.8"/><circle cx="1333.6" cy="1146.8" r="1.9"/><circle cx="1341.1" cy="1141.5" r="1.6"/><circle cx="1333.9" cy="1145.3" r="2.0"/><circle cx="1335.3" cy="1146.5" r="1.7"/><circle cx="1334.4" cy="1150.9" r="1.8"/><circle cx="1336.8" cy="1156.2" r="0.6"/><circle cx="1329.8" cy="1149.0" r="1.7"/><circle cx="1346.0" cy="1146.4" r="1.5"/><circle cx="1326.4" cy="1158.3" r="0.8"/><circle cx="1333.4" cy="1157.1" r="1.1"/><circle cx="1334.1" cy="851.7" r="0.8"/><circle cx="1337.1" cy="852.2" r="0.8"/><circle cx="1335.6" cy="850.9" r="0.7"/><circle cx="573.2" cy="1064.3" r="1.1"/><circle cx="570.7" cy="1085.8" r="1.0"/><circle cx="579.1" cy="1089.4" r="0.9"/><circle cx="559.9" cy="1061.9" r="1.2"/><circle cx="579.5" cy="1104.8" r="1.1"/><circle cx="567.8" cy="1113.4" r="0.9"/><circle cx="575.7" cy="1090.8" r="1.1"/><circle cx="568.8" cy="1116.4" r="0.9"/><circle cx="574.1" cy="1005.6" r="0.6"/><circle cx="573.7" cy="1087.5" r="0.9"/><circle cx="576.8" cy="1048.2" r="0.8"/><circle cx="579.7" cy="1041.6" r="1.1"/><circle cx="569.0" cy="1081.1" r="1.0"/><circle cx="573.7" cy="1090.1" r="0.6"/><circle cx="582.4" cy="1075.3" r="0.5"/><circle cx="574.1" cy="1022.7" r="0.5"/><circle cx="577.7" cy="1088.3" r="0.9"/><circle cx="572.3" cy="1045.0" r="0.7"/><circle cx="565.6" cy="1097.9" r="1.2"/><circle cx="587.2" cy="1008.0" r="1.1"/><circle cx="568.4" cy="1095.3" r="1.1"/><circle cx="578.5" cy="1074.0" r="1.1"/><circle cx="572.8" cy="1101.0" r="0.8"/><circle cx="580.0" cy="1060.7" r="1.1"/><circle cx="579.8" cy="1030.0" r="0.7"/><circle cx="576.1" cy="1081.0" r="0.9"/><circle cx="2103.1" cy="1034.4" r="1.1"/><circle cx="2105.2" cy="797.5" r="0.9"/><circle cx="2094.4" cy="994.7" r="0.8"/><circle cx="2102.6" cy="964.7" r="1.1"/><circle cx="2094.4" cy="1118.8" r="0.6"/><circle cx="2100.9" cy="992.1" r="0.6"/><circle cx="2088.7" cy="946.2" r="1.0"/><circle cx="2090.1" cy="1061.9" r="0.6"/><circle cx="2095.7" cy="1051.0" r="0.7"/><circle cx="2102.0" cy="1012.8" r="0.9"/><circle cx="2093.8" cy="960.5" r="0.9"/><circle cx="2092.7" cy="1111.3" r="0.5"/><circle cx="2099.8" cy="851.4" r="0.9"/><circle cx="2086.9" cy="849.2" r="0.6"/><circle cx="2103.9" cy="1046.8" r="1.0"/><circle cx="2091.3" cy="982.0" r="0.8"/><circle cx="2086.1" cy="1035.4" r="0.5"/><circle cx="2096.5" cy="974.4" r="1.1"/><circle cx="2097.2" cy="1125.0" r="0.7"/><circle cx="2093.2" cy="937.8" r="1.2"/><circle cx="2090.9" cy="1014.4" r="0.9"/><circle cx="2098.0" cy="1166.6" r="0.7"/><circle cx="2100.4" cy="1038.9" r="1.0"/><circle cx="2104.6" cy="946.3" r="1.2"/><circle cx="2100.0" cy="1143.9" r="1.0"/><circle cx="2098.6" cy="1030.0" r="0.8"/><circle cx="2091.9" cy="1039.8" r="1.0"/><circle cx="2098.6" cy="1053.2" r="0.7"/><circle cx="2101.4" cy="1064.1" r="0.9"/><circle cx="2097.5" cy="1037.5" r="1.0"/><circle cx="2108.4" cy="1140.5" r="1.2"/><circle cx="2100.1" cy="1122.7" r="1.4"/><circle cx="2108.3" cy="1124.7" r="1.1"/><circle cx="2098.8" cy="1107.5" r="1.3"/><circle cx="2099.8" cy="1146.7" r="1.6"/><circle cx="2097.6" cy="1113.3" r="0.8"/><circle cx="2092.1" cy="1140.6" r="1.4"/><circle cx="2094.8" cy="1136.8" r="0.9"/><circle cx="2095.6" cy="1121.0" r="1.5"/><circle cx="2097.0" cy="1132.5" r="1.2"/><circle cx="2100.5" cy="1129.6" r="1.0"/><circle cx="2102.2" cy="1103.1" r="0.8"/></g>
</g>
<svg x="591.600" y="749.600" width="729.600" height="409.400" viewBox="98 92 2264 1270" preserveAspectRatio="none">
<defs>
<linearGradient id="lwall" x1="0" x2="1"><stop offset="0" stop-color="#dcd8c6"/><stop offset=".35" stop-color="#efead9"/><stop offset=".8" stop-color="#ece5d0"/><stop offset="1" stop-color="#d8d0b8"/></linearGradient>
<radialGradient id="lskin" cx=".42" cy=".3" r=".75"><stop offset="0" stop-color="#f2e0d6"/><stop offset=".55" stop-color="#e5cabd"/><stop offset="1" stop-color="#c4a194"/></radialGradient>
<filter id="pb"><feGaussianBlur stdDeviation="4.500"/></filter><filter id="pb2"><feGaussianBlur stdDeviation="9"/></filter>
<clipPath id="lclip"><rect x="98" y="92" width="2264" height="1270"/></clipPath>
</defs>
<g clip-path="url(#lclip)">
<rect x="98" y="92" width="2264" height="1270" fill="url(#lwall)"/>
<g filter="url(#pb)">
<!-- painting 1 -->
<rect x="104" y="86" width="564" height="376" fill="#b8895c"/><rect x="118" y="92" width="538" height="358" fill="#a7a9aa"/>
<path d="M185 92L640 92L640 440L560 440L360 330L230 380L215 290L150 210z" fill="#17171a"/>
<path d="M118 330L330 450L118 450z" fill="#8f9295"/><path d="M215 290L360 330L330 400L235 380z" fill="#2e3a52"/>
<path d="M180 190L235 135L290 160L285 230L250 215L215 200z" fill="#efefe9"/><path d="M365 215L395 92L425 92L385 220z" fill="#e8e8e2"/>
<path d="M305 280L345 240L420 245L585 320L565 372L420 305L355 335L320 320z" fill="#f2f2ec"/>
<!-- painting 2 -->
<rect x="803" y="180" width="314" height="310" fill="#b15843"/><rect x="813" y="190" width="294" height="290" fill="#efe8d5"/>
<ellipse cx="965" cy="322" rx="92" ry="80" fill="#d9b9a2"/><ellipse cx="940" cy="300" rx="40" ry="50" fill="#c9a06a"/><ellipse cx="1000" cy="340" rx="42" ry="48" fill="#b8c2c8"/><ellipse cx="1010" cy="280" rx="30" ry="28" fill="#d98a78"/><ellipse cx="925" cy="365" rx="26" ry="22" fill="#8fb0b8"/>
<!-- painting 3 frame behind head -->
<rect x="1183" y="166" width="484" height="480" fill="#1d1d1f"/><rect x="1193" y="176" width="464" height="460" fill="#f2eee2"/>
<rect x="1120" y="92" width="572" height="16" fill="#2a2a2c"/><rect x="1800" y="92" width="150" height="8" fill="#555"/>
<!-- painting 4 -->
<rect x="1738" y="226" width="182" height="390" fill="#3f8f8c"/><rect x="1738" y="226" width="182" height="130" fill="#5b6e6c"/><path d="M1770 250l45 0l20 95l-70 0z" fill="#2f3b3c"/><path d="M1835 480l25 0l10 120l-40 0z" fill="#1f2d33"/><path d="M1850 360L1905 360L1918 610L1900 610z" fill="#7fbab4" opacity=".6"/>
<!-- right side: door frame, post -->
<rect x="2075" y="92" width="110" height="520" fill="#9a7848"/><rect x="2170" y="92" width="192" height="440" fill="#d9dad6"/><rect x="2240" y="190" width="122" height="260" fill="#b9bdbb"/><rect x="2170" y="92" width="60" height="440" fill="#8e9290"/>
<!-- packages -->
<rect x="1950" y="435" width="140" height="130" fill="#2b3f6b"/><path d="M2065 365l130 0l10 190l-120 0z" fill="#b0803e"/><rect x="2200" y="430" width="162" height="100" fill="#c9c5bd"/><rect x="2200" y="458" width="162" height="22" fill="#d9743a"/>
<!-- coffee machine -->
<path d="M1985 545L2362 530L2362 965L2115 965L2115 760L1985 760z" fill="#1b1b1d"/><rect x="2015" y="700" width="80" height="60" fill="#d8d6cf"/><rect x="1990" y="760" width="125" height="200" fill="#cfcabb"/><rect x="2210" y="750" width="20" height="150" fill="#4a6ab0" opacity=".7"/>
<!-- cabinet -->
<rect x="2080" y="960" width="282" height="410" fill="#b98a52"/><rect x="2080" y="960" width="282" height="36" fill="#c99c64"/><rect x="2080" y="1040" width="282" height="6" fill="#8a6234"/>
<!-- desk at left -->
<rect x="98" y="955" width="760" height="60" fill="#cfcfca"/><rect x="98" y="1010" width="760" height="130" fill="#a9abad"/><rect x="175" y="1060" width="8" height="80" fill="#77797c"/>
<path d="M560 960l220 -8l-10 40l-200 5z" fill="#ddd6c6"/><rect x="265" y="958" width="100" height="28" fill="#e4ded6"/>
<!-- synth -->
<rect x="98" y="728" width="208" height="250" fill="#3b3e40"/><rect x="98" y="905" width="150" height="100" fill="#232427"/><rect x="205" y="680" width="22" height="60" fill="#b9975a"/><path d="M98 690c60 0 110 20 130 60" stroke="#222" stroke-width="8" fill="none"/>
<circle cx="140" cy="800" r="9" fill="#887"/><circle cx="190" cy="800" r="9" fill="#887"/><circle cx="140" cy="850" r="9" fill="#887"/><circle cx="190" cy="850" r="9" fill="#887"/>
</g>
<!-- person -->
<g filter="url(#pb)">
<!-- hoodie body -->
<path d="M790 1130C860 1000 960 850 1150 780C1200 700 1250 660 1330 650L1640 650C1720 680 1800 760 1880 840C2050 900 2200 1100 2340 1362L98 1362L98 1130z" fill="#0f0f13"/>
<rect x="98" y="1130" width="700" height="240" fill="#0f0f13" opacity="0"/>
<!-- white stripes -->
<path d="M1150 785L1205 870L900 1130L790 1130C860 1010 960 860 1150 785z" fill="#f1f1ee"/>
<path d="M1835 845C2000 880 2180 1080 2335 1340L2230 1362L2080 1362C2000 1180 1900 1000 1745 935z" fill="#f1f1ee"/>
<g fill="#0f0f13"><path d="M1080 850l60 -40l35 50l-60 40z"/><path d="M985 935l60 -45l30 45l-60 45z"/><path d="M900 1030l55 -50l30 40l-55 50z"/><path d="M830 1115l50 -50l25 35l-35 30z"/>
<path d="M1870 900l70 25l-20 50l-70 -30z"/><path d="M1975 975l65 45l-30 45l-65 -45z"/><path d="M2070 1075l55 60l-40 35l-55 -60z"/><path d="M2150 1190l45 70l-45 25l-45 -70z"/><path d="M2215 1300l30 55l-50 10l-25 -45z"/></g>
<!-- neck -->
<path d="M1330 720L1620 720L1600 900L1470 1010L1350 900z" fill="#dcc0b3"/>
<path d="M1345 900C1400 960 1540 960 1600 880" stroke="#222" stroke-width="10" fill="none"/>
<!-- hood inner -->
<path d="M1200 720C1250 640 1300 640 1340 650L1360 900L1470 1020L1600 900L1640 650C1720 680 1760 740 1790 800L1560 1130L1400 1130z" fill="#121216"/>
<path d="M1340 700L1610 700L1595 895L1470 1005L1352 895z" fill="#e0c6ba"/>
<path d="M1350 895C1400 950 1540 950 1597 880" stroke="#26262a" stroke-width="9" fill="none"/>
<!-- head -->
<ellipse cx="1212" cy="590" rx="34" ry="75" fill="#d9b4a6"/><ellipse cx="1668" cy="540" rx="30" ry="78" fill="#d2ab9c"/>
<path d="M1180 400C1180 230 1290 135 1420 135C1560 135 1660 240 1660 410C1690 430 1680 520 1650 560C1640 700 1560 800 1450 800C1340 800 1250 700 1215 600C1180 560 1165 460 1180 400z" fill="url(#lskin)"/>
<!-- beard -->
<path d="M1290 600C1330 570 1420 560 1480 575C1540 560 1600 580 1640 560C1640 700 1560 802 1450 802C1360 802 1300 720 1290 600z" fill="#dbd3cd"/>
<path d="M1330 610C1400 570 1520 570 1600 600C1540 590 1400 595 1330 610z" fill="#cf9f7c" opacity=".8"/><path d="M1390 640C1430 625 1520 625 1560 640C1520 655 1430 655 1390 640z" fill="#bf9486"/>
<!-- glasses -->
<path d="M1215 445L1400 405L1440 400L1630 360" stroke="#222428" stroke-width="14" fill="none"/>
<path d="M1225 450C1225 500 1400 500 1405 420M1450 410C1460 480 1630 440 1625 370" stroke="#4a4a50" stroke-width="5" fill="none"/>
<path d="M1232 452L1400 415L1398 470C1340 505 1250 505 1232 452z" fill="#c3d0d3" opacity=".7"/><path d="M1452 405L1622 368L1612 430C1560 470 1470 470 1452 405z" fill="#c3d0d3" opacity=".7"/><ellipse cx="1320" cy="452" rx="30" ry="17" fill="#5a8096"/><ellipse cx="1535" cy="410" rx="30" ry="17" fill="#4e7088"/>
<path d="M1240 400C1290 360 1360 360 1400 380" stroke="#c48c62" stroke-width="12" fill="none"/><path d="M1450 365C1500 335 1580 330 1620 345" stroke="#c48c62" stroke-width="12" fill="none"/>
<path d="M1420 440C1400 520 1390 560 1440 570C1470 572 1490 560 1490 545" stroke="#c4947a" stroke-width="8" fill="none"/>
</g>
</g></svg>
<svg x="1353" y="749.600" width="728.400" height="409.400" viewBox="40 92 2260 1270" preserveAspectRatio="none">
<defs>
<linearGradient id="bam" x1="0" x2="0" y1="0" y2="1"><stop offset="0" stop-color="#7a5418"/><stop offset=".35" stop-color="#d9a243"/><stop offset=".7" stop-color="#a87424"/><stop offset="1" stop-color="#5a3c10"/></linearGradient>
<linearGradient id="bamv" x1="0" x2="1"><stop offset="0" stop-color="#7a5a24"/><stop offset=".45" stop-color="#cda255"/><stop offset="1" stop-color="#6a4a1c"/></linearGradient>
<radialGradient id="rskin" cx=".45" cy=".4" r=".7"><stop offset="0" stop-color="#edc9b5"/><stop offset=".55" stop-color="#dcae97"/><stop offset="1" stop-color="#b0806a"/></radialGradient>
<clipPath id="rclip"><rect x="40" y="92" width="2260" height="1270"/></clipPath>
</defs>
<g clip-path="url(#rclip)">
<rect x="40" y="92" width="2260" height="1270" fill="#0b0b0b"/>
<g filter="url(#pb)">
<!-- left wall -->
<rect x="40" y="92" width="660" height="1270" fill="#6a594c"/>
<path d="M40 92L640 92L640 300L40 300z" fill="#5f5148"/><path d="M180 92L360 280L330 300L120 92z" fill="#3b2a20"/>
<path d="M40 290L640 300L640 600L330 500L40 500z" fill="#d3c8b0"/><rect x="330" y="480" width="300" height="660" fill="#cfc4ac"/>
<path d="M470 350l150 0l0 60l-60 10l-20 40l-70 0z" fill="#a89c88"/>
<rect x="40" y="492" width="290" height="650" fill="#3b2318"/><rect x="60" y="520" width="240" height="600" fill="#4a2c1e"/>
<rect x="382" y="600" width="232" height="312" fill="#1f1a16"/><rect x="410" y="630" width="180" height="250" fill="#cdbf9e"/><ellipse cx="510" cy="760" rx="50" ry="90" fill="#8a7a5a"/>
<rect x="352" y="950" width="232" height="190" fill="#1f1a16"/><rect x="385" y="985" width="170" height="150" fill="#c9c3a8"/><rect x="410" y="1020" width="120" height="100" fill="#6f8a5f"/>
<!-- bamboo frame -->
<rect x="555" y="132" width="1745" height="80" fill="url(#bam)"/><rect x="600" y="214" width="460" height="56" fill="url(#bam)"/>
<rect x="598" y="214" width="104" height="840" fill="url(#bamv)"/><rect x="2245" y="132" width="55" height="1230" fill="#3d2c14"/><rect x="2245" y="132" width="55" height="330" fill="#6a4c20"/>
<rect x="1500" y="100" width="800" height="40" fill="#4a3414"/>
<path d="M2023 380L2244 631M2025 413L2215 631M2026 446L2185 631M2028 479L2156 631M2029 513L2127 631M2031 546L2098 631M2032 579L2069 631M2034 612L2039 631" stroke="#b5af9c" stroke-width="5" stroke-opacity="0.8" fill="none" stroke-linecap="round"/><path d="M1809 649L1922 845M1845 649L1948 828M1880 649L1974 812M1915 649L2000 795M1951 649L2025 778M1986 649L2051 762M2022 649L2077 745M2057 649L2103 729" stroke="#a9a390" stroke-width="5.5" stroke-opacity="0.8" fill="none" stroke-linecap="round"/><path d="M1558 993L1639 771M1599 993L1680 771M1639 993L1720 771M1680 993L1761 771M1720 993L1802 771M1761 993L1842 771M1802 993L1883 771M1809 801L1846 1015M1845 823L1881 1015M1880 845L1917 1015M1915 867L1952 1015M1951 889L1988 1015" stroke="#8a8472" stroke-width="5.5" stroke-opacity="0.75" fill="none" stroke-linecap="round"/><path d="M2097 1044L2237 771M2090 971L2193 771M2082 889L2141 801M2141 1044L2260 808M2186 1044L2278 860M2237 1022L2289 919" stroke="#9a947f" stroke-width="5" stroke-opacity="0.7" fill="none" stroke-linecap="round"/><path d="M720 300l-60 420M745 300l-60 420M771 300l-60 420M796 300l-60 420M822 300l-60 420M847 300l-60 420M873 300l-60 420M898 300l-60 420M924 300l-60 420M949 300l-60 420M975 300l-60 420M1000 300l-60 420" stroke="#2c2b28" stroke-width="7" fill="none"/><path d="M760 700l60 330M787 684l60 330M813 669l60 330M840 653l60 330M867 638l60 330M893 622l60 330M920 607l60 330M947 591l60 330M973 576l60 330M1000 560l60 330" stroke="#302f2b" stroke-width="7" fill="none"/><path d="M1700 320l60 140M1707 360l60 140M1714 400l60 140M1721 440l60 140M1729 480l60 140M1736 520l60 140M1743 560l60 140M1750 600l60 140" stroke="#2a2927" stroke-width="6" fill="none"/>
</g>
<g filter="url(#pb)">
<!-- jacket -->
<path d="M590 1130C700 1040 900 1000 1050 900L1100 1362L40 1362L40 1130z" fill="#4b433c"/>
<path d="M1500 960C1700 1000 1960 1100 2060 1362L1400 1362z" fill="#4d453e"/>
<path d="M590 1130C700 1040 900 1000 1060 880L1060 1362L590 1362z" fill="#463e38"/>
<!-- shirt -->
<path d="M1045 880L1100 1000L1300 1140L1500 960L1520 1362L1045 1362z" fill="#6f93da"/>
<path d="M1200 1180L1300 1140L1340 1362L1220 1362z" fill="#86a8ea"/><path d="M1045 880L1120 1130L1230 1260L1300 1140z" fill="#7d9fe4"/><path d="M1500 950L1520 1180L1420 1280L1300 1140z" fill="#6588cf"/>
<!-- neck -->
<path d="M1120 880L1500 900L1480 1000L1300 1140L1120 1010z" fill="#d3a68f"/>
<!-- headphones -->
<rect x="955" y="400" width="95" height="370" rx="40" fill="#15130f"/><rect x="1610" y="420" width="90" height="350" rx="40" fill="#191714"/>
<!-- hair -->
<path d="M1000 560C960 300 1100 120 1330 130C1560 120 1720 300 1680 600C1650 500 1600 400 1560 330C1450 300 1250 280 1130 340C1080 400 1040 480 1040 620z" fill="#6e5038"/>
<path d="M1230 150C1300 110 1500 130 1580 230C1500 200 1350 200 1230 150z" fill="#94744f"/>
<!-- face -->
<path d="M1050 560C1050 400 1130 310 1330 300C1520 310 1600 420 1600 580C1610 760 1560 900 1480 990C1400 1060 1260 1060 1180 990C1090 900 1050 740 1050 560z" fill="url(#rskin)"/>
<!-- beard -->
<path d="M1070 720C1120 780 1180 790 1240 770C1300 740 1380 740 1440 770C1500 790 1560 770 1590 700C1600 840 1560 940 1480 1000C1400 1060 1260 1060 1180 1000C1100 930 1070 840 1070 720z" fill="#8a6049"/>
<path d="M1180 790C1240 750 1400 750 1470 790C1430 770 1220 770 1180 790z" fill="#7a5240"/>
<path d="M1225 850C1280 830 1360 830 1420 850C1380 880 1270 880 1225 850z" fill="#d8a99a"/>
<!-- eyes/brows -->
<path d="M1140 560C1190 530 1250 530 1290 560" stroke="#6a4630" stroke-width="16" fill="none"/><path d="M1400 560C1440 530 1510 530 1550 560" stroke="#6a4630" stroke-width="16" fill="none"/>
<ellipse cx="1220" cy="600" rx="36" ry="12" fill="#4a3628"/><ellipse cx="1470" cy="600" rx="36" ry="12" fill="#4a3628"/>
<path d="M1330 600C1320 680 1290 720 1330 740C1370 745 1400 730 1400 715" stroke="#b98566" stroke-width="10" fill="none"/>
</g>
</g></svg>
<path d="M591.400 1084.800H987a5 5 0 0 1 5 5V1159.500H591.400z" fill="#194682"/>
<path d="M1353 1084.800H1648.500a5 5 0 0 1 5 5V1159.500H1353z" fill="#194682"/>
</g>
</svg>
<div class="t" style="left:610.3px;top:1107.6px;font-size:31px;font-weight:700;color:#fff;letter-spacing:0.318px;">Michael Meyer-Hermann</div>
<div class="t" style="left:1371.0px;top:1107.6px;font-size:31px;font-weight:700;color:#fff;letter-spacing:0.518px;">Maximilian Mayer</div>
<svg style="position:absolute;left:1680px;top:550px" width="390" height="90" viewBox="1680 550 390 90"><g transform="translate(1679.003 335.829) scale(0.6852)">
<clipPath id="vl1"><rect x="194.100" y="322.200" width="111.600" height="110.100"/></clipPath><clipPath id="vl2"><rect x="317" y="322.200" width="111.900" height="110.100"/></clipPath><clipPath id="vl3"><rect x="440" y="322.200" width="111.400" height="110.100"/></clipPath>
<rect x="194.100" y="322.200" width="111.600" height="110.100" fill="#fff"/>
<rect x="194.100" y="397.100" width="111.600" height="4.500" fill="#05070c"/>
<circle clip-path="url(#vl1)" cx="180.590" cy="296.670" r="89.950" fill="none" stroke="#05070c" stroke-width="4.500"/>
<rect x="317" y="322.200" width="111.900" height="110.100" fill="#fff"/>
<path clip-path="url(#vl2)" d="M376.500 314C377 330 381 342 390 352C400 363 412 369 421 379C427 386 430 396 431 408" fill="none" stroke="#111" stroke-width="12"/>
<rect x="440" y="322.200" width="111.400" height="110.100" fill="#fff"/>
<g clip-path="url(#vl3)" fill="none" stroke="#111" stroke-width="10.600"><path d="M492 314.200L553.300 375.500L522.400 406.400"/><path d="M432 376.600L496 440.600"/></g>
</g></svg>
<div class="t" style="left:1691.1px;top:614.2px;font-size:18.16px;font-weight:400;color:#fff;letter-spacing:-0.318px;">UNIVERSITÄT</div>
<div class="t" style="left:1815.6px;top:614.2px;font-size:18.16px;font-weight:400;color:#05070c;letter-spacing:-0.167px;-webkit-text-stroke:0.31px #05070c;">BONN</div>
<div class="t" style="left:1903.5px;top:600.8px;font-size:6.78px;font-weight:700;color:#222;letter-spacing:0.232px;">INTERNATIONAL</div>
<div class="t" style="left:1903.5px;top:608.5px;font-size:11.8px;font-weight:700;color:#222;letter-spacing:-0.260px;">SECURITY</div>
<div class="t" style="left:1903.5px;top:620.7px;font-size:7.95px;font-weight:700;color:#222;letter-spacing:0.307px;">FORUM BONN</div>
<div class="t" style="left:1993.5px;top:587.4px;font-size:13.96px;font-weight:700;color:#111;letter-spacing:-0.307px;">CASSIS</div>
<svg style="position:absolute;left:560px;top:1440px" width="1554" height="70" viewBox="560 1440 1554 70" fill="#fff">
<rect x="618" y="1456" width="11" height="36.700"/><rect x="639" y="1456" width="11" height="36.700"/>
<circle cx="689.600" cy="1474" r="6" fill="#e8503e"/>
<rect x="1640" y="1452.700" width="48" height="42.300" rx="6"/>
<path d="M1724 1465h10l14 -13v44l-14 -13h-10z"/><path d="M1754 1463.500a12 12 0 0 1 0 21z"/><path d="M1754 1452.500a22.500 22.500 0 0 1 0 43" fill="none" stroke="#fff" stroke-width="4.500"/>
<rect x="1794.700" y="1471.200" width="198" height="5.600" rx="2.800"/><circle cx="1981.700" cy="1474" r="12"/>
<path d="M2024.200 1470v-11.400h11.400M2045.700 1458.600h11.400v11.400M2057.100 1479v11.400h-11.400M2035.600 1490.400h-11.400v-11.400" fill="none" stroke="#fff" stroke-width="5.200"/>
</svg>
<div class="t" style="left:705.0px;top:1462.6px;font-size:26.51px;font-weight:400;color:#fff;letter-spacing:-0.583px;">LIVE</div>
<div class="t" style="left:1647.0px;top:1460.5px;font-size:26.56px;font-weight:700;color:#000;letter-spacing:1.328px;font-family:'Liberation Mono',monospace;">HQ</div>
<div style="position:absolute;left:1637px;top:1542.300px;width:442px;height:90.400px;border-radius:46px;border:2px solid #dcdcdc;box-sizing:border-box;background:linear-gradient(180deg,#fff 45%,#f1f1f1)"></div>
<svg style="position:absolute;left:1655px;top:1560.5px" width="54" height="54" viewBox="0 0 36 36"><g fill="none" stroke="#F4803E" stroke-width="2" stroke-linecap="round"><path d="M27.200 1L25.900 4.400M34.200 1.800L30.300 6.100M35.400 8.400L32.200 9.800M4 26.100L.8 27.600M5.700 30.300L1.400 34.800M9.900 31.800L8.700 35.200"/></g>
<g transform="translate(-2 1.800)"><g stroke="#EF9645" stroke-linecap="round" fill="none" stroke-width="5.300"><path d="M12.400 3.800L24 15.400M9 6.300L21 18.300M6.300 10.500L18 22.200M4.600 15.500L15 25.900"/></g><path d="M11 21L22 10 33 17c3 5 3 10 0 14s-9 5.500-14 3z" fill="#EF9645"/></g>
<g stroke="#FFDC5D" stroke-linecap="round" fill="none" stroke-width="5.300"><path d="M12.400 3.800L24 15.400M9 6.300L21 18.300M6.300 10.500L18 22.200M4.600 15.500L15 25.900"/><path d="M23.600 7L28.500 15" stroke-width="5"/></g>
<path d="M12 23L23 12l6-1 5 7c2.500 5 2 10-1 13.500s-9 5-14 2.500z" fill="#FFDC5D"/>
<g fill="none" stroke="#E9963F" stroke-width=".8" stroke-linecap="round"><path d="M9.200 3.300L19.600 13.700M6.600 7.700L15.800 16.900M4.500 12L13.200 20.700M19.500 5.900L25.700 13"/></g></svg>
<svg style="position:absolute;left:1743px;top:1561px" width="54" height="54" viewBox="0 0 36 36"><path fill="#D63648" d="M35.885 11.833c0-5.450-4.418-9.868-9.867-9.868-3.308 0-6.227 1.633-8.018 4.129-1.791-2.496-4.710-4.129-8.017-4.129-5.450 0-9.868 4.417-9.868 9.868 0 .772.098 1.520.266 2.241C1.751 22.587 11.216 31.568 18 34.034c6.783-2.466 16.249-11.447 17.617-19.959.17-.721.268-1.469.268-2.242z"/></svg>
<svg style="position:absolute;left:1832.6px;top:1560.6px" width="54" height="54" viewBox="0 0 36 36"><path d="M12.800.4c2.600-.5 4.100 1.300 3.900 4-.2 2.700-.9 5.300-.6 7.900H29c2.500 0 4.300 1.700 4.300 4 0 1.300-.5 2.300-1.300 3 1 .8 1.600 1.900 1.600 3.200 0 1.500-.8 2.700-2 3.400.7.700 1.100 1.700 1.100 2.700 0 1.500-.9 2.700-2.200 3.300.3.500.5 1.100.5 1.700 0 1.500-1.300 2.400-3 2.400H6.500C3.500 36 1.500 34 1.500 31V20.500c0-1.800 1-3 2.600-3.600 2.900-1.200 5.200-3.900 5.800-7.400.4-2.600.3-5.100.6-7.100.2-1.100 1.100-1.800 2.300-2z" fill="#FFDC5D"/>
<g fill="none" stroke="#EE9547" stroke-width="1.400" stroke-linecap="round"><path d="M27.500 14.900h-6c-3.200 0-3.200 5 0 5h10.500M32 19.900h-10.300c-3.300 0-3.300 5.200 0 5.200H31M31 25.100h-9c-3.300 0-3.300 5.200 0 5.200h8.500M30 30.300h-7.500c-3.200 0-3.200 5.100 0 5.100h6.500"/></g></svg>
<svg style="position:absolute;left:1919.2px;top:1560.6px" width="54" height="54" viewBox="0 0 36 36"><g transform="rotate(-48 18 18)"><circle cx="18" cy="18" r="18" fill="#FFCC4D"/>
<path d="M5.500 18.500c3 2 8 3 12.500 3s9.500-1 12.500-3c.8-.5 1.500 0 1.400 1C31 27.500 25.500 33 18 33S5 27.500 4.100 19.500c-.1-1 .6-1.500 1.400-1z" fill="#65471B"/>
<path d="M7 21.800c3 1.500 7 2.200 11 2.200s8-.7 11-2.200c-.5 2.500-5 4.700-11 4.700S7.500 24.300 7 21.800z" fill="#fff"/>
<path d="M6.500 10.500l6.200 3-6.200 3.200M29.500 10.500l-6.200 3 6.200 3.200" fill="none" stroke="#65471B" stroke-width="2.300" stroke-linecap="round" stroke-linejoin="round"/></g>
<path d="M21.300 7.600c3-3.600 8.500-5.600 12-4.200 2.600 1 3.300 4.300 1.500 6.800-2 2.700-6 3-9.500 1.300-1.700-.8-3-2.100-4-3.900z" fill="#5DADEC"/>
<path d="M6.200 21c3.200 2.600 5.300 7 4.600 10.600-.5 2.800-3.200 4.400-5.900 3.600-3-.9-4-4.300-3-7.700.6-2 2.100-4.300 4.300-6.500z" fill="#5DADEC"/></svg>
<svg style="position:absolute;left:2007px;top:1561px" width="54" height="54" viewBox="0 0 36 36"><circle fill="#FFCC4D" cx="18" cy="18" r="18"/><ellipse fill="#664500" cx="18" cy="25" rx="4" ry="5"/><ellipse fill="#664500" cx="12" cy="13.500" rx="2.500" ry="3.500"/><ellipse fill="#664500" cx="24" cy="13.500" rx="2.500" ry="3.500"/></svg>
<svg width="0" height="0" style="position:absolute"><defs><filter id="avb" x="-10%" y="-10%" width="120%" height="120%"><feGaussianBlur stdDeviation=".55"/></filter></defs></svg>
<div style="position:absolute;left:2114px;top:377px;width:760px;height:1266px;background:#fff;border-radius:0 0 20px 0"></div>
<div style="position:absolute;left:2306px;top:273px;width:560px;height:94px;background:#fff;border-radius:4px;box-shadow:0 2px 8px rgba(0,0,0,.28),0 0 2px rgba(0,0,0,.2)"></div>
<div class="t" style="left:2322.0px;top:281.0px;font-size:20.64px;font-weight:400;color:#6e6e6e;letter-spacing:-0.454px;">Currently playing</div>
<div class="t" style="left:2322.0px;top:309.0px;font-size:27.22px;font-weight:700;color:#1c1c1c;letter-spacing:-0.599px;">Digital Dinner</div>
<svg style="position:absolute;left:2814px;top:308px" width="24" height="24" viewBox="0 0 24 24"><path d="M1.500 1.500l21 21M22.500 1.500l-21 21" stroke="#1c1c1c" stroke-width="3.400" fill="none"/></svg>
<div style="position:absolute;left:2857px;top:642px;width:13px;height:889px;border-radius:7px;background:#dfe0e0"></div>
<svg style="position:absolute;left:2130px;top:380.0px" width="56" height="56" viewBox="0 0 56 56"><defs><clipPath id="av0"><circle cx="28" cy="28" r="28"/></clipPath></defs><g clip-path="url(#av0)"><rect width="56" height="56" fill="#e3dfd6"/><g filter="url(#avb)">
<path d="M2 56L10 46 20 50 36 50 48 44 56 50V56z" fill="#f3f1ee"/><path d="M0 56L8 45 13 49 9 56zM44 56l6-10 6 4v6z" fill="#3b3f48"/>
<ellipse cx="28.500" cy="28" rx="17.500" ry="22" fill="#b88060"/><ellipse cx="31" cy="31" rx="11" ry="13" fill="#c89272"/>
<path d="M7 26C4 10 14 1 27 1c11 0 19 5 20 15-6-5-14-6-22-4-8 2-13 6-15 16z" fill="#2a1e19"/>
<ellipse cx="9" cy="27" rx="3" ry="5" fill="#a36c50"/>
<path d="M12 24h34" stroke="#3a2c26" stroke-width="1.500"/><rect x="14" y="21" width="13" height="8" rx="3.500" fill="none" stroke="#3a2c26" stroke-width="1.700"/><rect x="31" y="21" width="13" height="8" rx="3.500" fill="none" stroke="#3a2c26" stroke-width="1.700"/>
<path d="M22 35c5 3 13 3 18-1-2 6-14 8-18 1z" fill="#f6efe8"/><path d="M19 33c2 2 3 3 3 2M41 32c1 1 1 2 0 3" stroke="#8a5438" stroke-width="1" fill="none"/></g></g></svg>
<div class="t" style="left:2202.5px;top:395.9px;font-size:27.33px;font-weight:700;color:#202020;letter-spacing:-0.601px;">Rogelio Madrueño</div>
<div class="t" style="left:2441.0px;top:400.8px;font-size:21.5px;font-weight:400;color:#8a8a8a;letter-spacing:-0.320px;">15:31</div>
<div class="t" style="left:2503.5px;top:395.3px;font-size:28px;font-weight:400;color:#202020;letter-spacing:-0.542px;">Thank you.</div>
<svg style="position:absolute;left:2130px;top:451.5px" width="56" height="56" viewBox="0 0 56 56"><defs><clipPath id="av1"><circle cx="28" cy="28" r="28"/></clipPath></defs><g clip-path="url(#av1)"><rect width="56" height="56" fill="#d4dbe0"/><rect x="34" width="22" height="56" fill="#e3e5e6"/><g filter="url(#avb)">
<path d="M8 56C7 40 12 32 21 29h11c10 3 17 10 20 22l-2 5z" fill="#1d2f5c"/><path d="M22.500 28h8l-1 9-3 11-3-11z" fill="#e9ebee"/><path d="M25.500 30h2.500l1.500 12-2.500 6-2.500-6z" fill="#9a7d7a"/>
<path d="M10 46c6-3 14-1 22 0 6 1 12-2 18-4l2 6c-8 4-16 5-22 4-8-1-14 0-18 2z" fill="#223769"/><ellipse cx="44" cy="44" rx="5" ry="2.800" fill="#d9a88c"/><ellipse cx="19" cy="51" rx="3.500" ry="2.500" fill="#e9ebee"/>
<ellipse cx="26.500" cy="15" rx="6.800" ry="9" fill="#d3a284"/><path d="M19.500 13C18 5 22 1 27 1s9.500 3 8 12c-1-4-3-6-8-6s-6.500 2-7.500 6z" fill="#1f1a19"/><path d="M20 17c1 7 4 10 6.500 10s6-3 7-10c-2 3-4 3.500-7 3.500S22 20 20 17z" fill="#231c1a"/>
<path d="M20.500 13.500h12" stroke="#222" stroke-width="1"/></g></g></svg>
<div class="t" style="left:2202.5px;top:467.9px;font-size:26.67px;font-weight:700;color:#202020;letter-spacing:-0.587px;">Enrico Fels</div>
<div class="t" style="left:2349.8px;top:472.3px;font-size:21.5px;font-weight:400;color:#8a8a8a;letter-spacing:-0.255px;">15:32</div>
<div class="t" style="left:2412.0px;top:466.8px;font-size:28px;font-weight:400;color:#202020;letter-spacing:-0.258px;">Please refresh the page in case you</div>
<div class="t" style="left:2202.5px;top:498.8px;font-size:28px;font-weight:400;color:#202020;letter-spacing:-0.098px;">cannot see the stream.</div>
<svg style="position:absolute;left:2130px;top:543.3px" width="56" height="56" viewBox="0 0 56 56"><defs><clipPath id="av2"><circle cx="28" cy="28" r="28"/></clipPath></defs><g clip-path="url(#av2)"><rect width="56" height="56" fill="#f8f5f1"/><g filter="url(#avb)">
<path d="M8 56c2-6 8-9 14-10h12c6 1 11 4 13 10z" fill="#ece2dc"/>
<path d="M19 40h17v8l-8.500 4-8.500-4z" fill="#d9a686"/>
<ellipse cx="27.500" cy="30" rx="13.500" ry="17" fill="#e6b999"/><ellipse cx="27.500" cy="38" rx="11" ry="9.500" fill="#c9a088" opacity=".75"/>
<path d="M13 28C9 12 15 2 28 1c12-1 18 8 14 26-1-7-3-12-6-14-5 1-13 1-18 3-3 2-4 6-5 12z" fill="#6b635c"/><path d="M16 10c4-6 12-9 20-7-6 0-13 3-17 9z" fill="#8d857d"/>
<path d="M21 39c4 3 9 3 13 0-2 5-11 5-13 0z" fill="#fbf6f2"/><path d="M18 25.500h7M30.500 25.500h7" stroke="#4a3a32" stroke-width="1.600"/></g></g></svg>
<div class="t" style="left:2202.5px;top:559.1px;font-size:27.46px;font-weight:700;color:#202020;letter-spacing:-0.604px;">Sascha Foerster (Support)</div>
<div class="t" style="left:2542.2px;top:564.1px;font-size:21.5px;font-weight:400;color:#8a8a8a;letter-spacing:-0.255px;">15:37</div>
<div class="t" style="left:2604.7px;top:558.6px;font-size:28px;font-weight:400;color:#202020;letter-spacing:-0.234px;">Alternatively, you</div>
<div class="t" style="left:2202.5px;top:590.6px;font-size:28px;font-weight:400;color:#202020;letter-spacing:-0.170px;">can see (or share) the livestream on YouTube:</div>
<div class="t" style="left:2202.5px;top:622.6px;font-size:28px;font-weight:400;color:#15305c;letter-spacing:0.101px;">https://www.youtube.com/watch?v=RvO6Dudq0Nk</div>
<svg style="position:absolute;left:2130px;top:666.5px" width="56" height="56" viewBox="0 0 56 56"><defs><clipPath id="av3"><circle cx="28" cy="28" r="28"/></clipPath></defs><g clip-path="url(#av3)"><rect width="56" height="56" fill="#f8f5f1"/><g filter="url(#avb)">
<path d="M8 56c2-6 8-9 14-10h12c6 1 11 4 13 10z" fill="#ece2dc"/>
<path d="M19 40h17v8l-8.500 4-8.500-4z" fill="#d9a686"/>
<ellipse cx="27.500" cy="30" rx="13.500" ry="17" fill="#e6b999"/><ellipse cx="27.500" cy="38" rx="11" ry="9.500" fill="#c9a088" opacity=".75"/>
<path d="M13 28C9 12 15 2 28 1c12-1 18 8 14 26-1-7-3-12-6-14-5 1-13 1-18 3-3 2-4 6-5 12z" fill="#6b635c"/><path d="M16 10c4-6 12-9 20-7-6 0-13 3-17 9z" fill="#8d857d"/>
<path d="M21 39c4 3 9 3 13 0-2 5-11 5-13 0z" fill="#fbf6f2"/><path d="M18 25.500h7M30.500 25.500h7" stroke="#4a3a32" stroke-width="1.600"/></g></g></svg>
<div class="t" style="left:2202.5px;top:682.3px;font-size:27.46px;font-weight:700;color:#202020;letter-spacing:-0.604px;">Sascha Foerster (Support)</div>
<div class="t" style="left:2542.2px;top:687.3px;font-size:21.5px;font-weight:400;color:#8a8a8a;letter-spacing:-0.255px;">16:17</div>
<div class="t" style="left:2604.7px;top:681.8px;font-size:28px;font-weight:400;color:#202020;letter-spacing:-0.064px;">The next discussion</div>
<div class="t" style="left:2202.5px;top:713.8px;font-size:28px;font-weight:400;color:#202020;letter-spacing:-0.089px;">will be in the room &quot;Panel discussion&quot; at 3:30 pm</div>
<svg style="position:absolute;left:2130px;top:758.7px" width="56" height="56" viewBox="0 0 56 56"><defs><clipPath id="av4"><circle cx="28" cy="28" r="28"/></clipPath></defs><g clip-path="url(#av4)"><rect width="56" height="56" fill="#dedede"/><rect x="36" width="20" height="56" fill="#ececec"/><g filter="url(#avb)">
<path d="M4 56c2-8 8-11 15-12h14c5 1 9 3 12 7l-3 5z" fill="#f0f0f0"/><path d="M40 56l4-7c3 1 6 3 8 7z" fill="#2e2e2e"/>
<path d="M19 40h16v8l-8 4-8-4z" fill="#b5b5b5"/>
<ellipse cx="27" cy="28.500" rx="13.500" ry="18" fill="#cdcdcd"/><ellipse cx="29" cy="32" rx="9" ry="11" fill="#d8d8d8"/>
<path d="M12.500 27C9 12 15 1 27 1c11 0 18 7 14.500 25-1-7-3-11-6-13-5 1-13 1-17 3-3 2-4 5-6 11z" fill="#3b3b3b"/><ellipse cx="12" cy="29" rx="2.500" ry="4.500" fill="#bdbdbd"/>
<path d="M21 38c4 2.500 9 2.500 13-.5-2 5-11 5.500-13 .5z" fill="#f7f7f7"/><path d="M18 25h6.500M30 25h6.500" stroke="#444" stroke-width="1.500"/></g></g></svg>
<div class="t" style="left:2202.5px;top:774.3px;font-size:27.6px;font-weight:700;color:#202020;letter-spacing:-0.607px;">Maximilian Schranner</div>
<div class="t" style="left:2485.2px;top:779.5px;font-size:21.5px;font-weight:400;color:#8a8a8a;letter-spacing:-0.126px;">18:06</div>
<div class="t" style="left:2547.4px;top:774.0px;font-size:28px;font-weight:400;color:#202020;letter-spacing:-0.166px;">Should you wish to</div>
<div class="t" style="left:2202.5px;top:806.0px;font-size:28px;font-weight:400;color:#202020;letter-spacing:-0.066px;">attend the evening talk hosted by our partner</div>
<div class="t" style="left:2202.5px;top:838.0px;font-size:28px;font-weight:400;color:#202020;letter-spacing:-0.213px;">AmerikaHaus e.V., you can join the Zoom webinar via</div>
<div class="t" style="left:2202.5px;top:870.0px;font-size:28px;font-weight:400;color:#202020;letter-spacing:0.143px;">the following link:</div>
<div class="t" style="left:2202.5px;top:902.0px;font-size:28px;font-weight:400;color:#15305c;letter-spacing:0.276px;">https://us02web.zoom.us/webinar/register/WN_Ugb</div>
<div class="t" style="left:2202.5px;top:934.3px;font-size:27.7px;font-weight:400;color:#15305c;letter-spacing:-0.609px;">UFb_4TJq3hu3aX4-uQg</div>
<svg style="position:absolute;left:2130px;top:978.8px" width="56" height="56" viewBox="0 0 56 56"><defs><clipPath id="av5"><circle cx="28" cy="28" r="28"/></clipPath></defs><g clip-path="url(#av5)"><rect width="56" height="56" fill="#dedede"/><rect x="36" width="20" height="56" fill="#ececec"/><g filter="url(#avb)">
<path d="M4 56c2-8 8-11 15-12h14c5 1 9 3 12 7l-3 5z" fill="#f0f0f0"/><path d="M40 56l4-7c3 1 6 3 8 7z" fill="#2e2e2e"/>
<path d="M19 40h16v8l-8 4-8-4z" fill="#b5b5b5"/>
<ellipse cx="27" cy="28.500" rx="13.500" ry="18" fill="#cdcdcd"/><ellipse cx="29" cy="32" rx="9" ry="11" fill="#d8d8d8"/>
<path d="M12.500 27C9 12 15 1 27 1c11 0 18 7 14.500 25-1-7-3-11-6-13-5 1-13 1-17 3-3 2-4 5-6 11z" fill="#3b3b3b"/><ellipse cx="12" cy="29" rx="2.500" ry="4.500" fill="#bdbdbd"/>
<path d="M21 38c4 2.500 9 2.500 13-.5-2 5-11 5.500-13 .5z" fill="#f7f7f7"/><path d="M18 25h6.500M30 25h6.500" stroke="#444" stroke-width="1.500"/></g></g></svg>
<div class="t" style="left:2202.5px;top:994.4px;font-size:27.6px;font-weight:700;color:#202020;letter-spacing:-0.607px;">Maximilian Schranner</div>
<div class="t" style="left:2484.5px;top:999.6px;font-size:21.5px;font-weight:400;color:#8a8a8a;letter-spacing:0.082px;">03.12. 09:25</div>
<div class="t" style="left:2614.4px;top:994.1px;font-size:28px;font-weight:400;color:#202020;letter-spacing:-0.115px;">Welcome to the</div>
<div class="t" style="left:2202.5px;top:1026.1px;font-size:28px;font-weight:400;color:#202020;letter-spacing:-0.204px;">Special Focus Day of our forum, dear guests! The</div>
<div class="t" style="left:2202.5px;top:1058.1px;font-size:28px;font-weight:400;color:#202020;letter-spacing:0.073px;">Introduction and Welcoming Remarks will start</div>
<div class="t" style="left:2202.5px;top:1090.1px;font-size:28px;font-weight:400;color:#202020;letter-spacing:0.139px;">shortly.</div>
<svg style="position:absolute;left:2130px;top:1135.7px" width="56" height="56" viewBox="0 0 56 56"><defs><clipPath id="av6"><circle cx="28" cy="28" r="28"/></clipPath></defs><g clip-path="url(#av6)"><rect width="56" height="56" fill="#dedede"/><rect x="36" width="20" height="56" fill="#ececec"/><g filter="url(#avb)">
<path d="M4 56c2-8 8-11 15-12h14c5 1 9 3 12 7l-3 5z" fill="#f0f0f0"/><path d="M40 56l4-7c3 1 6 3 8 7z" fill="#2e2e2e"/>
<path d="M19 40h16v8l-8 4-8-4z" fill="#b5b5b5"/>
<ellipse cx="27" cy="28.500" rx="13.500" ry="18" fill="#cdcdcd"/><ellipse cx="29" cy="32" rx="9" ry="11" fill="#d8d8d8"/>
<path d="M12.500 27C9 12 15 1 27 1c11 0 18 7 14.500 25-1-7-3-11-6-13-5 1-13 1-17 3-3 2-4 5-6 11z" fill="#3b3b3b"/><ellipse cx="12" cy="29" rx="2.500" ry="4.500" fill="#bdbdbd"/>
<path d="M21 38c4 2.500 9 2.500 13-.5-2 5-11 5.500-13 .5z" fill="#f7f7f7"/><path d="M18 25h6.500M30 25h6.500" stroke="#444" stroke-width="1.500"/></g></g></svg>
<div class="t" style="left:2202.5px;top:1151.3px;font-size:27.61px;font-weight:700;color:#202020;letter-spacing:-0.607px;">Maximilian Schranner</div>
<div class="t" style="left:2484.5px;top:1156.5px;font-size:21.5px;font-weight:400;color:#8a8a8a;letter-spacing:-0.101px;">09:53</div>
<div class="t" style="left:2547.1px;top:1151.0px;font-size:28px;font-weight:400;color:#202020;letter-spacing:-0.200px;">Feel free to post any</div>
<div class="t" style="left:2202.5px;top:1183.0px;font-size:28px;font-weight:400;color:#202020;letter-spacing:-0.115px;">questions you might have here in the chat. We will</div>
<div class="t" style="left:2202.5px;top:1215.0px;font-size:28px;font-weight:400;color:#202020;letter-spacing:0.015px;">pass them along to Professor Kickbusch.</div>
<svg style="position:absolute;left:2130px;top:1259.5px" width="56" height="56" viewBox="0 0 56 56"><defs><clipPath id="av7"><circle cx="28" cy="28" r="28"/></clipPath></defs><g clip-path="url(#av7)"><rect width="56" height="56" fill="#dadada"/><rect x="34" width="22" height="56" fill="#cfcfcf"/><g filter="url(#avb)">
<path d="M6 56c2-10 9-17 17-19h10c8 2 13 8 16 19z" fill="#bebebe"/><path d="M20 37l-3 19h3l4-19z" fill="#555"/><path d="M22 36h12l-1 6-5 3-5-3z" fill="#d0d0d0"/>
<ellipse cx="28" cy="23" rx="9.500" ry="12" fill="#d3d3d3"/>
<path d="M17.500 20C15 9 21 3 29 3.500c9 .5 14 7 11.500 19-1-5-2-8-4-10-5 0-10-1-13 1-3 1.500-4 3-6 6.500z" fill="#222"/>
<path d="M19 22.500h18" stroke="#333" stroke-width="1"/><rect x="19.500" y="20" width="7.500" height="5.500" rx="2.500" fill="none" stroke="#333" stroke-width="1.300"/><rect x="29.500" y="20" width="7.500" height="5.500" rx="2.500" fill="none" stroke="#333" stroke-width="1.300"/>
<path d="M23 29c3 2 7 2 10 0-2 3.500-8 3.500-10 0z" fill="#f4f4f4"/></g></g></svg>
<div class="t" style="left:2202.5px;top:1275.4px;font-size:27.32px;font-weight:700;color:#202020;letter-spacing:-0.601px;">Katharina Cramer</div>
<div class="t" style="left:2431.2px;top:1280.3px;font-size:21.5px;font-weight:400;color:#8a8a8a;letter-spacing:-0.101px;">10:20</div>
<div class="t" style="left:2493.8px;top:1274.8px;font-size:28px;font-weight:400;color:#202020;letter-spacing:-0.034px;">Professor Kickbusch, what is</div>
<div class="t" style="left:2202.5px;top:1306.8px;font-size:28px;font-weight:400;color:#202020;letter-spacing:-0.079px;">the role of WHO&#x27;s international health regulations</div>
<div class="t" style="left:2202.5px;top:1338.8px;font-size:28px;font-weight:400;color:#202020;letter-spacing:-0.083px;">(IHR) towards a global agreement on pandemic</div>
<div class="t" style="left:2202.5px;top:1370.8px;font-size:28px;font-weight:400;color:#202020;letter-spacing:-0.293px;">preparedness and response?</div>
<svg style="position:absolute;left:2130px;top:1415.0px" width="56" height="56" viewBox="0 0 56 56"><defs><clipPath id="av8"><circle cx="28" cy="28" r="28"/></clipPath></defs><g clip-path="url(#av8)"><rect width="56" height="56" fill="#f8f5f1"/><g filter="url(#avb)">
<path d="M8 56c2-6 8-9 14-10h12c6 1 11 4 13 10z" fill="#ece2dc"/>
<path d="M19 40h17v8l-8.500 4-8.500-4z" fill="#d9a686"/>
<ellipse cx="27.500" cy="30" rx="13.500" ry="17" fill="#e6b999"/><ellipse cx="27.500" cy="38" rx="11" ry="9.500" fill="#c9a088" opacity=".75"/>
<path d="M13 28C9 12 15 2 28 1c12-1 18 8 14 26-1-7-3-12-6-14-5 1-13 1-18 3-3 2-4 6-5 12z" fill="#6b635c"/><path d="M16 10c4-6 12-9 20-7-6 0-13 3-17 9z" fill="#8d857d"/>
<path d="M21 39c4 3 9 3 13 0-2 5-11 5-13 0z" fill="#fbf6f2"/><path d="M18 25.500h7M30.500 25.500h7" stroke="#4a3a32" stroke-width="1.600"/></g></g></svg>
<div class="t" style="left:2202.5px;top:1430.7px;font-size:27.49px;font-weight:700;color:#202020;letter-spacing:-0.605px;">Sascha Foerster (Support)</div>
<div class="t" style="left:2541.9px;top:1435.8px;font-size:21.5px;font-weight:400;color:#8a8a8a;letter-spacing:-0.101px;">10:32</div>
<div class="t" style="left:2603.8px;top:1430.3px;font-size:28px;font-weight:400;color:#202020;letter-spacing:-0.028px;">The recording of the</div>
<div class="t" style="left:2202.5px;top:1462.3px;font-size:28px;font-weight:400;color:#202020;letter-spacing:-0.220px;">keynote is available on YouTube:</div>
<div class="t" style="left:2202.5px;top:1494.3px;font-size:28px;font-weight:400;color:#15305c;letter-spacing:-0.012px;">https://www.youtube.com/watch?v=hVXDVR8InYY</div>
<div style="position:absolute;left:2143.700px;top:1553.700px;width:702.600px;height:68.300px;border:2px solid #9a9a9a;border-radius:8px;box-sizing:border-box;background:#fff"></div>
<svg style="position:absolute;left:2158px;top:1568px" width="40" height="40" viewBox="0 0 40 40"><circle cx="20" cy="20" r="17.800" fill="none" stroke="#7a7a7a" stroke-width="3.400"/><circle cx="13.700" cy="14.500" r="2.900" fill="#7a7a7a"/><circle cx="26.300" cy="14.500" r="2.900" fill="#7a7a7a"/><path d="M9.500 22h21a10.500 10.500 0 0 1-21 0z" fill="#7a7a7a"/></svg>
<div class="t" style="left:2213.5px;top:1572.9px;font-size:32px;font-weight:400;color:#7c7c7c;letter-spacing:-0.475px;">Send a message</div>
<svg style="position:absolute;left:2795px;top:1574px" width="33" height="28" viewBox="0 0 33 28"><path d="M0 0l33 14L0 28l0-11 23-3L0 11z" fill="#7a7a7a"/></svg>
<div style="position:absolute;left:614px;top:1646px;width:1652px;height:143px;border-radius:36px;background:linear-gradient(90deg,#585d6c 0%,#5b6070 40%,#615f6b 75%,#625d66 100%);box-shadow:inset 0 0 0 1.500px rgba(255,255,255,.22),0 0 0 1px rgba(0,0,0,.35)"></div>
<div style="position:absolute;left:635.3px;top:1666.5px;width:92px;height:92px;border-radius:21px;background:linear-gradient(180deg,#43b0fa,#2177ea);box-shadow:0 1px 3px rgba(0,0,0,.3);overflow:hidden;"><svg width="92" height="92" viewBox="0 0 92 92"><defs><linearGradient id="fdr" x1="0" x2="0" y1="0" y2="1"><stop offset="0" stop-color="#f4f6f9"/><stop offset="1" stop-color="#d5dbe6"/></linearGradient></defs><path d="M49.500 0H92v92H57c-3.500-12-4.600-24-4.300-37H39c0-20 4.500-39 10.500-55z" fill="url(#fdr)"/><rect x="22.400" y="26.200" width="3.800" height="8.700" rx="1.900" fill="#1d2733"/><rect x="65.900" y="26.200" width="3.800" height="8.700" rx="1.900" fill="#1d2733"/><path d="M17.500 61.400c14 16.500 43 16.500 57.100 0" fill="none" stroke="#1d2733" stroke-width="2.300" stroke-linecap="round"/></svg></div>
<div style="position:absolute;left:757px;top:1666.5px;width:92px;height:92px;border-radius:21px;background:linear-gradient(180deg,#fdfdfd,#e4e6ea);box-shadow:0 1px 3px rgba(0,0,0,.3);overflow:hidden;"><svg width="92" height="92" viewBox="0 0 92 92"><defs><linearGradient id="sfg" x1="0" x2="0" y1="0" y2="1"><stop offset="0" stop-color="#2a9bf3"/><stop offset="1" stop-color="#1f6fe2"/></linearGradient></defs><circle cx="46" cy="46" r="40" fill="url(#sfg)"/><path d="M46 9v6.5" transform="rotate(0 46 46)" stroke="#fff" stroke-width=".9" stroke-opacity=".9"/><path d="M46 9v3.6" transform="rotate(5 46 46)" stroke="#fff" stroke-width=".9" stroke-opacity=".9"/><path d="M46 9v6.5" transform="rotate(10 46 46)" stroke="#fff" stroke-width=".9" stroke-opacity=".9"/><path d="M46 9v3.6" transform="rotate(15 46 46)" stroke="#fff" stroke-width=".9" stroke-opacity=".9"/><path d="M46 9v6.5" transform="rotate(20 46 46)" stroke="#fff" stroke-width=".9" stroke-opacity=".9"/><path d="M46 9v3.6" transform="rotate(25 46 46)" stroke="#fff" stroke-width=".9" stroke-opacity=".9"/><path d="M46 9v6.5" transform="rotate(30 46 46)" stroke="#fff" stroke-width=".9" stroke-opacity=".9"/><path d="M46 9v3.6" transform="rotate(35 46 46)" stroke="#fff" stroke-width=".9" stroke-opacity=".9"/><path d="M46 9v6.5" transform="rotate(40 46 46)" stroke="#fff" stroke-width=".9" stroke-opacity=".9"/><path d="M46 9v3.6" transform="rotate(45 46 46)" stroke="#fff" stroke-width=".9" stroke-opacity=".9"/><path d="M46 9v6.5" transform="rotate(50 46 46)" stroke="#fff" stroke-width=".9" stroke-opacity=".9"/><path d="M46 9v3.6" transform="rotate(55 46 46)" stroke="#fff" stroke-width=".9" stroke-opacity=".9"/><path d="M46 9v6.5" transform="rotate(60 46 46)" stroke="#fff" stroke-width=".9" stroke-opacity=".9"/><path d="M46 9v3.6" transform="rotate(65 46 46)" stroke="#fff" stroke-width=".9" stroke-opacity=".9"/><path d="M46 9v6.5" transform="rotate(70 46 46)" stroke="#fff" stroke-width=".9" stroke-opacity=".9"/><path d="M46 9v3.6" transform="rotate(75 46 46)" stroke="#fff" stroke-width=".9" stroke-opacity=".9"/><path d="M46 9v6.5" transform="rotate(80 46 46)" stroke="#fff" stroke-width=".9" stroke-opacity=".9"/><path d="M46 9v3.6" transform="rotate(85 46 46)" stroke="#fff" stroke-width=".9" stroke-opacity=".9"/><path d="M46 9v6.5" transform="rotate(90 46 46)" stroke="#fff" stroke-width=".9" stroke-opacity=".9"/><path d="M46 9v3.6" transform="rotate(95 46 46)" stroke="#fff" stroke-width=".9" stroke-opacity=".9"/><path d="M46 9v6.5" transform="rotate(100 46 46)" stroke="#fff" stroke-width=".9" stroke-opacity=".9"/><path d="M46 9v3.6" transform="rotate(105 46 46)" stroke="#fff" stroke-width=".9" stroke-opacity=".9"/><path d="M46 9v6.5" transform="rotate(110 46 46)" stroke="#fff" stroke-width=".9" stroke-opacity=".9"/><path d="M46 9v3.6" transform="rotate(115 46 46)" stroke="#fff" stroke-width=".9" stroke-opacity=".9"/><path d="M46 9v6.5" transform="rotate(120 46 46)" stroke="#fff" stroke-width=".9" stroke-opacity=".9"/><path d="M46 9v3.6" transform="rotate(125 46 46)" stroke="#fff" stroke-width=".9" stroke-opacity=".9"/><path d="M46 9v6.5" transform="rotate(130 46 46)" stroke="#fff" stroke-width=".9" stroke-opacity=".9"/><path d="M46 9v3.6" transform="rotate(135 46 46)" stroke="#fff" stroke-width=".9" stroke-opacity=".9"/><path d="M46 9v6.5" transform="rotate(140 46 46)" stroke="#fff" stroke-width=".9" stroke-opacity=".9"/><path d="M46 9v3.6" transform="rotate(145 46 46)" stroke="#fff" stroke-width=".9" stroke-opacity=".9"/><path d="M46 9v6.5" transform="rotate(150 46 46)" stroke="#fff" stroke-width=".9" stroke-opacity=".9"/><path d="M46 9v3.6" transform="rotate(155 46 46)" stroke="#fff" stroke-width=".9" stroke-opacity=".9"/><path d="M46 9v6.5" transform="rotate(160 46 46)" stroke="#fff" stroke-width=".9" stroke-opacity=".9"/><path d="M46 9v3.6" transform="rotate(165 46 46)" stroke="#fff" stroke-width=".9" stroke-opacity=".9"/><path d="M46 9v6.5" transform="rotate(170 46 46)" stroke="#fff" stroke-width=".9" stroke-opacity=".9"/><path d="M46 9v3.6" transform="rotate(175 46 46)" stroke="#fff" stroke-width=".9" stroke-opacity=".9"/><path d="M46 9v6.5" transform="rotate(180 46 46)" stroke="#fff" stroke-width=".9" stroke-opacity=".9"/><path d="M46 9v3.6" transform="rotate(185 46 46)" stroke="#fff" stroke-width=".9" stroke-opacity=".9"/><path d="M46 9v6.5" transform="rotate(190 46 46)" stroke="#fff" stroke-width=".9" stroke-opacity=".9"/><path d="M46 9v3.6" transform="rotate(195 46 46)" stroke="#fff" stroke-width=".9" stroke-opacity=".9"/><path d="M46 9v6.5" transform="rotate(200 46 46)" stroke="#fff" stroke-width=".9" stroke-opacity=".9"/><path d="M46 9v3.6" transform="rotate(205 46 46)" stroke="#fff" stroke-width=".9" stroke-opacity=".9"/><path d="M46 9v6.5" transform="rotate(210 46 46)" stroke="#fff" stroke-width=".9" stroke-opacity=".9"/><path d="M46 9v3.6" transform="rotate(215 46 46)" stroke="#fff" stroke-width=".9" stroke-opacity=".9"/><path d="M46 9v6.5" transform="rotate(220 46 46)" stroke="#fff" stroke-width=".9" stroke-opacity=".9"/><path d="M46 9v3.6" transform="rotate(225 46 46)" stroke="#fff" stroke-width=".9" stroke-opacity=".9"/><path d="M46 9v6.5" transform="rotate(230 46 46)" stroke="#fff" stroke-width=".9" stroke-opacity=".9"/><path d="M46 9v3.6" transform="rotate(235 46 46)" stroke="#fff" stroke-width=".9" stroke-opacity=".9"/><path d="M46 9v6.5" transform="rotate(240 46 46)" stroke="#fff" stroke-width=".9" stroke-opacity=".9"/><path d="M46 9v3.6" transform="rotate(245 46 46)" stroke="#fff" stroke-width=".9" stroke-opacity=".9"/><path d="M46 9v6.5" transform="rotate(250 46 46)" stroke="#fff" stroke-width=".9" stroke-opacity=".9"/><path d="M46 9v3.6" transform="rotate(255 46 46)" stroke="#fff" stroke-width=".9" stroke-opacity=".9"/><path d="M46 9v6.5" transform="rotate(260 46 46)" stroke="#fff" stroke-width=".9" stroke-opacity=".9"/><path d="M46 9v3.6" transform="rotate(265 46 46)" stroke="#fff" stroke-width=".9" stroke-opacity=".9"/><path d="M46 9v6.5" transform="rotate(270 46 46)" stroke="#fff" stroke-width=".9" stroke-opacity=".9"/><path d="M46 9v3.6" transform="rotate(275 46 46)" stroke="#fff" stroke-width=".9" stroke-opacity=".9"/><path d="M46 9v6.5" transform="rotate(280 46 46)" stroke="#fff" stroke-width=".9" stroke-opacity=".9"/><path d="M46 9v3.6" transform="rotate(285 46 46)" stroke="#fff" stroke-width=".9" stroke-opacity=".9"/><path d="M46 9v6.5" transform="rotate(290 46 46)" stroke="#fff" stroke-width=".9" stroke-opacity=".9"/><path d="M46 9v3.6" transform="rotate(295 46 46)" stroke="#fff" stroke-width=".9" stroke-opacity=".9"/><path d="M46 9v6.5" transform="rotate(300 46 46)" stroke="#fff" stroke-width=".9" stroke-opacity=".9"/><path d="M46 9v3.6" transform="rotate(305 46 46)" stroke="#fff" stroke-width=".9" stroke-opacity=".9"/><path d="M46 9v6.5" transform="rotate(310 46 46)" stroke="#fff" stroke-width=".9" stroke-opacity=".9"/><path d="M46 9v3.6" transform="rotate(315 46 46)" stroke="#fff" stroke-width=".9" stroke-opacity=".9"/><path d="M46 9v6.5" transform="rotate(320 46 46)" stroke="#fff" stroke-width=".9" stroke-opacity=".9"/><path d="M46 9v3.6" transform="rotate(325 46 46)" stroke="#fff" stroke-width=".9" stroke-opacity=".9"/><path d="M46 9v6.5" transform="rotate(330 46 46)" stroke="#fff" stroke-width=".9" stroke-opacity=".9"/><path d="M46 9v3.6" transform="rotate(335 46 46)" stroke="#fff" stroke-width=".9" stroke-opacity=".9"/><path d="M46 9v6.5" transform="rotate(340 46 46)" stroke="#fff" stroke-width=".9" stroke-opacity=".9"/><path d="M46 9v3.6" transform="rotate(345 46 46)" stroke="#fff" stroke-width=".9" stroke-opacity=".9"/><path d="M46 9v6.5" transform="rotate(350 46 46)" stroke="#fff" stroke-width=".9" stroke-opacity=".9"/><path d="M46 9v3.6" transform="rotate(355 46 46)" stroke="#fff" stroke-width=".9" stroke-opacity=".9"/><path d="M73.600 23.800L48.440 49.690 43.360 43.510z" fill="#ee4a3e"/><path d="M18.100 69.400L48.440 49.690 43.360 43.510z" fill="#f3f3f3"/><path d="M18.100 69.400L48.440 49.690 45.900 46.600z" fill="#cfd2d6"/></svg></div>
<div style="position:absolute;left:879px;top:1666.5px;width:92px;height:92px;border-radius:21px;background:#fbfbfb;box-shadow:0 1px 3px rgba(0,0,0,.3);overflow:hidden;"><div style="position:absolute;left:0;top:0;width:92px;height:29px;background:#ee5a4f"></div></div>
<div class="t" style="left:907.7px;top:1674.5px;font-size:16.5px;font-weight:700;color:#fff;letter-spacing:0.567px;">DEZ</div>
<div class="t" style="left:907.6px;top:1696.8px;font-size:56px;font-weight:400;color:#333;letter-spacing:0.000px;">3</div>
<div style="position:absolute;left:1001px;top:1666.5px;width:92px;height:92px;border-radius:21px;background:linear-gradient(180deg,#2a74ee,#3fc0fb);box-shadow:0 1px 3px rgba(0,0,0,.3);overflow:hidden;"><svg width="92" height="92" viewBox="0 0 92 92"><rect x="14" y="26" width="64" height="42" rx="5" fill="#f4f4f4"/><path d="M15 28l31 24 31-24" fill="none" stroke="#c9c9c9" stroke-width="2.400"/><path d="M15 66l22-19M77 66L55 47" stroke="#d6d6d6" stroke-width="2" fill="none"/></svg></div>
<div style="position:absolute;left:1065px;top:1656px;width:43px;height:43px;border-radius:50%;background:#ee4e42"></div>
<div class="t" style="left:1074.5px;top:1669.3px;font-size:22.07px;font-weight:400;color:#fff;letter-spacing:-0.486px;">19</div>
<svg style="position:absolute;left:1118px;top:1668px" width="100" height="90" viewBox="0 0 100 90"><rect x="24" y="2" width="76" height="86" rx="5" fill="#1b4f9f"/><rect x="24" y="2" width="76" height="22" fill="#41a5ee" rx="5"/><rect x="24" y="20" width="76" height="23" fill="#2b7cd3"/><rect x="24" y="43" width="76" height="23" fill="#185abd"/><rect x="1" y="19" width="50" height="50" rx="5" fill="#185abd"/></svg>
<div class="t" style="left:1126.5px;top:1693.7px;font-size:37px;font-weight:700;color:#fff;letter-spacing:0.562px;">W</div>
<svg style="position:absolute;left:1240px;top:1668px" width="100" height="90" viewBox="0 0 100 90"><circle cx="57" cy="44" r="43" fill="#d35230"/><path d="M57 1a43 43 0 0 1 43 43H57z" fill="#ff8f6b"/><path d="M57 1a43 43 0 0 0-43 43h43z" fill="#ed6c47"/><rect x="1" y="19" width="50" height="50" rx="5" fill="#c43e1c"/></svg>
<div class="t" style="left:1253.0px;top:1693.7px;font-size:37px;font-weight:700;color:#fff;letter-spacing:1.312px;">P</div>
<svg style="position:absolute;left:1362px;top:1668px" width="100" height="90" viewBox="0 0 100 90"><rect x="24" y="2" width="76" height="86" rx="5" fill="#29704a"/><path d="M24 7a5 5 0 0 1 5-5h33v22H24z" fill="#4ea672"/><path d="M62 2h33a5 5 0 0 1 5 5v17H62z" fill="#66c08e"/><rect x="24" y="24" width="38" height="21" fill="#3a8d5e"/><rect x="62" y="24" width="38" height="21" fill="#4ba871"/><rect x="62" y="45" width="38" height="21" fill="#3a8d5e"/><rect x="1" y="19" width="50" height="50" rx="5" fill="#2f7f50"/></svg>
<div class="t" style="left:1375.0px;top:1693.7px;font-size:37px;font-weight:700;color:#fff;letter-spacing:1.312px;">X</div>
<div style="position:absolute;left:1489px;top:1666.5px;width:92px;height:92px;border-radius:21px;background:linear-gradient(180deg,#dcdde0,#97999e);box-shadow:0 1px 3px rgba(0,0,0,.3);overflow:hidden;"><svg width="92" height="92" viewBox="0 0 92 92"><rect x="44.400" y="3.200" width="3.200" height="6" transform="rotate(0.000 46 46)" fill="#505156"/><rect x="44.400" y="3.200" width="3.200" height="6" transform="rotate(8.182 46 46)" fill="#505156"/><rect x="44.400" y="3.200" width="3.200" height="6" transform="rotate(16.364 46 46)" fill="#505156"/><rect x="44.400" y="3.200" width="3.200" height="6" transform="rotate(24.545 46 46)" fill="#505156"/><rect x="44.400" y="3.200" width="3.200" height="6" transform="rotate(32.727 46 46)" fill="#505156"/><rect x="44.400" y="3.200" width="3.200" height="6" transform="rotate(40.909 46 46)" fill="#505156"/><rect x="44.400" y="3.200" width="3.200" height="6" transform="rotate(49.091 46 46)" fill="#505156"/><rect x="44.400" y="3.200" width="3.200" height="6" transform="rotate(57.273 46 46)" fill="#505156"/><rect x="44.400" y="3.200" width="3.200" height="6" transform="rotate(65.454 46 46)" fill="#505156"/><rect x="44.400" y="3.200" width="3.200" height="6" transform="rotate(73.636 46 46)" fill="#505156"/><rect x="44.400" y="3.200" width="3.200" height="6" transform="rotate(81.818 46 46)" fill="#505156"/><rect x="44.400" y="3.200" width="3.200" height="6" transform="rotate(90.000 46 46)" fill="#505156"/><rect x="44.400" y="3.200" width="3.200" height="6" transform="rotate(98.182 46 46)" fill="#505156"/><rect x="44.400" y="3.200" width="3.200" height="6" transform="rotate(106.363 46 46)" fill="#505156"/><rect x="44.400" y="3.200" width="3.200" height="6" transform="rotate(114.545 46 46)" fill="#505156"/><rect x="44.400" y="3.200" width="3.200" height="6" transform="rotate(122.727 46 46)" fill="#505156"/><rect x="44.400" y="3.200" width="3.200" height="6" transform="rotate(130.909 46 46)" fill="#505156"/><rect x="44.400" y="3.200" width="3.200" height="6" transform="rotate(139.091 46 46)" fill="#505156"/><rect x="44.400" y="3.200" width="3.200" height="6" transform="rotate(147.272 46 46)" fill="#505156"/><rect x="44.400" y="3.200" width="3.200" height="6" transform="rotate(155.454 46 46)" fill="#505156"/><rect x="44.400" y="3.200" width="3.200" height="6" transform="rotate(163.636 46 46)" fill="#505156"/><rect x="44.400" y="3.200" width="3.200" height="6" transform="rotate(171.818 46 46)" fill="#505156"/><rect x="44.400" y="3.200" width="3.200" height="6" transform="rotate(180.000 46 46)" fill="#505156"/><rect x="44.400" y="3.200" width="3.200" height="6" transform="rotate(188.181 46 46)" fill="#505156"/><rect x="44.400" y="3.200" width="3.200" height="6" transform="rotate(196.363 46 46)" fill="#505156"/><rect x="44.400" y="3.200" width="3.200" height="6" transform="rotate(204.545 46 46)" fill="#505156"/><rect x="44.400" y="3.200" width="3.200" height="6" transform="rotate(212.727 46 46)" fill="#505156"/><rect x="44.400" y="3.200" width="3.200" height="6" transform="rotate(220.909 46 46)" fill="#505156"/><rect x="44.400" y="3.200" width="3.200" height="6" transform="rotate(229.090 46 46)" fill="#505156"/><rect x="44.400" y="3.200" width="3.200" height="6" transform="rotate(237.272 46 46)" fill="#505156"/><rect x="44.400" y="3.200" width="3.200" height="6" transform="rotate(245.454 46 46)" fill="#505156"/><rect x="44.400" y="3.200" width="3.200" height="6" transform="rotate(253.636 46 46)" fill="#505156"/><rect x="44.400" y="3.200" width="3.200" height="6" transform="rotate(261.818 46 46)" fill="#505156"/><rect x="44.400" y="3.200" width="3.200" height="6" transform="rotate(269.999 46 46)" fill="#505156"/><rect x="44.400" y="3.200" width="3.200" height="6" transform="rotate(278.181 46 46)" fill="#505156"/><rect x="44.400" y="3.200" width="3.200" height="6" transform="rotate(286.363 46 46)" fill="#505156"/><rect x="44.400" y="3.200" width="3.200" height="6" transform="rotate(294.545 46 46)" fill="#505156"/><rect x="44.400" y="3.200" width="3.200" height="6" transform="rotate(302.727 46 46)" fill="#505156"/><rect x="44.400" y="3.200" width="3.200" height="6" transform="rotate(310.908 46 46)" fill="#505156"/><rect x="44.400" y="3.200" width="3.200" height="6" transform="rotate(319.090 46 46)" fill="#505156"/><rect x="44.400" y="3.200" width="3.200" height="6" transform="rotate(327.272 46 46)" fill="#505156"/><rect x="44.400" y="3.200" width="3.200" height="6" transform="rotate(335.454 46 46)" fill="#505156"/><rect x="44.400" y="3.200" width="3.200" height="6" transform="rotate(343.636 46 46)" fill="#505156"/><rect x="44.400" y="3.200" width="3.200" height="6" transform="rotate(351.817 46 46)" fill="#505156"/><circle cx="46" cy="46" r="38.500" fill="#505156"/><circle cx="46" cy="46" r="34.500" fill="#d0d1d5"/><circle cx="46" cy="46" r="32" fill="#6b6c71"/><rect x="45.100" y="14.500" width="1.800" height="5" transform="rotate(0 46 46)" fill="#c9cacd"/><rect x="45.100" y="14.500" width="1.800" height="5" transform="rotate(6 46 46)" fill="#c9cacd"/><rect x="45.100" y="14.500" width="1.800" height="5" transform="rotate(12 46 46)" fill="#c9cacd"/><rect x="45.100" y="14.500" width="1.800" height="5" transform="rotate(18 46 46)" fill="#c9cacd"/><rect x="45.100" y="14.500" width="1.800" height="5" transform="rotate(24 46 46)" fill="#c9cacd"/><rect x="45.100" y="14.500" width="1.800" height="5" transform="rotate(30 46 46)" fill="#c9cacd"/><rect x="45.100" y="14.500" width="1.800" height="5" transform="rotate(36 46 46)" fill="#c9cacd"/><rect x="45.100" y="14.500" width="1.800" height="5" transform="rotate(42 46 46)" fill="#c9cacd"/><rect x="45.100" y="14.500" width="1.800" height="5" transform="rotate(48 46 46)" fill="#c9cacd"/><rect x="45.100" y="14.500" width="1.800" height="5" transform="rotate(54 46 46)" fill="#c9cacd"/><rect x="45.100" y="14.500" width="1.800" height="5" transform="rotate(60 46 46)" fill="#c9cacd"/><rect x="45.100" y="14.500" width="1.800" height="5" transform="rotate(66 46 46)" fill="#c9cacd"/><rect x="45.100" y="14.500" width="1.800" height="5" transform="rotate(72 46 46)" fill="#c9cacd"/><rect x="45.100" y="14.500" width="1.800" height="5" transform="rotate(78 46 46)" fill="#c9cacd"/><rect x="45.100" y="14.500" width="1.800" height="5" transform="rotate(84 46 46)" fill="#c9cacd"/><rect x="45.100" y="14.500" width="1.800" height="5" transform="rotate(90 46 46)" fill="#c9cacd"/><rect x="45.100" y="14.500" width="1.800" height="5" transform="rotate(96 46 46)" fill="#c9cacd"/><rect x="45.100" y="14.500" width="1.800" height="5" transform="rotate(102 46 46)" fill="#c9cacd"/><rect x="45.100" y="14.500" width="1.800" height="5" transform="rotate(108 46 46)" fill="#c9cacd"/><rect x="45.100" y="14.500" width="1.800" height="5" transform="rotate(114 46 46)" fill="#c9cacd"/><rect x="45.100" y="14.500" width="1.800" height="5" transform="rotate(120 46 46)" fill="#c9cacd"/><rect x="45.100" y="14.500" width="1.800" height="5" transform="rotate(126 46 46)" fill="#c9cacd"/><rect x="45.100" y="14.500" width="1.800" height="5" transform="rotate(132 46 46)" fill="#c9cacd"/><rect x="45.100" y="14.500" width="1.800" height="5" transform="rotate(138 46 46)" fill="#c9cacd"/><rect x="45.100" y="14.500" width="1.800" height="5" transform="rotate(144 46 46)" fill="#c9cacd"/><rect x="45.100" y="14.500" width="1.800" height="5" transform="rotate(150 46 46)" fill="#c9cacd"/><rect x="45.100" y="14.500" width="1.800" height="5" transform="rotate(156 46 46)" fill="#c9cacd"/><rect x="45.100" y="14.500" width="1.800" height="5" transform="rotate(162 46 46)" fill="#c9cacd"/><rect x="45.100" y="14.500" width="1.800" height="5" transform="rotate(168 46 46)" fill="#c9cacd"/><rect x="45.100" y="14.500" width="1.800" height="5" transform="rotate(174 46 46)" fill="#c9cacd"/><rect x="45.100" y="14.500" width="1.800" height="5" transform="rotate(180 46 46)" fill="#c9cacd"/><rect x="45.100" y="14.500" width="1.800" height="5" transform="rotate(186 46 46)" fill="#c9cacd"/><rect x="45.100" y="14.500" width="1.800" height="5" transform="rotate(192 46 46)" fill="#c9cacd"/><rect x="45.100" y="14.500" width="1.800" height="5" transform="rotate(198 46 46)" fill="#c9cacd"/><rect x="45.100" y="14.500" width="1.800" height="5" transform="rotate(204 46 46)" fill="#c9cacd"/><rect x="45.100" y="14.500" width="1.800" height="5" transform="rotate(210 46 46)" fill="#c9cacd"/><rect x="45.100" y="14.500" width="1.800" height="5" transform="rotate(216 46 46)" fill="#c9cacd"/><rect x="45.100" y="14.500" width="1.800" height="5" transform="rotate(222 46 46)" fill="#c9cacd"/><rect x="45.100" y="14.500" width="1.800" height="5" transform="rotate(228 46 46)" fill="#c9cacd"/><rect x="45.100" y="14.500" width="1.800" height="5" transform="rotate(234 46 46)" fill="#c9cacd"/><rect x="45.100" y="14.500" width="1.800" height="5" transform="rotate(240 46 46)" fill="#c9cacd"/><rect x="45.100" y="14.500" width="1.800" height="5" transform="rotate(246 46 46)" fill="#c9cacd"/><rect x="45.100" y="14.500" width="1.800" height="5" transform="rotate(252 46 46)" fill="#c9cacd"/><rect x="45.100" y="14.500" width="1.800" height="5" transform="rotate(258 46 46)" fill="#c9cacd"/><rect x="45.100" y="14.500" width="1.800" height="5" transform="rotate(264 46 46)" fill="#c9cacd"/><rect x="45.100" y="14.500" width="1.800" height="5" transform="rotate(270 46 46)" fill="#c9cacd"/><rect x="45.100" y="14.500" width="1.800" height="5" transform="rotate(276 46 46)" fill="#c9cacd"/><rect x="45.100" y="14.500" width="1.800" height="5" transform="rotate(282 46 46)" fill="#c9cacd"/><rect x="45.100" y="14.500" width="1.800" height="5" transform="rotate(288 46 46)" fill="#c9cacd"/><rect x="45.100" y="14.500" width="1.800" height="5" transform="rotate(294 46 46)" fill="#c9cacd"/><rect x="45.100" y="14.500" width="1.800" height="5" transform="rotate(300 46 46)" fill="#c9cacd"/><rect x="45.100" y="14.500" width="1.800" height="5" transform="rotate(306 46 46)" fill="#c9cacd"/><rect x="45.100" y="14.500" width="1.800" height="5" transform="rotate(312 46 46)" fill="#c9cacd"/><rect x="45.100" y="14.500" width="1.800" height="5" transform="rotate(318 46 46)" fill="#c9cacd"/><rect x="45.100" y="14.500" width="1.800" height="5" transform="rotate(324 46 46)" fill="#c9cacd"/><rect x="45.100" y="14.500" width="1.800" height="5" transform="rotate(330 46 46)" fill="#c9cacd"/><rect x="45.100" y="14.500" width="1.800" height="5" transform="rotate(336 46 46)" fill="#c9cacd"/><rect x="45.100" y="14.500" width="1.800" height="5" transform="rotate(342 46 46)" fill="#c9cacd"/><rect x="45.100" y="14.500" width="1.800" height="5" transform="rotate(348 46 46)" fill="#c9cacd"/><rect x="45.100" y="14.500" width="1.800" height="5" transform="rotate(354 46 46)" fill="#c9cacd"/><circle cx="46" cy="46" r="26" fill="#c3c4c8"/><circle cx="46" cy="46" r="23" fill="none" stroke="#56575c" stroke-width="4"/><g stroke="#56575c" stroke-width="4.500"><path d="M46 46V23M46 46l19.900 11.500M46 46L26.100 57.500"/></g><circle cx="46" cy="46" r="5" fill="#56575c"/><circle cx="46" cy="46" r="1.800" fill="#c3c4c8"/></svg></div>
<div style="position:absolute;left:1553px;top:1656px;width:43px;height:43px;border-radius:50%;background:#ee4e42"></div>
<div class="t" style="left:1568.5px;top:1667.7px;font-size:24px;font-weight:400;color:#fff;letter-spacing:0.000px;">1</div>
<div style="position:absolute;left:1611px;top:1666.5px;width:92px;height:92px;border-radius:21px;background:linear-gradient(180deg,#c266f2,#8331d0);box-shadow:0 1px 3px rgba(0,0,0,.3);overflow:hidden;"><svg width="92" height="92" viewBox="0 0 92 92" fill="none" stroke="#fff" stroke-width="5" stroke-linecap="round"><path d="M25.500 62a29 29 0 1 1 41 0"/><path d="M33 52a17.500 17.500 0 1 1 26 0"/><circle cx="46" cy="41" r="7.500" fill="#fff" stroke="none"/><path d="M39.500 57c0-5 13-5 13 0l-2.500 20c-.5 4-7.500 4-8 0z" fill="#fff" stroke="none"/></svg></div>
<div style="position:absolute;left:1732.6px;top:1666.5px;width:92px;height:92px;border-radius:21px;background:linear-gradient(180deg,#1d2523,#0d1110);box-shadow:0 1px 3px rgba(0,0,0,.3);overflow:hidden;"><svg width="92" height="92" viewBox="0 0 92 92"><g transform="translate(11 28) scale(.185)"><path fill="#fff" d="M150.400 68.200c-1 .8-18.600 10.700-18.600 32.800 0 25.500 22.400 34.600 23.100 34.800-.1.600-3.600 12.400-11.800 24.400-7.300 10.600-15 21.100-26.700 21.100s-14.700-6.800-28.200-6.800c-13.200 0-17.800 7-28.500 7s-18.200-9.800-26.700-21.800C23.100 145.600 15 123.600 15 102.700c0-33.500 21.800-51.300 43.200-51.300 11.400 0 20.900 7.500 28 7.500 6.800 0 17.400-7.900 30.400-7.900 4.900 0 22.500.4 34 17.200zM110.100 36.900c5.400-6.400 9.200-15.200 9.200-24 0-1.200-.1-2.500-.3-3.500-8.700.3-19.100 5.800-25.400 13.100-4.900 5.600-9.500 14.400-9.500 23.400 0 1.300.2 2.700.3 3.100.6.100 1.500.2 2.400.2 7.800 0 17.700-5.200 23.300-12.300z"/></g></svg></div>
<div class="t" style="left:1777.0px;top:1692.2px;font-size:41.12px;font-weight:400;color:#fff;letter-spacing:2.056px;">tv</div>
<div style="position:absolute;left:1854.8px;top:1666.5px;width:92px;height:92px;border-radius:21px;background:linear-gradient(180deg,#f4f2ee,#ebe8e2);box-shadow:0 1px 3px rgba(0,0,0,.3);overflow:hidden;"><div style="position:absolute;left:0;top:0;width:92px;height:24px;background:linear-gradient(180deg,#fbd54e,#f6c634)"></div><div style="position:absolute;left:0;top:24px;width:92px;height:2px;background:repeating-linear-gradient(90deg,#bdb9ae 0 2px,transparent 2px 4.500px)"></div><div style="position:absolute;left:0;top:45px;width:92px;height:1.500px;background:#cfccc5"></div><div style="position:absolute;left:0;top:68px;width:92px;height:1.500px;background:#cfccc5"></div></div>
<div style="position:absolute;left:1990px;top:1664px;width:2px;height:108px;background:#2f3038"></div>
<div style="position:absolute;left:2023px;top:1683px;width:108px;height:60px;background:#fff;box-shadow:0 0 0 1px rgba(0,0,0,.25)"><div style="position:absolute;left:3px;top:3px;width:9px;height:2px;background:linear-gradient(90deg,#e55 33%,#eb4 33% 66%,#5b5 66%)"></div><div style="position:absolute;left:5px;top:8px;width:40px;height:5px;background:repeating-linear-gradient(180deg,#999 0 1px,transparent 1px 2px)"></div><div style="position:absolute;left:5px;top:17px;width:14px;height:3px;background:repeating-linear-gradient(180deg,#999 0 1px,transparent 1px 2px)"></div><div style="position:absolute;left:5px;top:22px;width:98px;height:5px;background:repeating-linear-gradient(180deg,#777 0 1px,transparent 1px 2px)"></div><div style="position:absolute;left:5px;top:28px;width:60px;height:2px;background:#888"></div><div style="position:absolute;left:5px;top:33px;width:12px;height:3px;background:repeating-linear-gradient(180deg,#999 0 1px,transparent 1px 2px)"></div></div>
<div style="position:absolute;left:2094px;top:1730px;width:34px;height:34px;border-radius:8px;background:linear-gradient(180deg,#2a74ee,#3fc0fb)"><svg width="34" height="34" viewBox="0 0 34 34"><rect x="5" y="10" width="24" height="15" rx="2" fill="#f4f4f4"/><path d="M6 11l11 8 11-8" fill="none" stroke="#bbb" stroke-width="1.200"/></svg></div>
<svg style="position:absolute;left:2155px;top:1656px" width="88" height="108" viewBox="0 0 88 108"><defs><linearGradient id="trg" x1="0" x2="1"><stop offset="0" stop-color="#d9dadd"/><stop offset=".5" stop-color="#f4f4f5"/><stop offset="1" stop-color="#cfd0d3"/></linearGradient></defs><path d="M6 22L16 5 30 12 44 2 58 12 72 4 82 22z" fill="#e6e6e6"/><path d="M20 10l10 8-8 6zM40 8l12 4-6 10zM60 10l10 6-9 8z" fill="#8a9aa8"/><path d="M28 14l6 6-4 4z" fill="#d66"/><path d="M52 12l6 5-5 5z" fill="#6a8"/><path d="M3 22h82l-8 80c-.5 3-3 5-6 5H17c-3 0-5.500-2-6-5z" fill="url(#trg)" opacity=".93"/><ellipse cx="44" cy="22" rx="41" ry="6" fill="none" stroke="#f6f6f6" stroke-width="2.500"/></svg>
<div style="position:absolute;left:677px;top:1778px;width:8px;height:8px;border-radius:50%;background:#0c0c0e"></div>
<div style="position:absolute;left:799px;top:1778px;width:8px;height:8px;border-radius:50%;background:#0c0c0e"></div>
<div style="position:absolute;left:1043px;top:1778px;width:8px;height:8px;border-radius:50%;background:#0c0c0e"></div>
<div style="position:absolute;left:1164px;top:1778px;width:8px;height:8px;border-radius:50%;background:#0c0c0e"></div>
<div style="position:absolute;left:1408px;top:1778px;width:8px;height:8px;border-radius:50%;background:#0c0c0e"></div>
<div style="position:absolute;left:1896.8px;top:1778px;width:8px;height:8px;border-radius:50%;background:#0c0c0e"></div>
</body></html>
